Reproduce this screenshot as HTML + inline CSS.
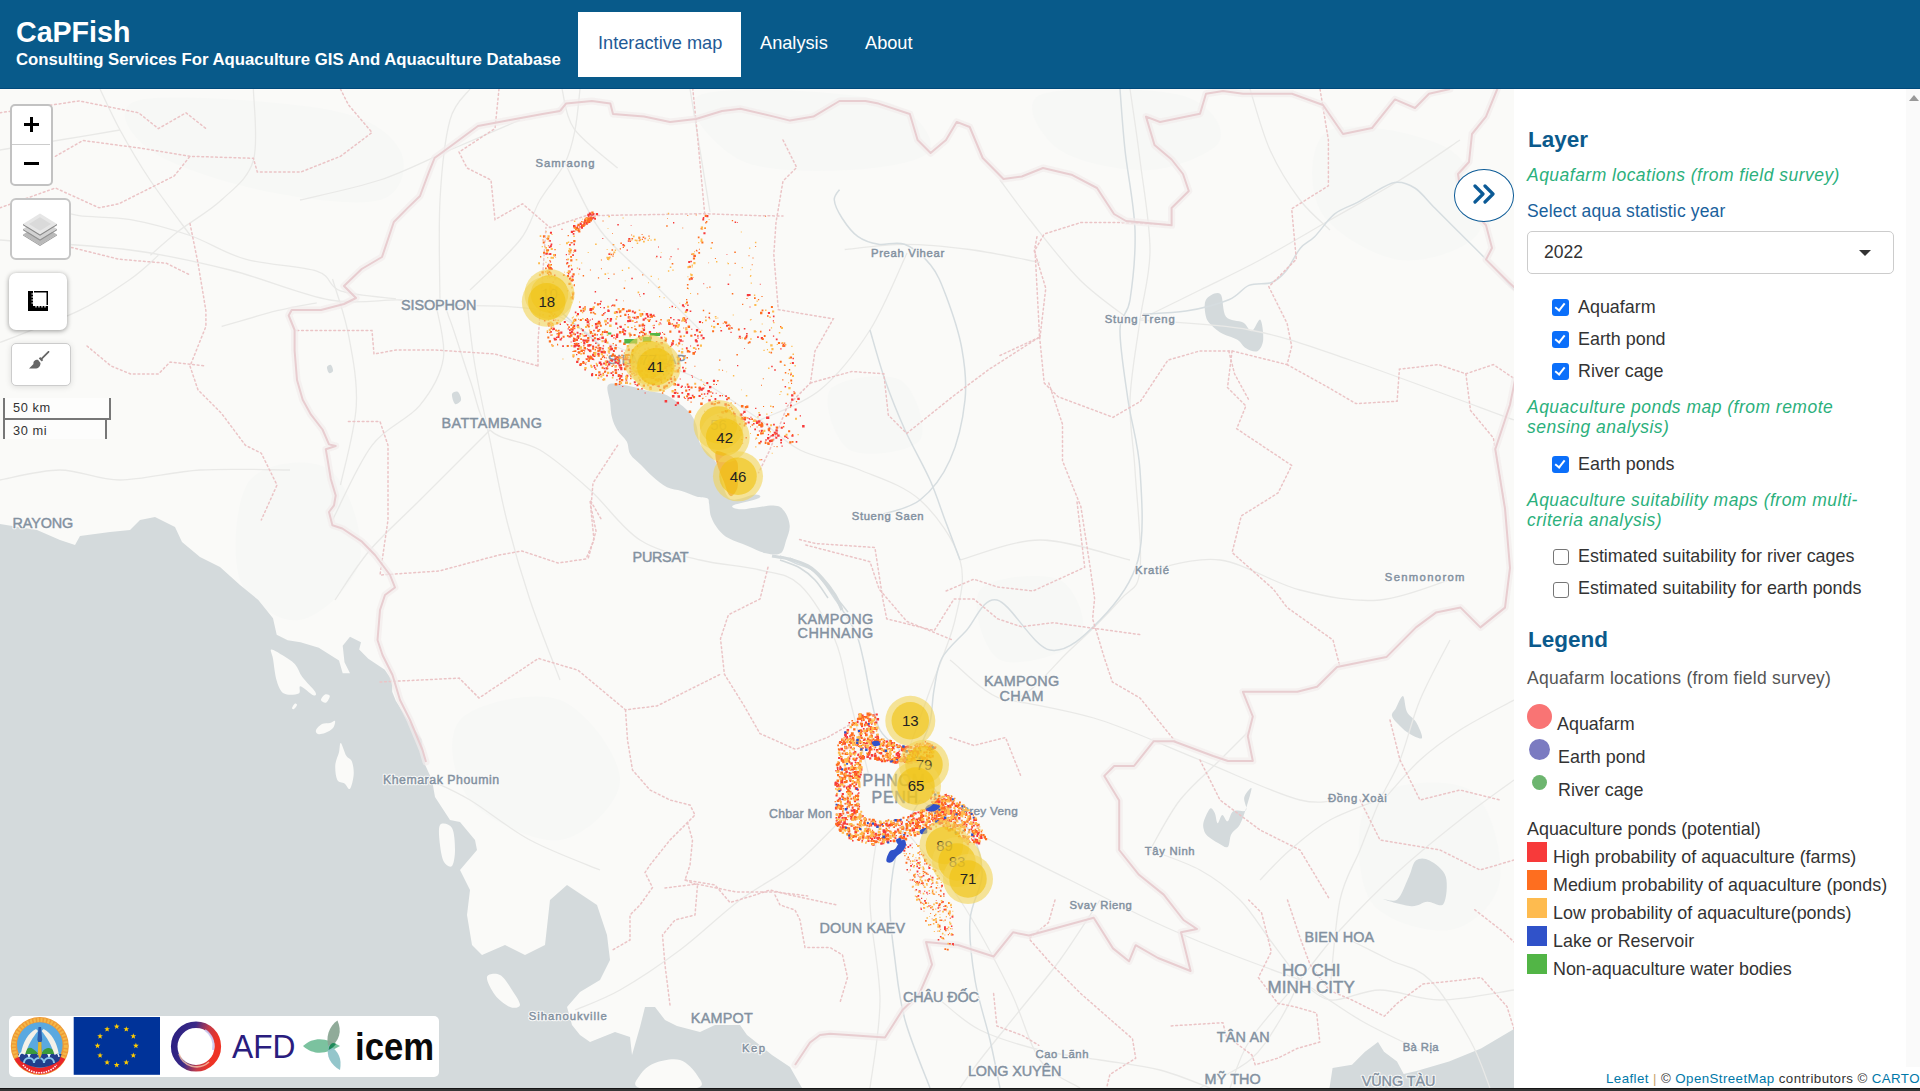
<!DOCTYPE html>
<html><head><meta charset="utf-8">
<style>
*{box-sizing:border-box;margin:0;padding:0}
html,body{width:1920px;height:1091px;overflow:hidden;font-family:"Liberation Sans",sans-serif;background:#fff}
#hdr{position:absolute;left:0;top:0;width:1920px;height:89px;background:#085a8a;border-bottom:1px solid #004a7c}
#title{position:absolute;left:16px;top:15.5px;color:#fff;font-weight:bold;font-size:28.6px;white-space:nowrap}
#sub{position:absolute;left:16px;top:50px;color:#fff;font-weight:bold;font-size:16.74px;white-space:nowrap}
#navsel{position:absolute;left:578px;top:12px;width:163px;height:65px;background:#fff}
.nav{position:absolute;top:33px;font-size:18.2px;color:#fff;white-space:nowrap}

#panel{position:absolute;left:1514px;top:89px;width:406px;height:999px;background:#fff}
#bot{position:absolute;left:0;top:1088px;width:1920px;height:3px;background:#353535;border-top:1px solid #151515}
.t{position:absolute;white-space:nowrap}
#zoomc{position:absolute;left:9.5px;top:103.5px;width:43.5px;height:82px;border:2.5px solid #c2c2c2;border-radius:5px;background:#fff;overflow:hidden}
.zb{position:absolute;left:0;top:0;width:38.5px;height:39px;border-bottom:1px solid #ccc}
.zb.zm{top:39px;border-bottom:none;height:38px}
.zb::before,.zb::after{content:"";position:absolute;background:#000}
.zb:first-child{font-size:0}
.zb:first-child::before{left:12.5px;top:17px;width:15px;height:3.2px}
.zb:first-child::after{left:18.4px;top:11px;width:3.2px;height:15px}
.zm::before{left:12.5px;top:17.5px;width:15px;height:3.2px}
.zm::after{display:none}
#layc{position:absolute;left:9.5px;top:198px;width:61.5px;height:61.5px;border:2.5px solid #c6c6c6;border-radius:6px;background:#fff}
#measc{position:absolute;left:9px;top:272.5px;width:58px;height:57.5px;border-radius:7px;background:#fff;box-shadow:0 1px 5px rgba(0,0,0,0.4)}
#brushc{position:absolute;left:10.5px;top:342.5px;width:60px;height:43px;border:1px solid #ccc;border-radius:5px;background:#fff;box-shadow:0 1px 6px rgba(0,0,0,0.12)}
#scale{position:absolute;left:3px;top:398px}
.sl1{position:absolute;left:0;top:0;width:108px;height:22px;border:2px solid #777;border-top:none;background:rgba(255,255,255,0.5);font-size:12.8px;letter-spacing:0.6px;color:#333;padding:2px 0 0 8px;line-height:16px}
.sl2{position:absolute;left:0;top:20px;width:104px;height:21px;border:2px solid #777;border-bottom:none;background:rgba(255,255,255,0.5);font-size:12.8px;letter-spacing:0.6px;color:#333;padding:3px 0 0 8px;line-height:16px}
#toggle{position:absolute;left:1453.5px;top:169px;width:60px;height:52.5px;border:1.4px solid #0b5a96;border-radius:50%;background:#fff}
#attr{z-index:5;position:absolute;left:1600px;top:1068px;width:330px;height:20px;padding:3px 0 0 6px;background:rgba(255,255,255,0.8);font-size:13.3px;letter-spacing:0.42px;color:#333;white-space:nowrap}
.ln{color:#0078a8}
#logos{position:absolute;left:9px;top:1016px;width:430px;height:61px;background:#fff;border-radius:5px}

.h2{font-weight:bold;font-size:22.5px;color:#0b5a8c}
.gi{font-style:italic;font-size:17.5px;letter-spacing:0.48px;color:#2bb07c}
.sel{font-size:17.5px;letter-spacing:0.15px;color:#1a619c}
.lbl{font-size:17.9px;color:#333}
.lg0{font-size:17.5px;letter-spacing:0.25px;color:#555}
#selbox{position:absolute;left:13px;top:142px;width:367px;height:43px;border:1px solid #ccc;border-radius:5px;background:#fff}
#selbox span{position:absolute;left:16px;top:10px;font-size:17.5px;color:#333}
#selbox i{position:absolute;left:331px;top:18px;width:0;height:0;border-left:6px solid transparent;border-right:6px solid transparent;border-top:6px solid #333}
.cb{position:absolute;width:16.5px;height:16.5px;border-radius:3px;border:1.5px solid #767676;background:#fff;margin:-0.5px 0 0 -0.5px}
.cb.on{background:#0b6cf7;border:none}
.cb.on{width:17px;height:17px;margin:-1px 0 0 -1px;background:#0b6ffa}
.cb.on::after{content:"";position:absolute;left:5.2px;top:1.8px;width:4px;height:8px;border-right:2.8px solid #fff;border-bottom:2.8px solid #fff;transform:rotate(38deg)}
.dot{position:absolute;border-radius:50%}
.sq{position:absolute;left:13px;width:20px;height:20px}
#sbar{position:absolute;left:392px;top:0;width:14px;height:978px;background:#fafafa}
#sarrow{position:absolute;left:395px;top:6px;width:0;height:0;border-left:5px solid transparent;border-right:5px solid transparent;border-bottom:6px solid #999}

</style></head><body>
<!--MAP--><svg id="mapsvg" width="1514" height="1088" viewBox="0 0 1514 1088" style="position:absolute;left:0;top:0">
<rect x="0" y="0" width="1514" height="1088" fill="#fafaf8"/>
<path d="M140 100 C170.0 93.3 286.7 101.7 330.0 110.0 C373.3 118.3 391.7 135.0 400.0 150.0 C408.3 165.0 403.3 193.3 380.0 200.0 C356.7 206.7 298.3 198.3 260.0 190.0 C221.7 181.7 170.0 165.0 150.0 150.0 C130.0 135.0 110.0 106.7 140.0 100.0 Z" fill="#f7f8f6"/>
<path d="M700 95 C723.3 85.0 841.7 90.8 880.0 100.0 C918.3 109.2 935.0 138.3 930.0 150.0 C925.0 161.7 881.7 168.3 850.0 170.0 C818.3 171.7 765.0 172.5 740.0 160.0 C715.0 147.5 676.7 105.0 700.0 95.0 Z" fill="#f7f8f6"/>
<path d="M1040 95 C1060.0 85.8 1150.0 87.5 1180.0 95.0 C1210.0 102.5 1225.0 127.5 1220.0 140.0 C1215.0 152.5 1176.7 168.3 1150.0 170.0 C1123.3 171.7 1078.3 162.5 1060.0 150.0 C1041.7 137.5 1020.0 104.2 1040.0 95.0 Z" fill="#f7f8f6"/>
<path d="M1330 130 C1351.7 120.0 1425.0 133.3 1450.0 150.0 C1475.0 166.7 1488.3 211.7 1480.0 230.0 C1471.7 248.3 1426.7 263.3 1400.0 260.0 C1373.3 256.7 1331.7 231.7 1320.0 210.0 C1308.3 188.3 1308.3 140.0 1330.0 130.0 Z" fill="#f7f8f6"/>
<path d="M250 480 C265.0 461.7 311.7 456.7 330.0 470.0 C348.3 483.3 365.0 535.0 360.0 560.0 C355.0 585.0 320.0 616.7 300.0 620.0 C280.0 623.3 248.3 603.3 240.0 580.0 C231.7 556.7 235.0 498.3 250.0 480.0 Z" fill="#f7f8f6"/>
<path d="M460 720 C475.0 703.3 533.3 690.0 560.0 700.0 C586.7 710.0 620.0 756.7 620.0 780.0 C620.0 803.3 585.0 836.7 560.0 840.0 C535.0 843.3 486.7 820.0 470.0 800.0 C453.3 780.0 445.0 736.7 460.0 720.0 Z" fill="#f7f8f6"/>
<path d="M1370 800 C1386.7 781.7 1448.3 776.7 1470.0 790.0 C1491.7 803.3 1503.3 856.7 1500.0 880.0 C1496.7 903.3 1471.7 926.7 1450.0 930.0 C1428.3 933.3 1383.3 921.7 1370.0 900.0 C1356.7 878.3 1353.3 818.3 1370.0 800.0 Z" fill="#f7f8f6"/>
<path d="M980 590 C990.0 576.7 1043.3 571.7 1060.0 580.0 C1076.7 588.3 1090.0 626.7 1080.0 640.0 C1070.0 653.3 1016.7 668.3 1000.0 660.0 C983.3 651.7 970.0 603.3 980.0 590.0 Z" fill="#f7f8f6"/>
<path d="M830 390 C838.3 378.3 885.0 371.7 900.0 380.0 C915.0 388.3 928.3 428.3 920.0 440.0 C911.7 451.7 865.0 458.3 850.0 450.0 C835.0 441.7 821.7 401.7 830.0 390.0 Z" fill="#f7f8f6"/>
<path d="M0 524 L37 530 L60 540 L75 545 L80 536 L110 532 L130 530 L140 520 L155 517 L175 527 L182 542 L200 557 L220 567 L240 585 L258.3 600 L273 618.3 L276.7 634.8 L287.7 640.3 L300.5 642.2 L318.8 647.7 L339 660.5 L342.7 673.3 L350 673.3 L344.5 662.3 L342.7 645.8 L350 636.7 L361 642.2 L359.2 649.5 L368.3 658.7 L384.8 669.7 L392.2 680.7 L392.2 691.7 L395.8 700.8 L405 715.5 L421.5 739.3 L425.2 765 L432 780 L435 797 L450 820 L460 822 L475 840 L477 850 L460 870 L470 890 L467 915 L472 945 L482 955 L505 945 L525 955 L545 945 L550 900 L567 885 L597 905 L607 935 L610 960 L600 980 L580 992 L567 1007 L572 1025 L580 1035 L590 1042 L615 1032 L630 1037 L632 1055 L640 1027 L645 1007 L655 1007 L665 1020 L677 1026 L700 1032 L715 1025 L740 1025 L747 1035 L772 1055 L790 1067 L802 1088 L0 1088 Z" fill="#d4dadc"/>
<path d="M271.2 649.5 C272.7 648.9 278.2 652.5 282.2 655.0 C286.2 657.5 291.6 660.5 295.0 664.2 C298.4 667.9 298.9 672.4 302.3 677.0 C305.7 681.6 313.4 688.7 315.2 691.7 C317.0 694.8 315.8 696.2 313.3 695.3 C310.9 694.4 302.9 686.5 300.5 686.2 C298.1 685.9 301.4 692.3 298.7 693.5 C295.9 694.7 287.7 695.6 284.0 693.5 C280.3 691.4 278.5 686.5 276.7 680.7 C274.9 674.9 273.9 663.9 273.0 658.7 C272.1 653.5 269.7 650.1 271.2 649.5 Z" fill="#fafaf8"/>
<path d="M340.8 743 C342.0 743.6 344.5 752.8 346.3 755.8 C348.1 758.8 350.6 758.2 351.8 761.3 C353.0 764.4 354.0 769.6 353.7 774.2 C353.4 778.8 351.5 787.3 350.0 788.8 C348.5 790.3 346.6 784.9 344.5 783.4 C342.4 781.9 338.7 782.8 337.2 779.7 C335.7 776.6 335.0 769.6 335.3 765.0 C335.6 760.4 338.1 755.9 339.0 752.2 C339.9 748.5 339.6 742.4 340.8 743.0 Z" fill="#fafaf8"/>
<path d="M316 730 C316.7 728.3 319.7 725.2 322.0 724.0 C324.3 722.8 327.8 723.5 330.0 723.0 C332.2 722.5 334.5 720.2 335.0 721.0 C335.5 721.8 334.7 726.0 333.0 728.0 C331.3 730.0 327.5 732.0 325.0 733.0 C322.5 734.0 319.5 734.5 318.0 734.0 C316.5 733.5 315.3 731.7 316.0 730.0 Z" fill="#fafaf8"/>
<path d="M321 700 C320.8 698.6 323.5 695.1 325.0 694.4 C326.5 693.7 329.6 694.6 329.8 696.0 C330.0 697.4 327.5 702.0 326.0 702.7 C324.5 703.4 321.2 701.4 321.0 700.0 Z" fill="#fafaf8"/>
<path d="M292 708 C292.2 707.1 294.2 704.1 295.0 703.6 C295.8 703.1 297.2 704.1 297.0 705.0 C296.8 705.9 294.8 708.5 294.0 709.0 C293.2 709.5 291.8 708.9 292.0 708.0 Z" fill="#fafaf8"/>
<path d="M440 825 C442.0 822.2 449.5 823.8 452.0 828.0 C454.5 832.2 455.0 843.7 455.0 850.0 C455.0 856.3 453.8 864.0 452.0 866.0 C450.2 868.0 446.0 865.5 444.0 862.0 C442.0 858.5 440.7 851.2 440.0 845.0 C439.3 838.8 438.0 827.8 440.0 825.0 Z" fill="#fafaf8"/>
<path d="M487 977 C487.8 973.7 495.8 972.8 500.0 975.0 C504.2 977.2 508.7 985.0 512.0 990.0 C515.3 995.0 520.3 1002.2 520.0 1005.0 C519.7 1007.8 514.2 1008.7 510.0 1007.0 C505.8 1005.3 498.8 1000.0 495.0 995.0 C491.2 990.0 486.2 980.3 487.0 977.0 Z" fill="#fafaf8"/>
<path d="M640 1075 C642.5 1070.8 648.3 1065.5 655.0 1063.0 C661.7 1060.5 673.0 1058.0 680.0 1060.0 C687.0 1062.0 694.2 1070.3 697.0 1075.0 C699.8 1079.7 706.5 1085.8 697.0 1088.0 C687.5 1090.2 649.5 1090.2 640.0 1088.0 C630.5 1085.8 637.5 1079.2 640.0 1075.0 Z" fill="#fafaf8"/>
<path d="M1329.5 1088 L1332.6 1068 L1352 1064.7 L1365 1051.8 L1378 1042 L1384 1051.8 L1397 1061.5 L1403.7 1074 L1416.6 1071 L1449 1061.5 L1481 1048.5 L1514 1029 L1514 1088 Z" fill="#d4dadc"/>
<path d="M608.3 384.7 C611.0 381.8 620.6 384.7 626.7 385.6 C632.8 386.5 638.9 388.8 645.0 390.2 C651.1 391.6 658.1 392.0 663.3 393.8 C668.5 395.6 671.8 398.1 676.1 401.2 C680.4 404.2 685.6 408.1 689.0 412.1 C692.4 416.1 694.5 419.8 696.3 425.0 C698.1 430.2 697.5 438.1 700.0 443.3 C702.5 448.5 708.0 452.1 711.0 456.1 C714.0 460.1 715.2 460.1 718.3 467.1 C721.3 474.1 723.2 493.7 729.3 498.3 C735.4 502.9 750.1 494.6 755.0 494.6 C759.9 494.6 762.3 496.5 758.6 498.3 C754.9 500.1 735.6 503.8 732.9 505.6 C730.1 507.4 735.4 509.3 742.1 509.3 C748.8 509.3 766.3 505.3 773.3 505.6 C780.3 505.9 781.5 507.7 784.2 511.1 C786.9 514.5 789.4 520.9 789.7 525.8 C790.0 530.7 787.6 535.8 786.1 540.4 C784.6 545.0 784.0 551.1 780.6 553.3 C777.2 555.4 771.4 554.5 765.9 553.3 C760.4 552.1 753.7 548.3 747.6 545.9 C741.5 543.5 734.2 541.4 729.3 538.6 C724.4 535.9 721.3 533.1 718.3 529.4 C715.2 525.7 712.5 520.9 711.0 516.6 C709.5 512.3 709.7 506.9 709.1 503.8 C708.5 500.8 709.4 499.5 707.3 498.3 C705.2 497.1 700.6 497.6 696.3 496.4 C692.0 495.2 686.5 492.4 681.6 490.9 C676.7 489.4 671.9 489.7 667.0 487.3 C662.1 484.9 656.6 480.0 652.3 476.3 C648.0 472.6 645.0 469.0 641.3 465.3 C637.6 461.6 632.7 458.3 630.3 454.3 C627.9 450.3 628.8 445.5 626.7 441.5 C624.6 437.5 620.0 434.5 617.5 430.5 C615.0 426.5 613.2 422.2 612.0 417.6 C610.8 413.0 610.8 408.5 610.2 403.0 C609.6 397.5 605.5 387.6 608.3 384.7 Z" fill="#d4dadc"/>
<path d="M1206 299.7 C1208.4 295.9 1217.0 291.1 1220.3 294.0 C1223.6 296.9 1222.2 312.0 1226.0 316.8 C1229.8 321.6 1238.8 320.2 1243.1 322.6 C1247.4 325.0 1248.8 331.6 1251.7 331.1 C1254.6 330.6 1258.4 318.3 1260.3 319.7 C1262.2 321.1 1263.7 334.4 1263.2 339.7 C1262.7 344.9 1260.3 349.8 1257.4 351.2 C1254.5 352.6 1249.3 350.2 1246.0 348.3 C1242.7 346.4 1241.2 342.1 1237.4 339.7 C1233.6 337.3 1227.4 336.4 1223.1 334.0 C1218.8 331.6 1214.5 328.3 1211.7 325.4 C1208.9 322.5 1207.0 321.1 1206.0 316.8 C1205.0 312.5 1203.6 303.5 1206.0 299.7 Z" fill="#d4dadc"/>
<path d="M1203.8 821.3 C1204.9 817.8 1208.4 809.9 1210.2 808.5 C1212.0 807.1 1213.6 810.5 1214.8 813.0 C1216.0 815.5 1216.4 822.9 1217.6 823.2 C1218.8 823.5 1220.5 815.2 1222.2 814.9 C1223.9 814.6 1225.9 821.9 1227.7 821.3 C1229.5 820.7 1230.2 813.0 1233.2 811.2 C1236.2 809.4 1244.2 812.6 1246.0 810.3 C1247.8 808.0 1243.3 801.2 1244.2 797.5 C1245.1 793.8 1251.2 786.5 1251.5 788.3 C1251.8 790.1 1248.0 802.4 1246.0 808.5 C1244.0 814.6 1242.0 820.7 1239.6 825.0 C1237.1 829.3 1233.3 830.5 1231.3 834.2 C1229.3 837.9 1229.8 845.5 1227.7 847.0 C1225.6 848.5 1221.9 845.1 1218.5 843.3 C1215.1 841.5 1210.0 838.3 1207.5 836.0 C1205.0 833.7 1204.4 832.1 1203.8 829.6 C1203.2 827.1 1202.7 824.8 1203.8 821.3 Z" fill="#d4dadc"/>
<path d="M1397.5 899.3 C1401.7 895.5 1405.9 882.9 1409.0 876.4 C1412.1 869.9 1412.5 863.1 1415.9 860.4 C1419.3 857.7 1424.6 857.7 1429.6 860.4 C1434.6 863.1 1443.4 869.1 1445.7 876.4 C1448.0 883.7 1446.5 899.8 1443.4 904.0 C1440.3 908.2 1432.7 901.3 1427.3 901.7 C1421.9 902.1 1418.5 906.6 1411.3 906.2 C1404.0 905.8 1386.1 900.4 1383.8 899.3 C1381.5 898.1 1393.3 903.1 1397.5 899.3 Z" fill="#d4dadc"/>
<path d="M1396 708 C1397.8 704.7 1401.2 695.3 1403.0 696.0 C1404.8 696.7 1404.8 707.7 1407.0 712.0 C1409.2 716.3 1413.5 717.7 1416.0 722.0 C1418.5 726.3 1423.0 736.0 1422.0 738.0 C1421.0 740.0 1413.7 736.0 1410.0 734.0 C1406.3 732.0 1403.0 729.0 1400.0 726.0 C1397.0 723.0 1392.7 719.0 1392.0 716.0 C1391.3 713.0 1394.2 711.3 1396.0 708.0 Z" fill="#d4dadc"/>
<path d="M452 394 C452.5 392.0 456.5 391.0 458.0 392.0 C459.5 393.0 461.5 398.0 461.0 400.0 C460.5 402.0 456.5 405.0 455.0 404.0 C453.5 403.0 451.5 396.0 452.0 394.0 Z" fill="#d4dadc"/>
<path d="M327 367 C327.3 365.7 330.0 364.3 331.0 365.0 C332.0 365.7 333.3 369.7 333.0 371.0 C332.7 372.3 330.0 373.7 329.0 373.0 C328.0 372.3 326.7 368.3 327.0 367.0 Z" fill="#d4dadc"/>
<path d="M870 780 C866.7 766.7 855.8 723.3 850.0 700.0 C844.2 676.7 843.3 659.2 835.0 640.0 C826.7 620.8 812.5 596.7 800.0 585.0 C787.5 573.3 776.7 574.2 760.0 570.0 C743.3 565.8 720.0 565.0 700.0 560.0 C680.0 555.0 658.3 551.7 640.0 540.0 C621.7 528.3 606.7 505.0 590.0 490.0 C573.3 475.0 556.7 460.0 540.0 450.0 C523.3 440.0 501.7 441.7 490.0 430.0 C478.3 418.3 476.7 398.3 470.0 380.0 C463.3 361.7 455.0 332.5 450.0 320.0 C445.0 307.5 448.3 308.3 440.0 305.0 C431.7 301.7 418.3 300.8 400.0 300.0 C381.7 299.2 358.3 305.0 330.0 300.0 C301.7 295.0 263.3 278.3 230.0 270.0 C196.7 261.7 168.3 255.0 130.0 250.0 C91.7 245.0 21.7 241.7 0.0 240.0" fill="none" stroke="#e9e9e7" stroke-width="1.3" stroke-linejoin="round"/>
<path d="M905 760 C909.2 748.3 921.7 713.3 930.0 690.0 C938.3 666.7 950.0 641.7 955.0 620.0 C960.0 598.3 965.8 580.0 960.0 560.0 C954.2 540.0 936.7 515.0 920.0 500.0 C903.3 485.0 880.0 478.3 860.0 470.0 C840.0 461.7 816.7 458.3 800.0 450.0 C783.3 441.7 776.7 431.7 760.0 420.0 C743.3 408.3 718.3 390.0 700.0 380.0 C681.7 370.0 666.7 366.7 650.0 360.0 C633.3 353.3 618.3 348.3 600.0 340.0 C581.7 331.7 566.7 315.8 540.0 310.0 C513.3 304.2 456.7 305.8 440.0 305.0" fill="none" stroke="#e9e9e7" stroke-width="1.3" stroke-linejoin="round"/>
<path d="M950 660 C960.0 666.7 990.0 701.7 1010.0 700.0 C1030.0 698.3 1051.7 666.7 1070.0 650.0 C1088.3 633.3 1108.3 613.3 1120.0 600.0 C1131.7 586.7 1137.5 591.7 1140.0 570.0 C1142.5 548.3 1136.7 498.3 1135.0 470.0 C1133.3 441.7 1129.2 425.0 1130.0 400.0 C1130.8 375.0 1136.7 345.0 1140.0 320.0 C1143.3 295.0 1150.0 276.7 1150.0 250.0 C1150.0 223.3 1143.3 186.8 1140.0 160.0 C1136.7 133.2 1131.7 100.8 1130.0 89.0" fill="none" stroke="#e9e9e7" stroke-width="1.3" stroke-linejoin="round"/>
<path d="M860 800 C850.0 810.0 820.0 843.3 800.0 860.0 C780.0 876.7 760.0 885.0 740.0 900.0 C720.0 915.0 700.0 935.0 680.0 950.0 C660.0 965.0 637.5 980.0 620.0 990.0 C602.5 1000.0 582.5 1006.7 575.0 1010.0" fill="none" stroke="#e9e9e7" stroke-width="1.3" stroke-linejoin="round"/>
<path d="M920 800 C931.7 806.7 965.0 826.7 990.0 840.0 C1015.0 853.3 1043.3 866.7 1070.0 880.0 C1096.7 893.3 1125.0 908.3 1150.0 920.0 C1175.0 931.7 1195.0 940.0 1220.0 950.0 C1245.0 960.0 1286.7 975.0 1300.0 980.0" fill="none" stroke="#e9e9e7" stroke-width="1.3" stroke-linejoin="round"/>
<path d="M880 820 C878.3 833.3 870.0 870.0 870.0 900.0 C870.0 930.0 880.0 968.7 880.0 1000.0 C880.0 1031.3 871.7 1073.3 870.0 1088.0" fill="none" stroke="#e9e9e7" stroke-width="1.3" stroke-linejoin="round"/>
<path d="M905 830 C914.2 841.7 942.5 873.3 960.0 900.0 C977.5 926.7 996.7 963.3 1010.0 990.0 C1023.3 1016.7 1028.3 1043.7 1040.0 1060.0 C1051.7 1076.3 1073.3 1083.3 1080.0 1088.0" fill="none" stroke="#e9e9e7" stroke-width="1.3" stroke-linejoin="round"/>
<path d="M1300 980 C1306.7 971.7 1323.3 948.3 1340.0 930.0 C1356.7 911.7 1380.0 888.3 1400.0 870.0 C1420.0 851.7 1441.0 835.0 1460.0 820.0 C1479.0 805.0 1505.0 786.7 1514.0 780.0" fill="none" stroke="#e9e9e7" stroke-width="1.3" stroke-linejoin="round"/>
<path d="M1300 980 C1310.0 986.7 1340.0 1008.3 1360.0 1020.0 C1380.0 1031.7 1410.0 1045.0 1420.0 1050.0" fill="none" stroke="#e9e9e7" stroke-width="1.3" stroke-linejoin="round"/>
<path d="M1140 320 C1158.3 321.7 1215.0 323.3 1250.0 330.0 C1285.0 336.7 1306.0 345.0 1350.0 360.0 C1394.0 375.0 1486.7 410.0 1514.0 420.0" fill="none" stroke="#e9e9e7" stroke-width="1.3" stroke-linejoin="round"/>
<path d="M960 560 C973.3 556.7 1011.7 540.0 1040.0 540.0 C1068.3 540.0 1115.0 556.7 1130.0 560.0" fill="none" stroke="#e9e9e7" stroke-width="1.3" stroke-linejoin="round"/>
<path d="M440 305 C440.0 287.5 438.3 230.8 440.0 200.0 C441.7 169.2 445.0 138.5 450.0 120.0 C455.0 101.5 466.7 94.2 470.0 89.0" fill="none" stroke="#e9e9e7" stroke-width="1.3" stroke-linejoin="round"/>
<path d="M565 163 C570.8 174.2 585.8 210.5 600.0 230.0 C614.2 249.5 633.3 263.3 650.0 280.0 C666.7 296.7 691.7 321.7 700.0 330.0" fill="none" stroke="#e9e9e7" stroke-width="1.3" stroke-linejoin="round"/>
<path d="M844.7 249.5 C854.7 248.6 883.8 244.3 904.6 244.3 C925.4 244.3 947.1 246.5 969.7 249.5 C992.3 252.5 1028.3 260.3 1040.0 262.5" fill="none" stroke="#e9e9e7" stroke-width="1.3" stroke-linejoin="round"/>
<path d="M907 253 C900.8 265.8 884.5 307.2 870.0 330.0 C855.5 352.8 838.3 375.0 820.0 390.0 C801.7 405.0 770.0 415.0 760.0 420.0" fill="none" stroke="#e9e9e7" stroke-width="1.3" stroke-linejoin="round"/>
<path d="M1300 980 C1291.7 990.0 1261.7 1022.0 1250.0 1040.0 C1238.3 1058.0 1233.3 1080.0 1230.0 1088.0" fill="none" stroke="#e9e9e7" stroke-width="1.3" stroke-linejoin="round"/>
<path d="M1010 700 C1025.0 703.3 1068.3 710.0 1100.0 720.0 C1131.7 730.0 1166.7 746.7 1200.0 760.0 C1233.3 773.3 1275.0 793.8 1300.0 800.0 C1325.0 806.2 1341.7 797.5 1350.0 797.0" fill="none" stroke="#e9e9e7" stroke-width="1.3" stroke-linejoin="round"/>
<path d="M490 430 C478.3 441.7 440.0 480.0 420.0 500.0 C400.0 520.0 384.2 533.3 370.0 550.0 C355.8 566.7 340.8 591.7 335.0 600.0" fill="none" stroke="#e9e9e7" stroke-width="1.3" stroke-linejoin="round"/>
<path d="M0 480 C10.0 478.3 40.0 470.0 60.0 470.0 C80.0 470.0 96.7 480.0 120.0 480.0 C143.3 480.0 171.7 471.7 200.0 470.0 C228.3 468.3 275.0 470.0 290.0 470.0" fill="none" stroke="#e9e9e7" stroke-width="1.3" stroke-linejoin="round"/>
<path d="M1300 980 C1295.0 973.3 1280.0 953.3 1270.0 940.0 C1260.0 926.7 1251.7 911.7 1240.0 900.0 C1228.3 888.3 1215.0 878.3 1200.0 870.0 C1185.0 861.7 1158.3 853.3 1150.0 850.0" fill="none" stroke="#e9e9e7" stroke-width="1.3" stroke-linejoin="round"/>
<path d="M1300 980 C1305.0 983.3 1316.7 998.3 1330.0 1000.0 C1343.3 1001.7 1361.7 990.0 1380.0 990.0 C1398.3 990.0 1417.7 1000.0 1440.0 1000.0 C1462.3 1000.0 1501.7 991.7 1514.0 990.0" fill="none" stroke="#e9e9e7" stroke-width="1.3" stroke-linejoin="round"/>
<path d="M1300 980 C1296.7 986.7 1288.3 1006.7 1280.0 1020.0 C1271.7 1033.3 1263.3 1048.7 1250.0 1060.0 C1236.7 1071.3 1208.3 1083.3 1200.0 1088.0" fill="none" stroke="#e9e9e7" stroke-width="1.3" stroke-linejoin="round"/>
<path d="M1350 940 C1356.7 943.3 1376.7 953.3 1390.0 960.0 C1403.3 966.7 1416.7 966.7 1430.0 980.0 C1443.3 993.3 1460.0 1022.0 1470.0 1040.0 C1480.0 1058.0 1486.7 1080.0 1490.0 1088.0" fill="none" stroke="#e9e9e7" stroke-width="1.3" stroke-linejoin="round"/>
<path d="M1330 990 C1331.7 975.0 1335.0 923.3 1340.0 900.0 C1345.0 876.7 1353.3 866.7 1360.0 850.0 C1366.7 833.3 1373.3 815.0 1380.0 800.0 C1386.7 785.0 1393.3 776.7 1400.0 760.0 C1406.7 743.3 1411.7 720.0 1420.0 700.0 C1428.3 680.0 1445.0 650.0 1450.0 640.0" fill="none" stroke="#e9e9e7" stroke-width="1.3" stroke-linejoin="round"/>
<path d="M1150 850 C1155.0 841.7 1168.3 815.0 1180.0 800.0 C1191.7 785.0 1208.3 771.7 1220.0 760.0 C1231.7 748.3 1245.0 735.0 1250.0 730.0" fill="none" stroke="#e9e9e7" stroke-width="1.3" stroke-linejoin="round"/>
<path d="M1100 900 C1093.3 910.0 1073.3 941.7 1060.0 960.0 C1046.7 978.3 1033.3 993.3 1020.0 1010.0 C1006.7 1026.7 990.0 1047.0 980.0 1060.0 C970.0 1073.0 963.3 1083.3 960.0 1088.0" fill="none" stroke="#e9e9e7" stroke-width="1.3" stroke-linejoin="round"/>
<path d="M940 1000 C946.7 1005.0 963.3 1021.7 980.0 1030.0 C996.7 1038.3 1020.0 1045.0 1040.0 1050.0 C1060.0 1055.0 1080.0 1056.7 1100.0 1060.0 C1120.0 1063.3 1141.7 1065.3 1160.0 1070.0 C1178.3 1074.7 1201.7 1085.0 1210.0 1088.0" fill="none" stroke="#e9e9e7" stroke-width="1.3" stroke-linejoin="round"/>
<path d="M1386 797 C1391.7 790.8 1407.7 771.2 1420.0 760.0 C1432.3 748.8 1444.3 740.0 1460.0 730.0 C1475.7 720.0 1505.0 705.0 1514.0 700.0" fill="none" stroke="#e9e9e7" stroke-width="1.3" stroke-linejoin="round"/>
<path d="M1386 797 C1376.7 800.8 1346.0 811.2 1330.0 820.0 C1314.0 828.8 1301.7 840.0 1290.0 850.0 C1278.3 860.0 1265.0 875.0 1260.0 880.0" fill="none" stroke="#e9e9e7" stroke-width="1.3" stroke-linejoin="round"/>
<path d="M1139 320 C1149.2 315.0 1179.8 300.0 1200.0 290.0 C1220.2 280.0 1238.3 271.7 1260.0 260.0 C1281.7 248.3 1306.7 233.3 1330.0 220.0 C1353.3 206.7 1378.3 193.3 1400.0 180.0 C1421.7 166.7 1450.0 146.7 1460.0 140.0" fill="none" stroke="#e9e9e7" stroke-width="1.3" stroke-linejoin="round"/>
<path d="M1000 180 C1005.0 186.7 1016.7 203.3 1030.0 220.0 C1043.3 236.7 1063.3 263.3 1080.0 280.0 C1096.7 296.7 1121.7 313.3 1130.0 320.0" fill="none" stroke="#e9e9e7" stroke-width="1.3" stroke-linejoin="round"/>
<path d="M580 89 C579.2 95.8 577.5 117.7 575.0 130.0 C572.5 142.3 570.8 151.3 565.0 163.0 C559.2 174.7 547.5 187.2 540.0 200.0 C532.5 212.8 531.7 225.0 520.0 240.0 C508.3 255.0 478.3 281.7 470.0 290.0" fill="none" stroke="#e9e9e7" stroke-width="1.3" stroke-linejoin="round"/>
<path d="M300 200 C313.3 196.7 355.0 188.3 380.0 180.0 C405.0 171.7 426.7 160.0 450.0 150.0 C473.3 140.0 508.3 125.0 520.0 120.0" fill="none" stroke="#e9e9e7" stroke-width="1.3" stroke-linejoin="round"/>
<path d="M430 780 C436.7 783.3 453.3 790.0 470.0 800.0 C486.7 810.0 508.3 828.3 530.0 840.0 C551.7 851.7 588.3 865.0 600.0 870.0" fill="none" stroke="#e9e9e7" stroke-width="1.3" stroke-linejoin="round"/>
<path d="M690 89 C691.7 99.2 696.7 129.5 700.0 150.0 C703.3 170.5 708.3 201.7 710.0 212.0" fill="none" stroke="#e9e9e7" stroke-width="1.3" stroke-linejoin="round"/>
<path d="M1150 570 C1161.7 568.3 1195.0 556.7 1220.0 560.0 C1245.0 563.3 1273.3 583.3 1300.0 590.0 C1326.7 596.7 1353.3 602.3 1380.0 600.0 C1406.7 597.7 1446.7 580.0 1460.0 576.0" fill="none" stroke="#e9e9e7" stroke-width="1.3" stroke-linejoin="round"/>
<path d="M1250 89 C1253.3 99.2 1261.7 131.5 1270.0 150.0 C1278.3 168.5 1290.0 186.7 1300.0 200.0 C1310.0 213.3 1325.0 225.0 1330.0 230.0" fill="none" stroke="#e9e9e7" stroke-width="1.3" stroke-linejoin="round"/>
<path d="M51.5 207.8 C56.1 209.1 65.8 213.7 79.0 215.7 C92.2 217.7 112.1 216.3 130.6 219.6 C149.1 222.9 170.9 228.9 190.0 235.5 C209.1 242.1 224.3 253.3 245.4 259.2 C266.5 265.1 300.8 265.8 316.7 271.1 C332.6 276.4 327.3 286.3 340.5 290.9 C353.7 295.5 386.8 297.5 396.0 298.8" fill="none" stroke="#e9e9e7" stroke-width="1.3" stroke-linejoin="round"/>
<path d="M150.4 255.3 C155.0 251.3 166.1 240.8 178.0 231.5 C189.9 222.2 209.1 211.7 221.7 199.8 C234.3 187.9 248.1 178.8 253.4 160.3 C258.7 141.8 253.4 100.9 253.4 89.0" fill="none" stroke="#e9e9e7" stroke-width="1.3" stroke-linejoin="round"/>
<path d="M0 342.4 C13.2 337.1 57.2 321.3 79.0 310.7 C100.8 300.1 117.4 288.2 130.6 279.0 C143.8 269.8 153.8 259.2 158.4 255.3" fill="none" stroke="#e9e9e7" stroke-width="1.3" stroke-linejoin="round"/>
<path d="M221.7 326.5 C230.9 323.9 261.2 314.6 277.0 310.7 C292.8 306.8 310.1 304.1 316.7 302.8" fill="none" stroke="#e9e9e7" stroke-width="1.3" stroke-linejoin="round"/>
<path d="M332.5 279 C335.1 288.2 344.4 313.3 348.4 334.4 C352.4 355.5 357.6 380.6 356.3 405.7 C355.0 430.8 343.1 471.8 340.5 485.0" fill="none" stroke="#e9e9e7" stroke-width="1.3" stroke-linejoin="round"/>
<path d="M435.5 302.8 C436.8 312.0 446.0 341.1 443.4 358.2 C440.8 375.3 431.5 391.2 419.6 405.7 C407.7 420.2 386.5 426.2 372.0 445.3 C357.5 464.4 339.1 507.6 332.5 520.0" fill="none" stroke="#e9e9e7" stroke-width="1.3" stroke-linejoin="round"/>
<path d="M467 302.8 C468.3 313.3 471.0 342.2 475.0 366.0 C479.0 389.8 485.7 419.6 491.0 445.3 C496.3 471.0 500.2 494.2 506.7 520.0 C513.2 545.8 521.1 573.3 530.0 600.0 C538.9 626.7 555.0 666.7 560.0 680.0" fill="none" stroke="#e9e9e7" stroke-width="1.3" stroke-linejoin="round"/>
<path d="M562 89 C564.0 95.6 564.7 115.4 574.0 128.6 C583.3 141.8 610.3 161.4 617.6 168.0" fill="none" stroke="#e9e9e7" stroke-width="1.3" stroke-linejoin="round"/>
<path d="M100 89 C103.3 95.8 111.7 114.8 120.0 130.0 C128.3 145.2 138.3 162.5 150.0 180.0 C161.7 197.5 183.3 225.8 190.0 235.0" fill="none" stroke="#e9e9e7" stroke-width="1.3" stroke-linejoin="round"/>
<path d="M0 150 C10.0 148.3 40.0 143.3 60.0 140.0 C80.0 136.7 110.0 131.7 120.0 130.0" fill="none" stroke="#e9e9e7" stroke-width="1.3" stroke-linejoin="round"/>
<path d="M1514 290 C1509.4 284.9 1495.7 269.4 1486.3 259.6 C1476.9 249.8 1466.3 239.6 1457.7 231.0 C1449.1 222.4 1442.0 215.2 1434.8 208.0 C1427.6 200.8 1421.5 192.3 1414.8 188.0 C1408.1 183.7 1401.9 181.4 1394.7 182.4 C1387.5 183.4 1378.0 190.5 1371.8 193.8 C1365.6 197.1 1363.7 199.1 1357.5 202.4 C1351.3 205.8 1341.9 208.2 1334.7 213.9 C1327.5 219.6 1320.3 231.0 1314.6 236.7 C1308.9 242.4 1305.1 242.5 1300.3 248.2 C1295.5 253.9 1290.8 265.3 1286.0 271.0 C1281.2 276.7 1277.9 280.1 1271.7 282.5 C1265.5 284.9 1256.1 282.5 1248.9 285.4 C1241.8 288.3 1239.3 295.4 1228.8 299.7 C1218.3 304.0 1200.3 308.7 1186.0 311.1 C1171.7 313.5 1150.2 313.5 1143.0 314.0" fill="none" stroke="#d6dde0" stroke-width="1.5" stroke-linejoin="round"/>
<path d="M839.5 189.6 C838.6 191.3 833.9 195.3 834.3 200.0 C834.7 204.7 838.1 211.9 842.0 218.0 C845.9 224.1 851.6 232.0 857.7 236.4 C863.8 240.8 870.7 243.0 878.5 244.3 C886.3 245.6 895.8 240.9 904.5 244.3 C913.2 247.8 923.6 256.3 930.6 265.0 C937.6 273.7 941.0 282.4 946.2 296.3 C951.4 310.2 958.7 331.1 961.8 348.4 C964.9 365.7 967.0 381.4 965.0 400.0 C963.0 418.6 957.5 443.3 950.0 460.0 C942.5 476.7 931.7 490.8 920.0 500.0 C908.3 509.2 886.7 512.5 880.0 515.0" fill="none" stroke="#d6dde0" stroke-width="1.5" stroke-linejoin="round"/>
<path d="M780 556 C782.5 557.2 789.2 560.3 795.0 563.0 C800.8 565.7 808.3 566.0 815.0 572.0 C821.7 578.0 828.3 589.2 835.0 599.0 C841.7 608.8 850.3 621.2 855.0 631.0 C859.7 640.8 860.3 646.8 863.0 658.0 C865.7 669.2 868.2 686.0 871.0 698.0 C873.8 710.0 875.2 721.3 880.0 730.0 C884.8 738.7 896.7 746.7 900.0 750.0" fill="none" stroke="#d6dde0" stroke-width="1.5" stroke-linejoin="round"/>
<path d="M1120 89 C1120.8 99.2 1122.5 126.5 1125.0 150.0 C1127.5 173.5 1134.2 205.0 1135.0 230.0 C1135.8 255.0 1132.5 283.3 1130.0 300.0 C1127.5 316.7 1120.3 313.3 1120.0 330.0 C1119.7 346.7 1124.7 376.7 1128.0 400.0 C1131.3 423.3 1138.3 443.3 1140.0 470.0 C1141.7 496.7 1144.7 535.0 1138.0 560.0 C1131.3 585.0 1114.7 605.0 1100.0 620.0 C1085.3 635.0 1067.2 653.3 1050.0 650.0 C1032.8 646.7 1011.0 603.2 997.0 600.0 C983.0 596.8 975.2 621.3 966.0 631.0 C956.8 640.7 947.3 648.2 942.0 658.0 C936.7 667.8 936.0 679.3 934.0 690.0 C932.0 700.7 932.7 710.3 930.0 722.0 C927.3 733.7 917.2 748.7 918.0 760.0 C918.8 771.3 928.0 780.0 935.0 790.0 C942.0 800.0 953.3 811.7 960.0 820.0 C966.7 828.3 971.3 830.7 975.0 840.0 C978.7 849.3 982.8 862.7 982.0 876.0 C981.2 889.3 971.2 902.7 970.0 920.0 C968.8 937.3 971.7 960.0 975.0 980.0 C978.3 1000.0 985.8 1022.0 990.0 1040.0 C994.2 1058.0 998.3 1080.0 1000.0 1088.0" fill="none" stroke="#d6dde0" stroke-width="1.5" stroke-linejoin="round"/>
<path d="M870 330 C872.5 338.3 879.2 363.3 885.0 380.0 C890.8 396.7 897.5 413.3 905.0 430.0 C912.5 446.7 923.3 465.0 930.0 480.0 C936.7 495.0 940.0 506.7 945.0 520.0 C950.0 533.3 957.5 553.3 960.0 560.0" fill="none" stroke="#d6dde0" stroke-width="1.5" stroke-linejoin="round"/>
<path d="M548 300 C551.7 303.3 561.3 312.5 570.0 320.0 C578.7 327.5 595.0 340.8 600.0 345.0" fill="none" stroke="#d6dde0" stroke-width="1.5" stroke-linejoin="round"/>
<path d="M920 800 C916.7 806.7 905.0 823.3 900.0 840.0 C895.0 856.7 890.8 880.0 890.0 900.0 C889.2 920.0 892.5 940.0 895.0 960.0 C897.5 980.0 899.2 998.7 905.0 1020.0 C910.8 1041.3 925.8 1076.7 930.0 1088.0" fill="none" stroke="#d6dde0" stroke-width="1.5" stroke-linejoin="round"/>
<path d="M772 556 C774.8 556.5 783.0 557.3 789.0 559.0 C795.0 560.7 802.5 562.8 808.0 566.0 C813.5 569.2 817.5 573.2 822.0 578.0 C826.5 582.8 831.7 589.7 835.0 595.0 C838.3 600.3 840.8 607.5 842.0 610.0" fill="none" stroke="#d4dadc" stroke-width="3.2"/>
<path d="M780 560 C783.3 561.3 794.2 564.7 800.0 568.0 C805.8 571.3 810.3 575.0 815.0 580.0 C819.7 585.0 825.8 595.0 828.0 598.0" fill="none" stroke="#d4dadc" stroke-width="1.6"/>
<path d="M790 558 C793.7 560.0 805.3 564.7 812.0 570.0 C818.7 575.3 824.0 583.0 830.0 590.0 C836.0 597.0 845.0 608.3 848.0 612.0" fill="none" stroke="#d4dadc" stroke-width="1.4"/>
<path d="M297 330.5 L372 330.5 L374 354 L396 350 L435.5 350 L495 354 L538 366" fill="none" stroke="#ebc4c6" stroke-width="1.5" stroke-dasharray="1.8 2.8" stroke-linecap="round"/>
<path d="M459 152 L467 168 L491 180 L495 219.6 L522.6 203.8 L550 227.6 L586 215.7 L704.7 213.7 L760 215.7 L783 216" fill="none" stroke="#ebc4c6" stroke-width="1.5" stroke-dasharray="1.8 2.8" stroke-linecap="round"/>
<path d="M499 89 L495 128.6 L459 152" fill="none" stroke="#ebc4c6" stroke-width="1.5" stroke-dasharray="1.8 2.8" stroke-linecap="round"/>
<path d="M704.7 213.7 L696.8 128.6 L692.8 89" fill="none" stroke="#ebc4c6" stroke-width="1.5" stroke-dasharray="1.8 2.8" stroke-linecap="round"/>
<path d="M538 366 L538 342 L546 227.6" fill="none" stroke="#ebc4c6" stroke-width="1.5" stroke-dasharray="1.8 2.8" stroke-linecap="round"/>
<path d="M348.4 421.5 L380 421.5 L388 445.3 L388 520 L380 575 L439 571 L499 555 L522 551 L558 563 L586 559 L594 540 L590 500 L601.7 520" fill="none" stroke="#ebc4c6" stroke-width="1.5" stroke-dasharray="1.8 2.8" stroke-linecap="round"/>
<path d="M617.6 445.3 L593 483 L591 507 L596 531 L588 559" fill="none" stroke="#ebc4c6" stroke-width="1.5" stroke-dasharray="1.8 2.8" stroke-linecap="round"/>
<path d="M0 112.8 L79 100.9 L138.6 112.8 L158.4 128.6 L186 112.8 L206 128.6" fill="none" stroke="#ebc4c6" stroke-width="1.5" stroke-dasharray="1.8 2.8" stroke-linecap="round"/>
<path d="M55.4 156.3 L83 140.5 L142.5 148.4 L190 156.3 L253.4 158.3 L257.3 172 L300.9 172 L340.5 156.3 L356.3 144.4 L372 132.5 L348.4 104.8 L340.5 89" fill="none" stroke="#ebc4c6" stroke-width="1.5" stroke-dasharray="1.8 2.8" stroke-linecap="round"/>
<path d="M0 207.8 L55.4 188 L99 207.8 L118.8 203.8 L174.2 176 L190 156.3" fill="none" stroke="#ebc4c6" stroke-width="1.5" stroke-dasharray="1.8 2.8" stroke-linecap="round"/>
<path d="M190 223.6 L198 263.2 L205.9 310.7 L205.9 326.5 L190 366.1 L198 389.9 L221.7 413.6 L245.4 445.3 L261.3 453.2 L277 485 L261.3 520" fill="none" stroke="#ebc4c6" stroke-width="1.5" stroke-dasharray="1.8 2.8" stroke-linecap="round"/>
<path d="M71.3 247.4 L118.8 259.2 L166.3 263.2 L190 275" fill="none" stroke="#ebc4c6" stroke-width="1.5" stroke-dasharray="1.8 2.8" stroke-linecap="round"/>
<path d="M87 346 L111 366 L130.6 374 L158.4 374 L170.2 362 L205.9 366" fill="none" stroke="#ebc4c6" stroke-width="1.5" stroke-dasharray="1.8 2.8" stroke-linecap="round"/>
<path d="M783 140 L796.7 167.5 L783 181 L776 222.5 L773.8 254.6 L778.3 309.6 L833.3 318.8 L815 351 L810.4 383 L787.5 405.9 L769 451.7 L758.6 472.6" fill="none" stroke="#ebc4c6" stroke-width="1.5" stroke-dasharray="1.8 2.8" stroke-linecap="round"/>
<path d="M810.4 383 L851.7 371.5 L883.8 373.8 L888.3 415 L906.7 433.4 L952.5 396.7 L989.2 369.2 L1039.6 337 L1035 250 L1044.2 234 L1080.9 222.5 L1117.5 222.5 L1172.5 224.8" fill="none" stroke="#ebc4c6" stroke-width="1.5" stroke-dasharray="1.8 2.8" stroke-linecap="round"/>
<path d="M1039.6 337 L1044.2 383 L1058 396.7 L1113 417.3 L1140.5 401.3 L1168 360 L1200 350.9 L1232.1 350.9 L1287.1 364.6 L1291.7 346.3 L1287.1 323.4 L1268.8 286.7 L1296.3 259.2 L1291.7 208.8 L1328.4 185.8 L1328.4 140 L1320 89" fill="none" stroke="#ebc4c6" stroke-width="1.5" stroke-dasharray="1.8 2.8" stroke-linecap="round"/>
<path d="M1287.1 364.6 L1328.4 387.5 L1355.9 403.6 L1397.1 401.3 L1399.4 369.2 L1438.4 364.6 L1465.9 373.8 L1493.4 364.6 L1514 378.4" fill="none" stroke="#ebc4c6" stroke-width="1.5" stroke-dasharray="1.8 2.8" stroke-linecap="round"/>
<path d="M1232.1 350.9 L1227.5 387.5 L1245.9 405.9 L1236.7 428.8 L1291.7 465.4 L1278 493 L1241.3 515.9 L1232.1 552.5 L1273.4 589.2 L1287.1 607.5 L1333 640 L1340 667" fill="none" stroke="#ebc4c6" stroke-width="1.5" stroke-dasharray="1.8 2.8" stroke-linecap="round"/>
<path d="M1048.8 383 L1062.5 424.2 L1062.5 460.9 L1080.9 506.7 L1090 566.3 L1094.6 598.4 L1092.6 618.8 L1104.5 658.4 L1112.4 682 L1140 698 L1175 741" fill="none" stroke="#ebc4c6" stroke-width="1.5" stroke-dasharray="1.8 2.8" stroke-linecap="round"/>
<path d="M1465.9 373.8 L1470.5 410.4 L1493.4 438 L1505 508" fill="none" stroke="#ebc4c6" stroke-width="1.5" stroke-dasharray="1.8 2.8" stroke-linecap="round"/>
<path d="M805.8 545 L870 561.7 L879.2 589.2 L906.7 621.3 L952.5 640" fill="none" stroke="#ebc4c6" stroke-width="1.5" stroke-dasharray="1.8 2.8" stroke-linecap="round"/>
<path d="M768 567.3 L760 599 L728.4 614.8 L720.5 638.6 L724.4 674.2 L744.2 705.9 L760 733.6 L795.7 749.4 L827.3 737.5 L855 721.7" fill="none" stroke="#ebc4c6" stroke-width="1.5" stroke-dasharray="1.8 2.8" stroke-linecap="round"/>
<path d="M380 682 L459.2 678.1 L479 698 L538.4 658.4 L578 670.2 L625.5 709.8 L657.1 705.9 L688.8 690 L720.5 674.2" fill="none" stroke="#ebc4c6" stroke-width="1.5" stroke-dasharray="1.8 2.8" stroke-linecap="round"/>
<path d="M625.5 709.8 L627.5 740 L632.5 770 L650 790 L670 800 L690 805 L695 815 L687.5 822.5 L670 840 L650 865 L645 872.5 L652.5 887.5 L640 905 L630 915 L630 940 L612.5 950" fill="none" stroke="#ebc4c6" stroke-width="1.5" stroke-dasharray="1.8 2.8" stroke-linecap="round"/>
<path d="M687.5 822.5 L692.5 840 L690 865 L685 880 L697.5 885 L695 915 L675 920 L662.5 935 L665 965 L670 1005" fill="none" stroke="#ebc4c6" stroke-width="1.5" stroke-dasharray="1.8 2.8" stroke-linecap="round"/>
<path d="M685 880 L715 885 L730 902.5 L755 895 L770 890 L790 895 L825 902.5 L837.5 905" fill="none" stroke="#ebc4c6" stroke-width="1.5" stroke-dasharray="1.8 2.8" stroke-linecap="round"/>
<path d="M775 895 L780 905 L795 910 L800 920 L805 947.5 L830 947.5 L842.5 955 L847.5 977.5 L840 1002.5" fill="none" stroke="#ebc4c6" stroke-width="1.5" stroke-dasharray="1.8 2.8" stroke-linecap="round"/>
<path d="M799.6 539.6 L815.5 543.5 L874.9 547.5 L882.8 599 L886.7 618.8 L934.2 630.6 L954 599 L973.8 599 L997.6 618.8 L1021.3 626.7 L1053 622.7 L1140 634.6" fill="none" stroke="#ebc4c6" stroke-width="1.5" stroke-dasharray="1.8 2.8" stroke-linecap="round"/>
<path d="M946.1 591 L973.8 579.2 L997.6 587 L1033 591 L1084.7 567.3 L1076.8 500" fill="none" stroke="#ebc4c6" stroke-width="1.5" stroke-dasharray="1.8 2.8" stroke-linecap="round"/>
<path d="M950 737.5 L973.8 745.5 L1005.5 737.5 L1021.3 777.1" fill="none" stroke="#ebc4c6" stroke-width="1.5" stroke-dasharray="1.8 2.8" stroke-linecap="round"/>
<path d="M665 888 L696.7 884 L736.3 892 L775.9 892 L807.6 895.9" fill="none" stroke="#ebc4c6" stroke-width="1.5" stroke-dasharray="1.8 2.8" stroke-linecap="round"/>
<path d="M1055 900 L1048.5 922.6 L1029 938.7 L1051.8 964.6 L1080.8 993.6 L1106.6 1016.2 L1132.5 1038.8 L1135.7 1058.2 L1109.9 1074.4 L1106.6 1088" fill="none" stroke="#ebc4c6" stroke-width="1.5" stroke-dasharray="1.8 2.8" stroke-linecap="round"/>
<path d="M993.6 993.6 L996.9 1026 L1022.7 1035.6 L1038.8 1045.3" fill="none" stroke="#ebc4c6" stroke-width="1.5" stroke-dasharray="1.8 2.8" stroke-linecap="round"/>
<path d="M1171.2 1025.9 L1222.9 1022.7 L1226.1 1035.6 L1251.9 1055 L1255.2 1064.7 L1277.8 1058.2 L1297.1 1048.5 L1319.8 1042 L1316.6 1013 L1294 1006.6 L1277.8 1003.3 L1258.4 977.5 L1271.3 951.7 L1261.6 912.9 L1248.7 900" fill="none" stroke="#ebc4c6" stroke-width="1.5" stroke-dasharray="1.8 2.8" stroke-linecap="round"/>
<path d="M1287.5 900 L1300.4 938.7 L1310.1 964.6 L1329.5 990.4 L1352 1000 L1384.3 1016.2 L1397.2 1003.3 L1423 984 L1455.4 980.7 L1481.2 977.5 L1507 1006.6 L1514 1029" fill="none" stroke="#ebc4c6" stroke-width="1.5" stroke-dasharray="1.8 2.8" stroke-linecap="round"/>
<path d="M1474.7 909.7 L1503.8 932.3 L1514 942" fill="none" stroke="#ebc4c6" stroke-width="1.5" stroke-dasharray="1.8 2.8" stroke-linecap="round"/>
<path d="M1037 236.7 L1034.3 251 L1045.8 288.2 L1040 337" fill="none" stroke="#ebc4c6" stroke-width="1.5" stroke-dasharray="1.8 2.8" stroke-linecap="round"/>
<path d="M1000 355.5 L1040 337" fill="none" stroke="#ebc4c6" stroke-width="1.5" stroke-dasharray="1.8 2.8" stroke-linecap="round"/>
<path d="M1228.8 351 L1234.6 374 L1248.9 400" fill="none" stroke="#ebc4c6" stroke-width="1.5" stroke-dasharray="1.8 2.8" stroke-linecap="round"/>
<path d="M1390 720 L1400 760 L1420 800 L1460 790 L1500 800" fill="none" stroke="#ebc4c6" stroke-width="1.5" stroke-dasharray="1.8 2.8" stroke-linecap="round"/>
<path d="M1360 800 L1380 840 L1440 850 L1480 870 L1514 860" fill="none" stroke="#ebc4c6" stroke-width="1.5" stroke-dasharray="1.8 2.8" stroke-linecap="round"/>
<path d="M1200 760 L1220 800 L1260 830 L1300 850 L1330 900" fill="none" stroke="#ebc4c6" stroke-width="1.5" stroke-dasharray="1.8 2.8" stroke-linecap="round"/>
<path d="M560 111 L542.5 114 L510 120 L478 126 L455 143 L434.6 158 L428.7 172.6 L420 196 L408 207.6 L393.8 222 L382 257 L361.7 269 L344 286 L356 298 L344 304 L321 310 L291.7 310 L288.7 315.5 L294.6 330 L294.6 350.5 L297 380 L302.7 399.8 L311 414.7 L322.5 429.5 L329 444.4 L335.7 446 L325.8 449.3 L327.5 459.2 L330.8 479 L335.7 495.5 L334 505.4 L329 512 L332.4 525.2 L342.3 528.5 L362 541.7 L375 555 L390 575 L395 587.5 L385 595 L380 610 L377.5 640 L382.5 655 L392.5 675 L400 700 L410 720 L422.5 750 L426 762" fill="none" stroke="#f2ecec" stroke-width="7" stroke-linejoin="round" stroke-linecap="round" opacity="0.7"/>
<path d="M560 111 L566 103.6 L592 101 L610.3 103.6 L613 114 L644 116.6 L670 121.9 L696 119 L722 111 L740.5 108.8 L774 116.6 L790 120.6 L813.4 116.6 L839.5 101 L865.5 101 L878.5 103.6 L909.8 114 L917.6 140 L930.6 153 L946 140 L956.7 121.9 L969.7 127 L982.7 158 L1003.5 179 L1021.8 176.5 L1043 168 L1071.5 174.7 L1097 188 L1114 214 L1126 221 L1171.6 225.3 L1171.6 208 L1188.8 191 L1183 174 L1171.6 159.5 L1154.5 145 L1146 116.6 L1160 122 L1200 113.7 L1206 93.7 L1223 91 L1243 93.7 L1292 93.7 L1323 105 L1343 134 L1372 128 L1395 99.4 L1415 108 L1429 93.7 L1450 89" fill="none" stroke="#f2ecec" stroke-width="7" stroke-linejoin="round" stroke-linecap="round" opacity="0.7"/>
<path d="M1497.7 88 L1486 116.6 L1472 134 L1469 162 L1458 174 L1462 200 L1486 225.3 L1492 248 L1486 259.6 L1509 282.5 L1515 288" fill="none" stroke="#f2ecec" stroke-width="7" stroke-linejoin="round" stroke-linecap="round" opacity="0.7"/>
<path d="M1515 380 L1510 404.7 L1495.3 449.3 L1505 508.7 L1510 568 L1505 607.6 L1480.4 627.4 L1460.6 607.6 L1435.9 612.6 L1416 627.4 L1386.4 657.1 L1337 667 L1317.1 686.8 L1297.3 691.8 L1242.9 691.8 L1252.8 716.5 L1247.8 736.3 L1252.8 761 L1228 761 L1213.2 756 L1173.6 741.2 L1153.8 741.2 L1134 766 L1114.2 766 L1104.3 775.9 L1119.2 800.6 L1119.2 850 L1139 874.8 L1163.7 894.6 L1183.5 920 L1197 929 L1181 932.3 L1190.6 971 L1158 958 L1135.7 945.2 L1129 961.3 L1113 948.4 L1093.7 917.8 L1029 935.5 L1013 932.3 L993.6 956.5 L958 945 L926 942 L932 964.6 L919.4 993.6 L902.5 1010 L885 1037.5 L830 1033.7 L820 1035 L810 1042.5 L795 1065" fill="none" stroke="#f2ecec" stroke-width="7" stroke-linejoin="round" stroke-linecap="round" opacity="0.7"/>
<path d="M560 111 L542.5 114 L510 120 L478 126 L455 143 L434.6 158 L428.7 172.6 L420 196 L408 207.6 L393.8 222 L382 257 L361.7 269 L344 286 L356 298 L344 304 L321 310 L291.7 310 L288.7 315.5 L294.6 330 L294.6 350.5 L297 380 L302.7 399.8 L311 414.7 L322.5 429.5 L329 444.4 L335.7 446 L325.8 449.3 L327.5 459.2 L330.8 479 L335.7 495.5 L334 505.4 L329 512 L332.4 525.2 L342.3 528.5 L362 541.7 L375 555 L390 575 L395 587.5 L385 595 L380 610 L377.5 640 L382.5 655 L392.5 675 L400 700 L410 720 L422.5 750 L426 762" fill="none" stroke="#e8cdd0" stroke-width="2" stroke-linejoin="round"/>
<path d="M560 111 L566 103.6 L592 101 L610.3 103.6 L613 114 L644 116.6 L670 121.9 L696 119 L722 111 L740.5 108.8 L774 116.6 L790 120.6 L813.4 116.6 L839.5 101 L865.5 101 L878.5 103.6 L909.8 114 L917.6 140 L930.6 153 L946 140 L956.7 121.9 L969.7 127 L982.7 158 L1003.5 179 L1021.8 176.5 L1043 168 L1071.5 174.7 L1097 188 L1114 214 L1126 221 L1171.6 225.3 L1171.6 208 L1188.8 191 L1183 174 L1171.6 159.5 L1154.5 145 L1146 116.6 L1160 122 L1200 113.7 L1206 93.7 L1223 91 L1243 93.7 L1292 93.7 L1323 105 L1343 134 L1372 128 L1395 99.4 L1415 108 L1429 93.7 L1450 89" fill="none" stroke="#e8cdd0" stroke-width="2" stroke-linejoin="round"/>
<path d="M1497.7 88 L1486 116.6 L1472 134 L1469 162 L1458 174 L1462 200 L1486 225.3 L1492 248 L1486 259.6 L1509 282.5 L1515 288" fill="none" stroke="#e8cdd0" stroke-width="2" stroke-linejoin="round"/>
<path d="M1515 380 L1510 404.7 L1495.3 449.3 L1505 508.7 L1510 568 L1505 607.6 L1480.4 627.4 L1460.6 607.6 L1435.9 612.6 L1416 627.4 L1386.4 657.1 L1337 667 L1317.1 686.8 L1297.3 691.8 L1242.9 691.8 L1252.8 716.5 L1247.8 736.3 L1252.8 761 L1228 761 L1213.2 756 L1173.6 741.2 L1153.8 741.2 L1134 766 L1114.2 766 L1104.3 775.9 L1119.2 800.6 L1119.2 850 L1139 874.8 L1163.7 894.6 L1183.5 920 L1197 929 L1181 932.3 L1190.6 971 L1158 958 L1135.7 945.2 L1129 961.3 L1113 948.4 L1093.7 917.8 L1029 935.5 L1013 932.3 L993.6 956.5 L958 945 L926 942 L932 964.6 L919.4 993.6 L902.5 1010 L885 1037.5 L830 1033.7 L820 1035 L810 1042.5 L795 1065" fill="none" stroke="#e8cdd0" stroke-width="2" stroke-linejoin="round"/>
<text x="535.4" y="166.5" font-family="Liberation Sans" font-size="11.3" letter-spacing="1.00" fill="#fbfbfa" stroke="#fbfbfa" stroke-width="2.4" stroke-linejoin="round">Samraong</text>
<text x="535.4" y="166.5" font-family="Liberation Sans" font-size="11.3" letter-spacing="1.00" fill="#8391a0" stroke="#8391a0" stroke-width="0.45">Samraong</text>
<text x="870.9" y="257.3" font-family="Liberation Sans" font-size="11.3" letter-spacing="0.70" fill="#fbfbfa" stroke="#fbfbfa" stroke-width="2.4" stroke-linejoin="round">Preah Vihear</text>
<text x="870.9" y="257.3" font-family="Liberation Sans" font-size="11.3" letter-spacing="0.70" fill="#8391a0" stroke="#8391a0" stroke-width="0.45">Preah Vihear</text>
<text x="401.0" y="309.9" font-family="Liberation Sans" font-size="14.4" letter-spacing="-0.09" fill="#fbfbfa" stroke="#fbfbfa" stroke-width="2.4" stroke-linejoin="round">SISOPHON</text>
<text x="401.0" y="309.9" font-family="Liberation Sans" font-size="14.4" letter-spacing="-0.09" fill="#8391a0" stroke="#8391a0" stroke-width="0.45">SISOPHON</text>
<text x="1104.7" y="322.5" font-family="Liberation Sans" font-size="11.3" letter-spacing="0.85" fill="#fbfbfa" stroke="#fbfbfa" stroke-width="2.4" stroke-linejoin="round">Stung Treng</text>
<text x="1104.7" y="322.5" font-family="Liberation Sans" font-size="11.3" letter-spacing="0.85" fill="#8391a0" stroke="#8391a0" stroke-width="0.45">Stung Treng</text>
<text x="441.6" y="427.5" font-family="Liberation Sans" font-size="14.4" letter-spacing="0.37" fill="#fbfbfa" stroke="#fbfbfa" stroke-width="2.4" stroke-linejoin="round">BATTAMBANG</text>
<text x="441.6" y="427.5" font-family="Liberation Sans" font-size="14.4" letter-spacing="0.37" fill="#8391a0" stroke="#8391a0" stroke-width="0.45">BATTAMBANG</text>
<text x="12.4" y="528.0" font-family="Liberation Sans" font-size="14.4" letter-spacing="-0.09" fill="#fbfbfa" stroke="#fbfbfa" stroke-width="2.4" stroke-linejoin="round">RAYONG</text>
<text x="12.4" y="528.0" font-family="Liberation Sans" font-size="14.4" letter-spacing="-0.09" fill="#8391a0" stroke="#8391a0" stroke-width="0.45">RAYONG</text>
<text x="851.7" y="519.5" font-family="Liberation Sans" font-size="11.3" letter-spacing="0.66" fill="#fbfbfa" stroke="#fbfbfa" stroke-width="2.4" stroke-linejoin="round">Stueng Saen</text>
<text x="851.7" y="519.5" font-family="Liberation Sans" font-size="11.3" letter-spacing="0.66" fill="#8391a0" stroke="#8391a0" stroke-width="0.45">Stueng Saen</text>
<text x="632.6" y="562.3" font-family="Liberation Sans" font-size="14.4" letter-spacing="-0.29" fill="#fbfbfa" stroke="#fbfbfa" stroke-width="2.4" stroke-linejoin="round">PURSAT</text>
<text x="632.6" y="562.3" font-family="Liberation Sans" font-size="14.4" letter-spacing="-0.29" fill="#8391a0" stroke="#8391a0" stroke-width="0.45">PURSAT</text>
<text x="1135.0" y="573.5" font-family="Liberation Sans" font-size="11.3" letter-spacing="0.88" fill="#fbfbfa" stroke="#fbfbfa" stroke-width="2.4" stroke-linejoin="round">Kratié</text>
<text x="1135.0" y="573.5" font-family="Liberation Sans" font-size="11.3" letter-spacing="0.88" fill="#8391a0" stroke="#8391a0" stroke-width="0.45">Kratié</text>
<text x="1384.8" y="581.0" font-family="Liberation Sans" font-size="11.3" letter-spacing="1.32" fill="#fbfbfa" stroke="#fbfbfa" stroke-width="2.4" stroke-linejoin="round">Senmonorom</text>
<text x="1384.8" y="581.0" font-family="Liberation Sans" font-size="11.3" letter-spacing="1.32" fill="#8391a0" stroke="#8391a0" stroke-width="0.45">Senmonorom</text>
<text x="797.6" y="623.5" font-family="Liberation Sans" font-size="14.4" letter-spacing="0.33" fill="#fbfbfa" stroke="#fbfbfa" stroke-width="2.4" stroke-linejoin="round">KAMPONG</text>
<text x="797.6" y="623.5" font-family="Liberation Sans" font-size="14.4" letter-spacing="0.33" fill="#8391a0" stroke="#8391a0" stroke-width="0.45">KAMPONG</text>
<text x="797.6" y="637.5" font-family="Liberation Sans" font-size="14.4" letter-spacing="0.47" fill="#fbfbfa" stroke="#fbfbfa" stroke-width="2.4" stroke-linejoin="round">CHHNANG</text>
<text x="797.6" y="637.5" font-family="Liberation Sans" font-size="14.4" letter-spacing="0.47" fill="#8391a0" stroke="#8391a0" stroke-width="0.45">CHHNANG</text>
<text x="984.0" y="686.4" font-family="Liberation Sans" font-size="14.4" letter-spacing="0.26" fill="#fbfbfa" stroke="#fbfbfa" stroke-width="2.4" stroke-linejoin="round">KAMPONG</text>
<text x="984.0" y="686.4" font-family="Liberation Sans" font-size="14.4" letter-spacing="0.26" fill="#8391a0" stroke="#8391a0" stroke-width="0.45">KAMPONG</text>
<text x="999.4" y="700.8" font-family="Liberation Sans" font-size="14.4" letter-spacing="0.57" fill="#fbfbfa" stroke="#fbfbfa" stroke-width="2.4" stroke-linejoin="round">CHAM</text>
<text x="999.4" y="700.8" font-family="Liberation Sans" font-size="14.4" letter-spacing="0.57" fill="#8391a0" stroke="#8391a0" stroke-width="0.45">CHAM</text>
<text x="382.9" y="783.5" font-family="Liberation Sans" font-size="12.3" letter-spacing="0.55" fill="#fbfbfa" stroke="#fbfbfa" stroke-width="2.4" stroke-linejoin="round">Khemarak Phoumin</text>
<text x="382.9" y="783.5" font-family="Liberation Sans" font-size="12.3" letter-spacing="0.55" fill="#8391a0" stroke="#8391a0" stroke-width="0.45">Khemarak Phoumin</text>
<text x="862.6" y="785.8" font-family="Liberation Sans" font-size="16.0" letter-spacing="0.71" fill="#fbfbfa" stroke="#fbfbfa" stroke-width="2.4" stroke-linejoin="round">PHNOM</text>
<text x="862.6" y="785.8" font-family="Liberation Sans" font-size="16.0" letter-spacing="0.71" fill="#8391a0" stroke="#8391a0" stroke-width="0.45">PHNOM</text>
<text x="871.6" y="803.0" font-family="Liberation Sans" font-size="16.0" letter-spacing="0.65" fill="#fbfbfa" stroke="#fbfbfa" stroke-width="2.4" stroke-linejoin="round">PENH</text>
<text x="871.6" y="803.0" font-family="Liberation Sans" font-size="16.0" letter-spacing="0.65" fill="#8391a0" stroke="#8391a0" stroke-width="0.45">PENH</text>
<text x="769.0" y="818.0" font-family="Liberation Sans" font-size="12.3" letter-spacing="0.27" fill="#fbfbfa" stroke="#fbfbfa" stroke-width="2.4" stroke-linejoin="round">Chbar Mon</text>
<text x="769.0" y="818.0" font-family="Liberation Sans" font-size="12.3" letter-spacing="0.27" fill="#8391a0" stroke="#8391a0" stroke-width="0.45">Chbar Mon</text>
<text x="961.1" y="814.5" font-family="Liberation Sans" font-size="11.8" letter-spacing="0.28" fill="#fbfbfa" stroke="#fbfbfa" stroke-width="2.4" stroke-linejoin="round">Prey Veng</text>
<text x="961.1" y="814.5" font-family="Liberation Sans" font-size="11.8" letter-spacing="0.28" fill="#8391a0" stroke="#8391a0" stroke-width="0.45">Prey Veng</text>
<text x="1327.9" y="802.0" font-family="Liberation Sans" font-size="11.3" letter-spacing="0.77" fill="#fbfbfa" stroke="#fbfbfa" stroke-width="2.4" stroke-linejoin="round">Đồng Xoài</text>
<text x="1327.9" y="802.0" font-family="Liberation Sans" font-size="11.3" letter-spacing="0.77" fill="#8391a0" stroke="#8391a0" stroke-width="0.45">Đồng Xoài</text>
<text x="1144.7" y="854.5" font-family="Liberation Sans" font-size="11.3" letter-spacing="0.68" fill="#fbfbfa" stroke="#fbfbfa" stroke-width="2.4" stroke-linejoin="round">Tây Ninh</text>
<text x="1144.7" y="854.5" font-family="Liberation Sans" font-size="11.3" letter-spacing="0.68" fill="#8391a0" stroke="#8391a0" stroke-width="0.45">Tây Ninh</text>
<text x="1069.6" y="908.5" font-family="Liberation Sans" font-size="11.3" letter-spacing="0.48" fill="#fbfbfa" stroke="#fbfbfa" stroke-width="2.4" stroke-linejoin="round">Svay Rieng</text>
<text x="1069.6" y="908.5" font-family="Liberation Sans" font-size="11.3" letter-spacing="0.48" fill="#8391a0" stroke="#8391a0" stroke-width="0.45">Svay Rieng</text>
<text x="819.4" y="932.5" font-family="Liberation Sans" font-size="14.4" letter-spacing="0.13" fill="#fbfbfa" stroke="#fbfbfa" stroke-width="2.4" stroke-linejoin="round">DOUN KAEV</text>
<text x="819.4" y="932.5" font-family="Liberation Sans" font-size="14.4" letter-spacing="0.13" fill="#8391a0" stroke="#8391a0" stroke-width="0.45">DOUN KAEV</text>
<text x="1304.5" y="941.5" font-family="Liberation Sans" font-size="14.4" letter-spacing="0.13" fill="#fbfbfa" stroke="#fbfbfa" stroke-width="2.4" stroke-linejoin="round">BIEN HOA</text>
<text x="1304.5" y="941.5" font-family="Liberation Sans" font-size="14.4" letter-spacing="0.13" fill="#8391a0" stroke="#8391a0" stroke-width="0.45">BIEN HOA</text>
<text x="1282.0" y="975.5" font-family="Liberation Sans" font-size="17.0" letter-spacing="-0.20" fill="#fbfbfa" stroke="#fbfbfa" stroke-width="2.4" stroke-linejoin="round">HO CHI</text>
<text x="1282.0" y="975.5" font-family="Liberation Sans" font-size="17.0" letter-spacing="-0.20" fill="#8391a0" stroke="#8391a0" stroke-width="0.45">HO CHI</text>
<text x="1267.6" y="993.0" font-family="Liberation Sans" font-size="17.0" letter-spacing="0.05" fill="#fbfbfa" stroke="#fbfbfa" stroke-width="2.4" stroke-linejoin="round">MINH CITY</text>
<text x="1267.6" y="993.0" font-family="Liberation Sans" font-size="17.0" letter-spacing="0.05" fill="#8391a0" stroke="#8391a0" stroke-width="0.45">MINH CITY</text>
<text x="903.0" y="1001.5" font-family="Liberation Sans" font-size="14.4" letter-spacing="-0.11" fill="#fbfbfa" stroke="#fbfbfa" stroke-width="2.4" stroke-linejoin="round">CHÂU ĐỐC</text>
<text x="903.0" y="1001.5" font-family="Liberation Sans" font-size="14.4" letter-spacing="-0.11" fill="#8391a0" stroke="#8391a0" stroke-width="0.45">CHÂU ĐỐC</text>
<text x="528.8" y="1019.5" font-family="Liberation Sans" font-size="11.3" letter-spacing="0.95" fill="#fbfbfa" stroke="#fbfbfa" stroke-width="2.4" stroke-linejoin="round">Sihanoukville</text>
<text x="528.8" y="1019.5" font-family="Liberation Sans" font-size="11.3" letter-spacing="0.95" fill="#8391a0" stroke="#8391a0" stroke-width="0.45">Sihanoukville</text>
<text x="690.8" y="1022.8" font-family="Liberation Sans" font-size="14.4" letter-spacing="0.24" fill="#fbfbfa" stroke="#fbfbfa" stroke-width="2.4" stroke-linejoin="round">KAMPOT</text>
<text x="690.8" y="1022.8" font-family="Liberation Sans" font-size="14.4" letter-spacing="0.24" fill="#8391a0" stroke="#8391a0" stroke-width="0.45">KAMPOT</text>
<text x="1216.7" y="1041.5" font-family="Liberation Sans" font-size="14.4" letter-spacing="0.22" fill="#fbfbfa" stroke="#fbfbfa" stroke-width="2.4" stroke-linejoin="round">TÂN AN</text>
<text x="1216.7" y="1041.5" font-family="Liberation Sans" font-size="14.4" letter-spacing="0.22" fill="#8391a0" stroke="#8391a0" stroke-width="0.45">TÂN AN</text>
<text x="742.0" y="1052.0" font-family="Liberation Sans" font-size="11.3" letter-spacing="1.45" fill="#fbfbfa" stroke="#fbfbfa" stroke-width="2.4" stroke-linejoin="round">Kep</text>
<text x="742.0" y="1052.0" font-family="Liberation Sans" font-size="11.3" letter-spacing="1.45" fill="#8391a0" stroke="#8391a0" stroke-width="0.45">Kep</text>
<text x="1035.4" y="1057.5" font-family="Liberation Sans" font-size="11.3" letter-spacing="0.59" fill="#fbfbfa" stroke="#fbfbfa" stroke-width="2.4" stroke-linejoin="round">Cao Lãnh</text>
<text x="1035.4" y="1057.5" font-family="Liberation Sans" font-size="11.3" letter-spacing="0.59" fill="#8391a0" stroke="#8391a0" stroke-width="0.45">Cao Lãnh</text>
<text x="1402.7" y="1051.0" font-family="Liberation Sans" font-size="11.3" letter-spacing="0.40" fill="#fbfbfa" stroke="#fbfbfa" stroke-width="2.4" stroke-linejoin="round">Bà Rịa</text>
<text x="1402.7" y="1051.0" font-family="Liberation Sans" font-size="11.3" letter-spacing="0.40" fill="#8391a0" stroke="#8391a0" stroke-width="0.45">Bà Rịa</text>
<text x="967.9" y="1075.8" font-family="Liberation Sans" font-size="14.4" letter-spacing="-0.09" fill="#fbfbfa" stroke="#fbfbfa" stroke-width="2.4" stroke-linejoin="round">LONG XUYÊN</text>
<text x="967.9" y="1075.8" font-family="Liberation Sans" font-size="14.4" letter-spacing="-0.09" fill="#8391a0" stroke="#8391a0" stroke-width="0.45">LONG XUYÊN</text>
<text x="1204.6" y="1083.5" font-family="Liberation Sans" font-size="14.4" letter-spacing="0.09" fill="#fbfbfa" stroke="#fbfbfa" stroke-width="2.4" stroke-linejoin="round">MỸ THO</text>
<text x="1204.6" y="1083.5" font-family="Liberation Sans" font-size="14.4" letter-spacing="0.09" fill="#8391a0" stroke="#8391a0" stroke-width="0.45">MỸ THO</text>
<text x="1361.7" y="1086.0" font-family="Liberation Sans" font-size="14.4" letter-spacing="-0.06" fill="#fbfbfa" stroke="#fbfbfa" stroke-width="2.4" stroke-linejoin="round">VŨNG TÀU</text>
<text x="1361.7" y="1086.0" font-family="Liberation Sans" font-size="14.4" letter-spacing="-0.06" fill="#8391a0" stroke="#8391a0" stroke-width="0.45">VŨNG TÀU</text>
<text x="607.8" y="364.2" font-family="Liberation Sans" font-size="13.4" letter-spacing="0.62" fill="#fbfbfa" stroke="#fbfbfa" stroke-width="2.4" stroke-linejoin="round">SIEM REAP</text>
<text x="607.8" y="364.2" font-family="Liberation Sans" font-size="13.4" letter-spacing="0.62" fill="#8391a0" stroke="#8391a0" stroke-width="0.45">SIEM REAP</text>
<path d="M626.6 249.4h1.3v1.3h-1.3zM555.3 319.5h0.9v0.9h-0.9zM689.7 310.4h1.6v1.6h-1.6zM759.8 283.8h0.9v0.9h-0.9zM727.6 283.4h1.6v1.6h-1.6zM551.6 326.5h0.9v0.9h-0.9zM674.4 365.2h1.3v1.3h-1.3zM561.5 228.7h1.0v1.0h-1.0zM630.7 225.0h0.8v0.8h-0.8zM662.0 332.0h0.9v0.9h-0.9zM631.3 277.7h1.5v1.5h-1.5zM677.5 248.4h1.2v1.2h-1.2zM602.5 340.4h1.1v1.1h-1.1zM726.5 254.2h0.9v0.9h-0.9zM670.9 343.9h1.2v1.2h-1.2zM594.7 291.0h1.4v1.4h-1.4zM688.1 385.7h0.9v0.9h-0.9zM670.5 256.1h1.1v1.1h-1.1zM593.2 329.7h1.5v1.5h-1.5zM643.0 292.9h1.6v1.6h-1.6zM716.0 383.9h1.0v1.0h-1.0zM671.2 344.7h1.3v1.3h-1.3zM737.0 365.0h1.3v1.3h-1.3zM674.6 327.2h1.2v1.2h-1.2zM635.8 318.2h1.0v1.0h-1.0zM608.1 277.9h1.2v1.2h-1.2zM780.2 348.2h1.4v1.4h-1.4zM617.3 224.1h1.5v1.5h-1.5zM658.0 246.6h1.0v1.0h-1.0zM783.5 422.5h1.5v1.5h-1.5zM769.0 329.4h1.3v1.3h-1.3zM704.4 385.2h0.9v0.9h-0.9zM639.1 294.3h0.9v0.9h-0.9zM615.7 299.2h1.6v1.6h-1.6zM594.1 302.3h1.5v1.5h-1.5zM736.9 222.1h0.8v0.8h-0.8zM774.2 369.2h1.6v1.6h-1.6zM687.2 304.5h1.4v1.4h-1.4zM744.0 347.9h0.9v0.9h-0.9zM644.4 348.4h1.3v1.3h-1.3zM761.2 459.2h1.1v1.1h-1.1zM771.2 365.8h1.5v1.5h-1.5zM734.6 221.5h1.5v1.5h-1.5zM660.1 256.5h1.2v1.2h-1.2zM673.0 222.1h1.3v1.3h-1.3zM728.6 404.9h1.2v1.2h-1.2zM671.5 305.7h1.6v1.6h-1.6zM656.1 255.8h1.4v1.4h-1.4zM691.9 376.6h1.1v1.1h-1.1zM578.9 268.4h1.3v1.3h-1.3zM602.3 238.1h1.0v1.0h-1.0zM631.9 247.2h0.8v0.8h-0.8zM703.3 283.3h0.9v0.9h-0.9zM547.5 323.8h1.8v1.8h-1.8zM556.6 332.9h1.2v1.2h-1.2zM549.6 285.4h1.7v1.7h-1.7zM550.4 334.4h1.4v1.4h-1.4zM548.5 311.1h1.9v1.9h-1.9zM550.6 312.2h1.5v1.5h-1.5zM549.8 245.3h2.0v2.0h-2.0zM552.2 329.0h1.3v1.3h-1.3zM553.5 337.7h1.6v1.6h-1.6zM551.7 305.6h1.5v1.5h-1.5zM549.0 323.8h1.6v1.6h-1.6zM547.6 322.5h2.4v2.4h-2.4zM545.8 252.5h2.1v2.1h-2.1zM548.4 253.4h1.3v1.3h-1.3zM548.0 324.8h1.8v1.8h-1.8zM549.9 231.7h2.1v2.1h-2.1zM549.9 307.7h1.2v1.2h-1.2zM547.8 263.8h1.7v1.7h-1.7zM545.3 252.7h2.1v2.1h-2.1zM550.9 268.2h1.8v1.8h-1.8zM555.9 339.1h1.1v1.1h-1.1zM543.9 320.0h1.6v1.6h-1.6zM552.5 281.6h1.3v1.3h-1.3zM552.6 327.7h2.3v2.3h-2.3zM547.9 297.1h1.3v1.3h-1.3zM544.5 291.7h1.3v1.3h-1.3zM549.8 261.3h1.3v1.3h-1.3zM555.8 336.7h1.6v1.6h-1.6zM544.1 304.1h1.1v1.1h-1.1zM553.0 319.5h1.4v1.4h-1.4zM553.7 254.1h2.2v2.2h-2.2zM548.8 246.4h1.6v1.6h-1.6zM549.3 267.0h2.4v2.4h-2.4zM550.2 331.0h1.7v1.7h-1.7zM553.9 338.2h2.3v2.3h-2.3zM549.4 253.0h2.0v2.0h-2.0zM550.6 243.5h1.7v1.7h-1.7zM550.2 268.2h1.5v1.5h-1.5zM547.1 264.9h2.1v2.1h-2.1zM558.3 293.9h1.3v1.3h-1.3zM546.6 250.1h1.0v1.0h-1.0zM549.2 240.0h1.7v1.7h-1.7zM554.0 274.5h1.5v1.5h-1.5zM571.0 268.6h1.7v1.7h-1.7zM566.6 262.0h1.7v1.7h-1.7zM573.4 243.6h1.6v1.6h-1.6zM566.3 259.0h1.2v1.2h-1.2zM570.9 279.4h2.2v2.2h-2.2zM567.9 266.0h1.4v1.4h-1.4zM568.3 270.4h2.3v2.3h-2.3zM572.2 254.3h1.7v1.7h-1.7zM565.8 254.0h1.2v1.2h-1.2zM569.1 244.1h1.7v1.7h-1.7zM571.5 275.5h2.1v2.1h-2.1zM570.5 279.4h1.8v1.8h-1.8zM571.7 242.2h1.1v1.1h-1.1zM567.9 273.0h1.5v1.5h-1.5zM574.0 249.5h2.2v2.2h-2.2zM570.2 249.5h1.3v1.3h-1.3zM569.1 277.9h2.0v2.0h-2.0zM590.4 217.9h2.2v2.2h-2.2zM594.2 218.0h1.8v1.8h-1.8zM583.6 221.4h2.0v2.0h-2.0zM592.6 216.8h1.9v1.9h-1.9zM586.8 218.9h1.9v1.9h-1.9zM580.9 224.6h2.4v2.4h-2.4zM579.3 226.3h1.4v1.4h-1.4zM591.9 214.4h1.4v1.4h-1.4zM573.0 230.5h1.3v1.3h-1.3zM581.3 224.5h2.0v2.0h-2.0zM587.7 214.7h1.4v1.4h-1.4zM581.0 226.8h2.0v2.0h-2.0zM589.9 216.8h2.5v2.5h-2.5zM583.5 221.8h1.6v1.6h-1.6zM579.6 222.9h2.2v2.2h-2.2zM573.2 230.6h1.3v1.3h-1.3zM578.4 228.6h1.7v1.7h-1.7zM576.8 225.5h1.3v1.3h-1.3zM592.7 213.0h1.8v1.8h-1.8zM587.8 218.7h1.4v1.4h-1.4zM577.2 229.0h2.3v2.3h-2.3zM573.0 225.0h2.5v2.5h-2.5zM590.5 214.3h1.5v1.5h-1.5zM589.2 217.7h1.9v1.9h-1.9zM588.8 212.5h2.5v2.5h-2.5zM583.3 223.3h1.9v1.9h-1.9zM587.8 220.3h2.6v2.6h-2.6zM570.8 230.7h2.2v2.2h-2.2zM592.3 213.4h1.7v1.7h-1.7zM584.3 218.9h1.5v1.5h-1.5zM588.1 215.6h1.3v1.3h-1.3zM579.7 222.4h1.3v1.3h-1.3zM595.8 212.9h2.3v2.3h-2.3zM572.7 233.0h1.7v1.7h-1.7zM586.3 223.5h1.4v1.4h-1.4zM583.2 223.5h1.9v1.9h-1.9zM585.8 222.1h1.9v1.9h-1.9zM584.1 219.9h2.2v2.2h-2.2zM576.2 227.0h2.0v2.0h-2.0zM587.3 213.8h2.4v2.4h-2.4zM627.8 240.7h1.1v1.1h-1.1zM608.4 253.2h1.8v1.8h-1.8zM628.3 238.1h2.0v2.0h-2.0zM622.4 243.9h1.9v1.9h-1.9zM629.6 240.6h1.3v1.3h-1.3zM627.8 240.3h1.5v1.5h-1.5zM644.5 238.1h1.1v1.1h-1.1zM703.4 232.2h2.1v2.1h-2.1zM685.2 310.5h1.3v1.3h-1.3zM685.9 309.1h2.2v2.2h-2.2zM702.8 217.1h1.5v1.5h-1.5zM706.3 215.1h2.1v2.1h-2.1zM683.5 306.0h1.2v1.2h-1.2zM693.4 254.7h2.2v2.2h-2.2zM681.9 304.3h2.2v2.2h-2.2zM690.3 260.7h1.6v1.6h-1.6zM690.8 277.7h2.0v2.0h-2.0zM696.4 250.5h1.1v1.1h-1.1zM688.2 261.1h1.9v1.9h-1.9zM702.3 218.5h1.9v1.9h-1.9zM660.5 362.9h1.6v1.6h-1.6zM607.1 322.3h1.5v1.5h-1.5zM685.9 347.2h1.8v1.8h-1.8zM685.6 321.9h1.3v1.3h-1.3zM648.8 331.1h2.3v2.3h-2.3zM694.1 347.3h1.1v1.1h-1.1zM642.0 334.8h1.9v1.9h-1.9zM630.1 374.6h1.1v1.1h-1.1zM609.8 317.9h2.3v2.3h-2.3zM609.6 319.8h1.9v1.9h-1.9zM645.7 313.1h2.5v2.5h-2.5zM582.6 339.5h2.2v2.2h-2.2zM696.8 344.7h1.5v1.5h-1.5zM671.3 342.2h2.5v2.5h-2.5zM684.1 319.3h2.5v2.5h-2.5zM594.1 367.0h1.5v1.5h-1.5zM587.8 349.1h1.6v1.6h-1.6zM590.1 308.0h2.4v2.4h-2.4zM592.1 345.5h1.8v1.8h-1.8zM596.7 334.3h1.3v1.3h-1.3zM601.0 363.8h1.2v1.2h-1.2zM574.2 333.4h1.8v1.8h-1.8zM603.2 350.9h2.6v2.6h-2.6zM653.5 358.8h2.3v2.3h-2.3zM679.4 339.3h2.5v2.5h-2.5zM696.9 335.0h1.7v1.7h-1.7zM603.1 362.4h2.1v2.1h-2.1zM616.5 311.9h1.3v1.3h-1.3zM582.5 361.0h1.6v1.6h-1.6zM604.0 371.3h1.4v1.4h-1.4zM570.6 341.6h1.0v1.0h-1.0zM653.6 324.8h1.1v1.1h-1.1zM594.9 323.1h2.5v2.5h-2.5zM631.4 368.8h1.4v1.4h-1.4zM618.8 356.2h2.0v2.0h-2.0zM589.5 349.9h1.9v1.9h-1.9zM622.9 363.5h2.0v2.0h-2.0zM672.9 324.7h1.9v1.9h-1.9zM665.8 358.7h1.4v1.4h-1.4zM647.6 370.2h2.3v2.3h-2.3zM588.9 343.9h2.4v2.4h-2.4zM612.1 304.5h1.5v1.5h-1.5zM595.3 326.3h2.5v2.5h-2.5zM613.3 337.3h1.2v1.2h-1.2zM623.2 332.8h2.5v2.5h-2.5zM656.0 366.2h1.5v1.5h-1.5zM641.5 324.5h2.0v2.0h-2.0zM655.6 358.8h2.2v2.2h-2.2zM616.1 333.4h2.3v2.3h-2.3zM660.4 376.6h1.2v1.2h-1.2zM606.9 318.1h1.4v1.4h-1.4zM678.3 330.6h2.1v2.1h-2.1zM588.7 323.4h1.1v1.1h-1.1zM584.9 319.1h2.0v2.0h-2.0zM573.8 342.9h1.7v1.7h-1.7zM655.1 361.6h1.9v1.9h-1.9zM665.6 338.6h1.5v1.5h-1.5zM667.5 361.2h1.1v1.1h-1.1zM667.5 353.6h1.4v1.4h-1.4zM592.1 353.7h2.6v2.6h-2.6zM678.6 338.7h1.2v1.2h-1.2zM634.3 369.9h1.2v1.2h-1.2zM646.1 343.2h1.3v1.3h-1.3zM702.4 337.1h2.2v2.2h-2.2zM598.9 349.8h1.6v1.6h-1.6zM682.1 366.8h1.7v1.7h-1.7zM690.0 345.4h1.1v1.1h-1.1zM597.8 320.7h2.4v2.4h-2.4zM584.0 350.3h1.2v1.2h-1.2zM655.6 363.0h1.1v1.1h-1.1zM650.3 368.0h1.1v1.1h-1.1zM643.6 324.7h1.6v1.6h-1.6zM631.8 310.4h2.0v2.0h-2.0zM619.6 325.7h2.2v2.2h-2.2zM651.9 383.2h2.2v2.2h-2.2zM629.6 360.1h1.4v1.4h-1.4zM617.0 327.6h1.2v1.2h-1.2zM671.6 323.3h1.4v1.4h-1.4zM670.7 364.0h1.4v1.4h-1.4zM611.0 305.4h1.1v1.1h-1.1zM606.9 365.4h1.3v1.3h-1.3zM610.9 334.8h2.1v2.1h-2.1zM695.9 329.1h2.3v2.3h-2.3zM660.5 323.6h1.0v1.0h-1.0zM659.0 349.9h2.1v2.1h-2.1zM589.4 308.3h2.6v2.6h-2.6zM658.1 348.4h1.4v1.4h-1.4zM604.0 331.1h1.8v1.8h-1.8zM603.5 367.7h1.5v1.5h-1.5zM673.2 319.0h1.3v1.3h-1.3zM659.6 371.1h1.4v1.4h-1.4zM582.7 310.0h1.8v1.8h-1.8zM601.2 337.4h1.2v1.2h-1.2zM697.4 344.6h1.4v1.4h-1.4zM686.7 318.1h1.1v1.1h-1.1zM694.8 339.2h2.2v2.2h-2.2zM685.7 331.3h2.4v2.4h-2.4zM600.6 350.8h2.4v2.4h-2.4zM599.3 303.1h1.7v1.7h-1.7zM636.4 384.3h2.0v2.0h-2.0zM658.2 343.6h1.2v1.2h-1.2zM647.0 315.4h2.1v2.1h-2.1zM661.5 360.3h2.0v2.0h-2.0zM601.4 336.6h2.5v2.5h-2.5zM625.2 381.7h2.4v2.4h-2.4zM587.2 318.9h1.3v1.3h-1.3zM574.8 311.6h1.6v1.6h-1.6zM618.0 359.9h1.7v1.7h-1.7zM596.5 365.1h1.5v1.5h-1.5zM668.0 323.2h1.1v1.1h-1.1zM593.4 359.2h1.0v1.0h-1.0zM605.8 360.4h2.6v2.6h-2.6zM615.3 344.4h1.5v1.5h-1.5zM634.6 322.0h1.1v1.1h-1.1zM605.5 367.3h2.2v2.2h-2.2zM576.9 313.1h2.1v2.1h-2.1zM678.5 367.3h1.4v1.4h-1.4zM659.6 348.0h1.2v1.2h-1.2zM655.6 320.5h1.4v1.4h-1.4zM653.0 376.7h1.3v1.3h-1.3zM659.4 322.2h1.3v1.3h-1.3zM577.5 351.8h1.1v1.1h-1.1zM579.5 332.9h1.8v1.8h-1.8zM666.2 365.5h1.6v1.6h-1.6zM631.5 354.1h1.4v1.4h-1.4zM587.4 339.6h2.0v2.0h-2.0zM579.3 363.8h2.2v2.2h-2.2zM576.9 324.5h2.2v2.2h-2.2zM593.4 365.0h1.7v1.7h-1.7zM586.6 320.6h2.6v2.6h-2.6zM633.8 381.3h2.0v2.0h-2.0zM632.8 360.9h2.2v2.2h-2.2zM584.4 369.1h1.5v1.5h-1.5zM604.4 339.9h2.6v2.6h-2.6zM651.9 376.4h2.5v2.5h-2.5zM605.9 331.1h1.6v1.6h-1.6zM668.3 364.2h2.3v2.3h-2.3zM658.6 332.4h2.3v2.3h-2.3zM642.8 328.6h2.3v2.3h-2.3zM598.9 328.9h1.4v1.4h-1.4zM677.5 319.3h1.1v1.1h-1.1zM670.0 316.9h1.7v1.7h-1.7zM612.1 374.3h1.9v1.9h-1.9zM626.2 374.8h2.1v2.1h-2.1zM640.7 369.7h2.3v2.3h-2.3zM600.0 363.3h2.3v2.3h-2.3zM618.8 378.5h1.3v1.3h-1.3zM639.0 379.3h1.9v1.9h-1.9zM666.8 363.6h1.4v1.4h-1.4zM697.5 337.6h1.1v1.1h-1.1zM615.4 365.2h1.4v1.4h-1.4zM591.8 334.9h2.0v2.0h-2.0zM591.9 318.6h1.1v1.1h-1.1zM633.6 316.8h1.9v1.9h-1.9zM624.5 330.1h1.7v1.7h-1.7zM694.2 334.1h1.7v1.7h-1.7zM644.2 334.2h1.3v1.3h-1.3zM676.1 322.2h1.6v1.6h-1.6zM619.0 377.6h1.9v1.9h-1.9zM589.8 319.4h1.1v1.1h-1.1zM650.6 383.0h1.1v1.1h-1.1zM665.6 353.6h1.2v1.2h-1.2zM618.7 383.2h1.7v1.7h-1.7zM578.0 345.1h2.1v2.1h-2.1zM689.0 351.1h1.5v1.5h-1.5zM693.5 347.7h1.2v1.2h-1.2zM653.1 326.9h1.6v1.6h-1.6zM591.4 372.9h1.8v1.8h-1.8zM649.2 336.3h2.5v2.5h-2.5zM607.3 309.7h2.4v2.4h-2.4zM583.2 342.0h2.2v2.2h-2.2zM616.3 379.3h1.3v1.3h-1.3zM595.1 342.5h1.5v1.5h-1.5zM695.5 340.3h2.3v2.3h-2.3zM655.2 345.3h2.4v2.4h-2.4zM678.8 358.0h2.2v2.2h-2.2zM591.7 358.1h1.9v1.9h-1.9zM649.6 313.8h2.4v2.4h-2.4zM588.9 349.5h2.5v2.5h-2.5zM643.9 326.7h1.0v1.0h-1.0zM644.7 317.5h1.8v1.8h-1.8zM576.6 336.3h2.6v2.6h-2.6zM606.1 374.8h1.8v1.8h-1.8zM700.5 334.4h2.1v2.1h-2.1zM584.9 363.4h1.4v1.4h-1.4zM604.4 312.0h1.3v1.3h-1.3zM627.1 320.1h2.2v2.2h-2.2zM622.3 328.5h2.2v2.2h-2.2zM694.7 351.3h1.3v1.3h-1.3zM603.0 313.1h1.5v1.5h-1.5zM627.9 314.1h1.1v1.1h-1.1zM577.9 343.1h1.5v1.5h-1.5zM670.2 360.9h1.8v1.8h-1.8zM660.4 336.8h2.1v2.1h-2.1zM600.1 333.9h1.3v1.3h-1.3zM615.2 322.6h2.1v2.1h-2.1zM624.1 358.5h1.7v1.7h-1.7zM583.5 342.7h1.8v1.8h-1.8zM660.4 342.1h2.3v2.3h-2.3zM633.9 312.0h1.8v1.8h-1.8zM576.1 360.8h2.3v2.3h-2.3zM591.0 374.1h2.1v2.1h-2.1zM621.4 357.1h1.0v1.0h-1.0zM617.7 374.3h2.6v2.6h-2.6zM638.0 335.6h2.1v2.1h-2.1zM639.0 331.9h1.5v1.5h-1.5zM598.7 338.4h1.6v1.6h-1.6zM618.5 364.2h2.2v2.2h-2.2zM655.8 358.9h1.4v1.4h-1.4zM678.6 319.5h1.5v1.5h-1.5zM677.4 362.7h1.8v1.8h-1.8zM627.7 316.3h2.2v2.2h-2.2zM629.3 333.8h2.0v2.0h-2.0zM572.7 333.2h1.6v1.6h-1.6zM649.1 348.8h1.5v1.5h-1.5zM586.5 318.1h1.5v1.5h-1.5zM634.7 383.9h1.1v1.1h-1.1zM644.0 332.9h2.3v2.3h-2.3zM582.3 339.3h1.3v1.3h-1.3zM582.6 307.7h1.6v1.6h-1.6zM598.3 374.6h1.6v1.6h-1.6zM653.0 347.9h1.5v1.5h-1.5zM615.7 335.5h2.5v2.5h-2.5zM661.2 342.2h1.8v1.8h-1.8zM593.4 354.8h2.1v2.1h-2.1zM652.8 314.6h1.8v1.8h-1.8zM635.3 352.4h1.2v1.2h-1.2zM646.5 364.0h1.6v1.6h-1.6zM668.3 322.7h2.4v2.4h-2.4zM691.3 328.8h1.0v1.0h-1.0zM578.9 306.1h2.0v2.0h-2.0zM644.5 352.0h2.4v2.4h-2.4zM608.0 363.3h2.3v2.3h-2.3zM663.8 333.7h1.4v1.4h-1.4zM670.6 374.5h1.6v1.6h-1.6zM616.9 362.2h2.1v2.1h-2.1zM617.7 369.1h1.2v1.2h-1.2zM583.6 335.0h1.8v1.8h-1.8zM599.9 373.7h1.6v1.6h-1.6zM642.6 318.5h2.2v2.2h-2.2zM603.5 307.1h1.4v1.4h-1.4zM620.2 367.0h2.2v2.2h-2.2zM600.2 300.7h1.5v1.5h-1.5zM664.1 366.3h2.6v2.6h-2.6zM625.6 379.1h1.6v1.6h-1.6zM682.2 340.5h1.3v1.3h-1.3zM619.8 374.9h2.6v2.6h-2.6zM615.5 310.9h2.1v2.1h-2.1zM626.0 310.4h1.8v1.8h-1.8zM628.8 319.4h2.6v2.6h-2.6zM607.6 309.3h1.1v1.1h-1.1zM629.5 364.8h1.4v1.4h-1.4zM602.1 347.7h1.7v1.7h-1.7zM610.7 360.8h1.0v1.0h-1.0zM587.1 340.2h1.0v1.0h-1.0zM600.0 306.9h1.1v1.1h-1.1zM687.5 397.5h1.7v1.7h-1.7zM616.0 356.3h2.2v2.2h-2.2zM768.9 439.9h2.4v2.4h-2.4zM571.4 328.6h2.2v2.2h-2.2zM721.9 411.6h2.4v2.4h-2.4zM802.1 424.9h2.5v2.5h-2.5zM743.6 418.1h2.4v2.4h-2.4zM724.4 403.2h2.5v2.5h-2.5zM760.0 440.8h1.8v1.8h-1.8zM604.0 357.0h1.3v1.3h-1.3zM638.0 364.2h1.4v1.4h-1.4zM663.0 374.1h1.4v1.4h-1.4zM743.3 410.7h2.3v2.3h-2.3zM741.2 416.9h2.5v2.5h-2.5zM725.2 395.2h1.7v1.7h-1.7zM610.5 345.5h1.2v1.2h-1.2zM664.6 400.0h2.6v2.6h-2.6zM739.8 413.6h2.6v2.6h-2.6zM576.1 339.1h1.8v1.8h-1.8zM671.9 395.0h2.6v2.6h-2.6zM639.2 370.1h1.1v1.1h-1.1zM568.4 335.7h1.8v1.8h-1.8zM581.9 329.2h2.0v2.0h-2.0zM712.9 379.7h2.2v2.2h-2.2zM765.2 439.2h1.6v1.6h-1.6zM698.6 387.1h2.6v2.6h-2.6zM559.6 323.5h1.4v1.4h-1.4zM609.2 348.1h2.0v2.0h-2.0zM707.4 390.1h2.5v2.5h-2.5zM673.8 391.7h2.3v2.3h-2.3zM691.4 374.9h1.0v1.0h-1.0zM677.1 383.7h2.3v2.3h-2.3zM688.6 389.1h1.5v1.5h-1.5zM587.0 355.6h1.9v1.9h-1.9zM621.3 350.4h1.4v1.4h-1.4zM690.1 397.1h1.9v1.9h-1.9zM590.0 332.2h1.5v1.5h-1.5zM625.1 355.4h2.3v2.3h-2.3zM576.0 353.9h1.3v1.3h-1.3zM742.8 416.8h1.1v1.1h-1.1zM719.3 394.9h1.7v1.7h-1.7zM681.3 385.4h1.6v1.6h-1.6zM623.7 358.4h1.5v1.5h-1.5zM767.0 437.1h2.4v2.4h-2.4zM625.4 365.3h2.2v2.2h-2.2zM768.5 427.6h1.8v1.8h-1.8zM585.3 339.5h1.6v1.6h-1.6zM706.3 381.9h2.0v2.0h-2.0zM592.3 345.8h1.9v1.9h-1.9zM780.3 441.7h1.7v1.7h-1.7zM768.2 429.5h1.7v1.7h-1.7zM657.8 368.3h1.5v1.5h-1.5zM684.8 386.6h1.1v1.1h-1.1zM567.0 324.1h1.4v1.4h-1.4zM614.8 361.2h2.3v2.3h-2.3zM680.6 386.5h1.5v1.5h-1.5zM725.2 411.2h2.1v2.1h-2.1zM560.2 331.5h2.2v2.2h-2.2zM609.4 345.5h2.2v2.2h-2.2zM569.0 329.3h1.8v1.8h-1.8zM612.9 350.1h2.0v2.0h-2.0zM730.9 413.5h1.5v1.5h-1.5zM586.8 339.4h1.2v1.2h-1.2zM676.6 401.8h2.5v2.5h-2.5zM785.9 436.4h1.5v1.5h-1.5zM659.5 378.4h2.3v2.3h-2.3zM567.6 328.3h1.3v1.3h-1.3zM648.6 364.7h1.9v1.9h-1.9zM644.4 380.0h2.0v2.0h-2.0zM773.7 431.7h2.1v2.1h-2.1zM598.8 346.9h2.6v2.6h-2.6zM730.5 406.8h1.2v1.2h-1.2zM760.7 429.7h2.2v2.2h-2.2zM770.2 439.6h2.5v2.5h-2.5zM629.1 361.0h2.2v2.2h-2.2zM626.8 365.1h1.8v1.8h-1.8zM638.1 365.3h1.4v1.4h-1.4zM602.8 345.3h1.3v1.3h-1.3zM761.0 422.3h1.2v1.2h-1.2zM596.8 338.1h2.2v2.2h-2.2zM754.3 428.5h1.7v1.7h-1.7zM656.7 385.4h1.3v1.3h-1.3zM633.1 372.3h1.7v1.7h-1.7zM748.6 417.9h1.3v1.3h-1.3zM673.8 376.2h1.2v1.2h-1.2zM648.0 382.2h1.6v1.6h-1.6zM644.6 392.5h1.1v1.1h-1.1zM721.3 411.5h1.9v1.9h-1.9zM628.6 359.3h2.5v2.5h-2.5zM614.5 369.0h2.3v2.3h-2.3zM569.3 331.8h2.1v2.1h-2.1zM577.1 347.9h2.0v2.0h-2.0zM574.1 340.2h1.3v1.3h-1.3zM623.4 358.4h1.4v1.4h-1.4zM770.5 435.2h1.2v1.2h-1.2zM626.0 376.7h1.6v1.6h-1.6zM625.5 358.2h2.1v2.1h-2.1zM660.8 381.4h1.3v1.3h-1.3zM718.1 401.4h2.1v2.1h-2.1zM634.1 374.5h1.4v1.4h-1.4zM733.0 413.0h2.6v2.6h-2.6zM706.9 393.1h1.4v1.4h-1.4zM795.7 441.1h1.6v1.6h-1.6zM708.3 399.2h2.4v2.4h-2.4zM585.7 357.9h2.1v2.1h-2.1zM635.2 370.9h1.6v1.6h-1.6zM724.7 410.1h1.9v1.9h-1.9zM629.8 368.1h1.5v1.5h-1.5zM642.1 377.1h2.3v2.3h-2.3zM650.7 376.3h2.5v2.5h-2.5zM766.3 423.5h1.8v1.8h-1.8zM588.3 356.5h2.3v2.3h-2.3zM787.3 437.7h1.2v1.2h-1.2zM689.3 397.0h1.7v1.7h-1.7zM773.1 423.7h1.7v1.7h-1.7zM753.0 423.0h1.6v1.6h-1.6zM669.7 377.4h2.5v2.5h-2.5zM624.1 357.5h2.0v2.0h-2.0zM726.1 398.4h1.8v1.8h-1.8zM632.5 365.7h2.0v2.0h-2.0zM767.0 416.6h2.3v2.3h-2.3zM598.7 361.5h2.6v2.6h-2.6zM557.5 335.9h2.0v2.0h-2.0zM745.5 436.9h1.5v1.5h-1.5zM609.4 348.1h2.3v2.3h-2.3zM683.0 369.8h2.5v2.5h-2.5zM653.4 373.8h2.5v2.5h-2.5zM571.0 331.1h1.9v1.9h-1.9zM709.0 385.9h2.4v2.4h-2.4zM755.9 421.5h2.5v2.5h-2.5zM584.1 339.6h2.1v2.1h-2.1zM614.4 357.9h2.3v2.3h-2.3zM758.7 414.0h1.9v1.9h-1.9zM663.3 386.8h1.9v1.9h-1.9zM569.9 336.4h1.2v1.2h-1.2zM755.1 407.7h1.3v1.3h-1.3zM729.0 407.5h1.0v1.0h-1.0zM597.2 347.4h1.3v1.3h-1.3zM630.3 375.7h1.3v1.3h-1.3zM717.2 415.0h1.3v1.3h-1.3zM657.9 385.2h2.0v2.0h-2.0zM651.7 368.4h1.3v1.3h-1.3zM715.7 392.8h1.0v1.0h-1.0zM610.6 347.7h2.5v2.5h-2.5zM698.5 394.9h2.2v2.2h-2.2zM610.5 372.3h1.8v1.8h-1.8zM780.7 426.7h2.1v2.1h-2.1zM573.2 324.9h2.0v2.0h-2.0zM628.3 357.3h1.0v1.0h-1.0zM742.8 412.8h1.0v1.0h-1.0zM587.3 344.2h2.6v2.6h-2.6zM775.5 432.4h2.2v2.2h-2.2zM622.2 386.0h1.1v1.1h-1.1zM650.5 376.1h1.2v1.2h-1.2zM604.7 341.0h2.0v2.0h-2.0zM687.4 385.7h2.3v2.3h-2.3zM572.5 328.6h1.2v1.2h-1.2zM608.6 352.7h1.0v1.0h-1.0zM561.0 337.6h1.3v1.3h-1.3zM619.3 366.7h1.7v1.7h-1.7zM646.7 370.0h2.2v2.2h-2.2zM562.2 345.3h1.7v1.7h-1.7zM760.4 425.2h2.2v2.2h-2.2zM610.8 359.4h2.3v2.3h-2.3zM755.7 420.4h1.9v1.9h-1.9zM573.6 338.1h2.0v2.0h-2.0zM738.9 423.2h1.8v1.8h-1.8zM791.4 434.7h2.1v2.1h-2.1zM769.6 436.5h1.0v1.0h-1.0zM681.4 392.0h1.8v1.8h-1.8zM620.2 368.1h2.2v2.2h-2.2zM747.1 417.3h1.3v1.3h-1.3zM775.4 429.2h2.3v2.3h-2.3zM576.6 331.8h1.9v1.9h-1.9zM641.3 388.1h1.4v1.4h-1.4zM591.9 339.2h2.3v2.3h-2.3zM758.8 430.4h1.2v1.2h-1.2zM586.7 348.2h1.2v1.2h-1.2zM777.2 434.4h2.4v2.4h-2.4zM620.1 364.4h1.9v1.9h-1.9zM674.8 391.7h1.9v1.9h-1.9zM766.1 416.5h2.6v2.6h-2.6zM573.4 345.1h2.4v2.4h-2.4zM575.8 344.3h2.3v2.3h-2.3zM624.5 362.8h2.0v2.0h-2.0zM614.7 357.4h1.1v1.1h-1.1zM691.8 394.8h1.7v1.7h-1.7zM749.4 418.7h1.2v1.2h-1.2zM703.4 387.4h1.2v1.2h-1.2zM674.8 404.2h1.9v1.9h-1.9zM784.1 435.4h1.9v1.9h-1.9zM668.2 382.0h1.8v1.8h-1.8zM702.1 387.5h2.0v2.0h-2.0zM775.3 436.8h2.0v2.0h-2.0zM700.3 388.2h2.5v2.5h-2.5zM677.5 395.3h2.5v2.5h-2.5zM679.7 378.4h1.1v1.1h-1.1zM714.5 398.1h1.8v1.8h-1.8zM668.3 373.2h1.1v1.1h-1.1zM750.4 416.7h1.1v1.1h-1.1zM767.8 433.9h1.3v1.3h-1.3zM772.0 434.1h2.1v2.1h-2.1zM771.6 434.8h1.8v1.8h-1.8zM712.0 392.4h1.4v1.4h-1.4zM684.5 397.9h1.2v1.2h-1.2zM747.6 421.4h2.1v2.1h-2.1zM645.9 374.4h1.6v1.6h-1.6zM710.8 402.4h2.4v2.4h-2.4zM637.7 364.5h1.8v1.8h-1.8zM781.5 445.5h1.2v1.2h-1.2zM559.5 338.4h2.2v2.2h-2.2zM585.4 334.8h1.6v1.6h-1.6zM687.1 393.0h2.4v2.4h-2.4zM563.8 321.0h2.0v2.0h-2.0zM703.8 393.3h1.5v1.5h-1.5zM757.9 420.2h2.6v2.6h-2.6zM572.8 339.5h2.5v2.5h-2.5zM653.6 368.5h2.0v2.0h-2.0zM670.8 380.7h1.8v1.8h-1.8zM597.3 352.8h2.3v2.3h-2.3zM577.0 335.2h2.4v2.4h-2.4zM653.3 383.3h1.8v1.8h-1.8zM780.2 439.0h1.9v1.9h-1.9zM720.4 329.9h1.7v1.7h-1.7zM743.8 328.0h1.6v1.6h-1.6zM730.7 327.2h1.3v1.3h-1.3zM746.1 333.0h1.6v1.6h-1.6zM713.2 320.6h1.5v1.5h-1.5zM730.4 331.8h1.3v1.3h-1.3zM726.0 324.8h1.9v1.9h-1.9zM708.4 316.8h1.5v1.5h-1.5zM745.3 336.2h2.0v2.0h-2.0zM757.1 336.2h1.7v1.7h-1.7zM775.8 338.4h1.8v1.8h-1.8zM760.8 337.0h2.2v2.2h-2.2zM698.9 320.9h2.2v2.2h-2.2zM738.8 335.8h2.0v2.0h-2.0zM727.9 324.5h1.6v1.6h-1.6zM745.9 335.0h1.7v1.7h-1.7zM767.9 311.9h2.1v2.1h-2.1zM799.7 415.3h1.3v1.3h-1.3zM793.5 390.9h1.0v1.0h-1.0zM785.5 402.7h1.2v1.2h-1.2zM791.8 362.0h2.1v2.1h-2.1zM782.7 343.8h1.7v1.7h-1.7zM791.1 398.6h2.2v2.2h-2.2zM772.9 335.4h1.3v1.3h-1.3zM746.8 294.1h2.2v2.2h-2.2zM790.3 373.7h1.4v1.4h-1.4zM790.0 404.4h1.9v1.9h-1.9zM784.6 386.0h1.5v1.5h-1.5zM772.8 320.3h1.2v1.2h-1.2zM783.8 345.2h1.6v1.6h-1.6zM794.6 408.6h2.1v2.1h-2.1zM772.9 315.6h1.6v1.6h-1.6zM792.5 357.8h1.4v1.4h-1.4zM797.3 397.7h2.4v2.4h-2.4zM749.5 306.6h1.0v1.0h-1.0zM781.5 342.7h1.2v1.2h-1.2zM748.7 294.0h1.9v1.9h-1.9zM791.1 394.3h2.3v2.3h-2.3zM781.2 327.1h1.4v1.4h-1.4zM850.3 762.3h2.5v2.5h-2.5zM920.4 815.1h1.8v1.8h-1.8zM835.5 794.5h2.1v2.1h-2.1zM846.8 801.3h1.8v1.8h-1.8zM857.2 793.5h1.2v1.2h-1.2zM854.3 758.5h2.4v2.4h-2.4zM854.8 787.0h2.8v2.8h-2.8zM848.5 721.9h1.6v1.6h-1.6zM849.2 772.6h1.3v1.3h-1.3zM846.2 811.4h2.0v2.0h-2.0zM856.3 775.0h2.8v2.8h-2.8zM873.0 834.6h1.2v1.2h-1.2zM848.5 785.8h1.6v1.6h-1.6zM872.3 843.3h2.4v2.4h-2.4zM880.0 825.2h1.2v1.2h-1.2zM836.1 785.2h2.0v2.0h-2.0zM890.1 822.7h1.6v1.6h-1.6zM840.3 747.7h2.7v2.7h-2.7zM877.2 837.1h2.8v2.8h-2.8zM860.1 734.6h1.9v1.9h-1.9zM912.2 828.9h1.3v1.3h-1.3zM919.5 816.9h1.7v1.7h-1.7zM834.8 781.5h1.8v1.8h-1.8zM837.9 784.0h2.7v2.7h-2.7zM917.4 811.4h1.9v1.9h-1.9zM855.4 783.5h1.7v1.7h-1.7zM920.1 810.9h1.8v1.8h-1.8zM839.1 788.5h2.4v2.4h-2.4zM859.7 742.4h1.7v1.7h-1.7zM864.5 745.1h2.2v2.2h-2.2zM843.0 785.2h2.4v2.4h-2.4zM881.7 841.7h2.6v2.6h-2.6zM835.9 819.2h1.9v1.9h-1.9zM859.5 715.7h1.4v1.4h-1.4zM853.0 809.0h2.6v2.6h-2.6zM863.6 716.1h1.5v1.5h-1.5zM882.8 840.4h1.6v1.6h-1.6zM913.8 812.5h1.5v1.5h-1.5zM848.5 836.9h2.3v2.3h-2.3zM839.1 741.1h2.2v2.2h-2.2zM876.4 734.0h1.9v1.9h-1.9zM862.3 756.1h2.6v2.6h-2.6zM846.3 823.2h1.9v1.9h-1.9zM843.4 821.4h2.4v2.4h-2.4zM855.0 772.9h2.7v2.7h-2.7zM880.2 842.4h2.4v2.4h-2.4zM916.8 827.7h1.3v1.3h-1.3zM867.3 828.3h2.4v2.4h-2.4zM840.5 758.1h2.1v2.1h-2.1zM876.3 736.1h2.6v2.6h-2.6zM916.6 832.5h1.9v1.9h-1.9zM853.9 800.1h2.2v2.2h-2.2zM838.7 797.5h2.3v2.3h-2.3zM868.3 725.6h1.7v1.7h-1.7zM912.0 822.1h2.2v2.2h-2.2zM872.3 714.2h2.3v2.3h-2.3zM947.0 810.7h2.6v2.6h-2.6zM910.0 821.2h2.0v2.0h-2.0zM846.0 786.6h2.7v2.7h-2.7zM837.7 822.9h2.0v2.0h-2.0zM850.9 792.4h2.2v2.2h-2.2zM914.4 812.3h2.3v2.3h-2.3zM856.2 744.2h2.0v2.0h-2.0zM852.9 812.6h1.9v1.9h-1.9zM844.9 746.6h2.6v2.6h-2.6zM938.5 822.0h2.7v2.7h-2.7zM883.0 822.0h1.7v1.7h-1.7zM836.4 782.4h2.1v2.1h-2.1zM849.1 787.3h1.7v1.7h-1.7zM859.6 773.4h2.1v2.1h-2.1zM894.1 836.7h1.8v1.8h-1.8zM860.0 838.2h1.3v1.3h-1.3zM903.9 833.9h1.5v1.5h-1.5zM867.0 832.4h1.6v1.6h-1.6zM839.3 820.1h2.6v2.6h-2.6zM859.9 768.3h2.5v2.5h-2.5zM939.4 820.2h2.3v2.3h-2.3zM846.4 736.1h1.6v1.6h-1.6zM859.0 827.8h1.8v1.8h-1.8zM861.0 725.2h2.1v2.1h-2.1zM874.7 736.5h1.5v1.5h-1.5zM860.0 716.5h2.8v2.8h-2.8zM871.0 723.2h1.5v1.5h-1.5zM840.7 778.4h2.5v2.5h-2.5zM937.3 805.1h1.3v1.3h-1.3zM841.8 826.3h2.3v2.3h-2.3zM943.4 810.7h1.8v1.8h-1.8zM840.1 777.4h2.6v2.6h-2.6zM858.5 739.8h2.3v2.3h-2.3zM882.9 841.6h1.5v1.5h-1.5zM854.4 805.1h1.3v1.3h-1.3zM886.3 840.3h2.5v2.5h-2.5zM860.3 752.0h1.6v1.6h-1.6zM899.0 819.1h2.3v2.3h-2.3zM844.2 777.9h1.9v1.9h-1.9zM907.8 816.0h1.6v1.6h-1.6zM925.6 809.0h2.3v2.3h-2.3zM879.7 833.5h1.6v1.6h-1.6zM850.5 824.4h2.3v2.3h-2.3zM895.1 837.5h1.4v1.4h-1.4zM841.8 826.5h1.9v1.9h-1.9zM846.5 758.9h2.0v2.0h-2.0zM892.2 823.0h2.1v2.1h-2.1zM866.3 727.9h2.6v2.6h-2.6zM872.7 820.1h2.3v2.3h-2.3zM944.7 809.5h2.5v2.5h-2.5zM917.2 823.8h1.8v1.8h-1.8zM885.2 823.0h2.4v2.4h-2.4zM857.4 739.4h2.4v2.4h-2.4zM836.7 767.0h1.8v1.8h-1.8zM874.5 721.5h2.2v2.2h-2.2zM844.0 745.8h2.8v2.8h-2.8zM838.0 816.2h2.4v2.4h-2.4zM856.5 721.2h2.1v2.1h-2.1zM917.9 821.3h1.4v1.4h-1.4zM856.9 720.6h1.6v1.6h-1.6zM927.6 826.2h2.6v2.6h-2.6zM847.6 767.3h2.5v2.5h-2.5zM941.7 815.1h2.8v2.8h-2.8zM849.2 735.3h1.6v1.6h-1.6zM857.5 775.1h1.7v1.7h-1.7zM840.4 823.7h1.2v1.2h-1.2zM914.8 826.4h2.7v2.7h-2.7zM862.9 728.1h1.7v1.7h-1.7zM865.4 730.1h2.1v2.1h-2.1zM848.4 791.1h1.6v1.6h-1.6zM838.1 757.1h2.0v2.0h-2.0zM900.8 823.2h1.7v1.7h-1.7zM944.7 803.3h1.8v1.8h-1.8zM851.1 816.6h2.3v2.3h-2.3zM852.9 796.5h2.7v2.7h-2.7zM857.6 743.4h1.4v1.4h-1.4zM861.8 747.2h1.9v1.9h-1.9zM850.6 739.4h1.7v1.7h-1.7zM888.8 823.8h2.6v2.6h-2.6zM861.5 840.1h1.6v1.6h-1.6zM863.7 818.0h2.3v2.3h-2.3zM917.3 832.9h2.1v2.1h-2.1zM847.6 757.1h2.7v2.7h-2.7zM874.9 820.7h1.3v1.3h-1.3zM845.3 770.4h2.5v2.5h-2.5zM839.9 804.8h2.5v2.5h-2.5zM875.2 721.5h2.1v2.1h-2.1zM844.4 822.7h1.8v1.8h-1.8zM910.0 824.3h1.5v1.5h-1.5zM837.0 768.5h1.5v1.5h-1.5zM851.0 816.2h1.4v1.4h-1.4zM883.9 830.6h2.6v2.6h-2.6zM853.4 777.5h1.2v1.2h-1.2zM870.0 837.7h1.2v1.2h-1.2zM905.6 828.1h2.6v2.6h-2.6zM864.5 732.3h1.7v1.7h-1.7zM861.9 757.0h2.4v2.4h-2.4zM880.3 822.9h2.7v2.7h-2.7zM868.0 720.4h2.0v2.0h-2.0zM887.0 824.6h2.1v2.1h-2.1zM855.6 762.6h2.1v2.1h-2.1zM851.7 739.0h2.2v2.2h-2.2zM870.0 726.2h2.1v2.1h-2.1zM885.6 820.2h2.3v2.3h-2.3zM937.3 813.2h2.0v2.0h-2.0zM855.8 782.0h1.3v1.3h-1.3zM835.3 770.0h1.4v1.4h-1.4zM847.3 789.6h2.0v2.0h-2.0zM841.7 792.9h2.2v2.2h-2.2zM864.5 743.0h1.4v1.4h-1.4zM844.9 731.8h1.5v1.5h-1.5zM844.2 826.8h1.7v1.7h-1.7zM857.6 753.6h1.7v1.7h-1.7zM835.7 819.9h1.5v1.5h-1.5zM931.5 823.4h1.7v1.7h-1.7zM853.1 722.7h2.1v2.1h-2.1zM919.4 825.3h1.7v1.7h-1.7zM868.7 719.3h2.0v2.0h-2.0zM854.4 830.6h2.8v2.8h-2.8zM857.4 803.6h2.2v2.2h-2.2zM850.7 809.5h2.3v2.3h-2.3zM851.7 806.5h1.9v1.9h-1.9zM896.9 828.5h2.0v2.0h-2.0zM936.5 810.8h2.4v2.4h-2.4zM930.3 806.3h1.4v1.4h-1.4zM932.0 819.2h2.4v2.4h-2.4zM836.0 793.1h1.7v1.7h-1.7zM858.8 805.9h1.3v1.3h-1.3zM928.7 820.6h2.1v2.1h-2.1zM844.1 733.4h2.8v2.8h-2.8zM841.6 824.7h2.0v2.0h-2.0zM867.4 839.8h2.2v2.2h-2.2zM842.6 798.9h1.4v1.4h-1.4zM842.0 810.9h1.4v1.4h-1.4zM918.8 831.8h1.2v1.2h-1.2zM839.5 765.7h1.7v1.7h-1.7zM841.0 776.8h1.3v1.3h-1.3zM850.2 741.6h2.5v2.5h-2.5zM847.2 799.8h2.0v2.0h-2.0zM852.7 752.3h2.3v2.3h-2.3zM900.7 821.2h2.2v2.2h-2.2zM868.8 718.8h2.0v2.0h-2.0zM868.7 823.3h2.8v2.8h-2.8zM853.2 758.6h1.9v1.9h-1.9zM891.3 823.9h1.2v1.2h-1.2zM842.4 822.4h2.3v2.3h-2.3zM868.9 718.3h2.2v2.2h-2.2zM874.2 835.8h1.7v1.7h-1.7zM856.6 798.3h2.1v2.1h-2.1zM859.6 755.2h1.6v1.6h-1.6zM932.5 823.6h2.0v2.0h-2.0zM861.3 730.6h1.4v1.4h-1.4zM837.6 805.1h2.3v2.3h-2.3zM847.3 803.2h1.3v1.3h-1.3zM853.4 811.0h2.6v2.6h-2.6zM843.4 742.1h2.6v2.6h-2.6zM835.5 816.9h1.8v1.8h-1.8zM858.0 777.1h1.4v1.4h-1.4zM846.2 737.1h2.0v2.0h-2.0zM858.6 815.7h2.7v2.7h-2.7zM837.8 799.1h1.4v1.4h-1.4zM867.1 723.5h2.3v2.3h-2.3zM851.5 738.6h2.2v2.2h-2.2zM846.9 787.6h1.9v1.9h-1.9zM849.2 774.4h1.7v1.7h-1.7zM901.6 837.4h1.9v1.9h-1.9zM877.3 824.6h1.9v1.9h-1.9zM863.0 741.9h1.8v1.8h-1.8zM929.4 827.6h2.5v2.5h-2.5zM850.3 772.5h1.3v1.3h-1.3zM949.3 812.1h2.6v2.6h-2.6zM839.4 807.1h2.7v2.7h-2.7zM869.4 823.7h2.8v2.8h-2.8zM874.4 833.6h2.8v2.8h-2.8zM872.5 843.2h1.7v1.7h-1.7zM834.4 783.6h2.2v2.2h-2.2zM847.5 787.8h1.6v1.6h-1.6zM889.7 840.0h1.9v1.9h-1.9zM840.0 805.9h1.3v1.3h-1.3zM884.4 833.6h1.6v1.6h-1.6zM843.4 819.0h2.4v2.4h-2.4zM848.6 772.1h1.3v1.3h-1.3zM841.5 816.9h2.3v2.3h-2.3zM838.8 812.9h2.8v2.8h-2.8zM876.2 840.8h1.6v1.6h-1.6zM856.7 762.6h1.9v1.9h-1.9zM940.8 811.1h1.7v1.7h-1.7zM909.9 814.4h2.7v2.7h-2.7zM899.4 824.9h1.3v1.3h-1.3zM882.7 830.1h2.7v2.7h-2.7zM859.7 757.4h2.2v2.2h-2.2zM935.1 810.4h2.4v2.4h-2.4zM928.0 816.6h1.2v1.2h-1.2zM855.8 757.4h1.9v1.9h-1.9zM843.9 769.8h1.3v1.3h-1.3zM861.0 720.1h1.5v1.5h-1.5zM848.9 776.0h2.5v2.5h-2.5zM872.1 731.1h2.3v2.3h-2.3zM859.9 747.0h1.3v1.3h-1.3zM888.6 824.8h1.4v1.4h-1.4zM942.7 808.7h2.0v2.0h-2.0zM943.1 818.3h2.4v2.4h-2.4zM849.6 755.1h1.9v1.9h-1.9zM846.4 732.1h1.9v1.9h-1.9zM928.1 808.2h2.4v2.4h-2.4zM874.7 727.3h2.5v2.5h-2.5zM848.1 830.6h1.6v1.6h-1.6zM837.2 824.9h1.3v1.3h-1.3zM873.9 727.0h2.5v2.5h-2.5zM874.5 823.7h2.7v2.7h-2.7zM866.7 723.0h1.9v1.9h-1.9zM860.7 756.5h1.4v1.4h-1.4zM839.1 790.0h1.5v1.5h-1.5zM866.4 715.6h2.1v2.1h-2.1zM847.7 768.1h1.4v1.4h-1.4zM840.1 783.2h1.3v1.3h-1.3zM916.2 824.6h2.0v2.0h-2.0zM922.6 820.8h2.0v2.0h-2.0zM857.2 754.3h1.7v1.7h-1.7zM863.6 738.3h2.1v2.1h-2.1zM875.6 713.4h2.2v2.2h-2.2zM864.9 721.6h2.1v2.1h-2.1zM859.7 714.9h1.8v1.8h-1.8zM861.1 714.5h2.5v2.5h-2.5zM838.8 784.1h2.5v2.5h-2.5zM920.9 811.2h1.9v1.9h-1.9zM854.2 751.1h2.1v2.1h-2.1zM870.0 731.5h2.1v2.1h-2.1zM854.5 774.6h1.6v1.6h-1.6zM839.2 767.2h2.7v2.7h-2.7zM851.3 775.3h1.8v1.8h-1.8zM915.5 818.5h2.7v2.7h-2.7zM850.2 817.3h2.4v2.4h-2.4zM911.6 829.8h1.8v1.8h-1.8zM871.3 833.5h1.3v1.3h-1.3zM862.9 739.4h1.7v1.7h-1.7zM861.4 814.9h2.3v2.3h-2.3zM869.6 728.1h2.3v2.3h-2.3zM864.1 723.8h1.4v1.4h-1.4zM858.6 716.5h1.4v1.4h-1.4zM841.9 805.5h1.4v1.4h-1.4zM894.3 830.6h2.4v2.4h-2.4zM912.7 813.0h1.7v1.7h-1.7zM865.8 742.1h2.1v2.1h-2.1zM837.6 822.8h2.6v2.6h-2.6zM847.6 785.4h2.2v2.2h-2.2zM871.0 837.8h2.2v2.2h-2.2zM856.9 798.0h2.1v2.1h-2.1zM840.6 781.4h2.7v2.7h-2.7zM856.9 788.7h2.0v2.0h-2.0zM866.2 836.7h1.9v1.9h-1.9zM851.0 818.9h1.5v1.5h-1.5zM836.1 823.4h2.7v2.7h-2.7zM870.6 740.0h1.9v1.9h-1.9zM870.0 718.9h2.0v2.0h-2.0zM849.2 784.3h2.5v2.5h-2.5zM920.6 820.2h2.8v2.8h-2.8zM858.1 781.2h1.7v1.7h-1.7zM849.5 737.6h1.7v1.7h-1.7zM875.9 837.2h1.6v1.6h-1.6zM941.6 810.4h2.7v2.7h-2.7zM912.4 828.4h2.7v2.7h-2.7zM852.1 836.0h2.0v2.0h-2.0zM858.3 775.7h2.4v2.4h-2.4zM856.5 795.3h1.8v1.8h-1.8zM834.4 782.3h2.8v2.8h-2.8zM874.0 824.1h1.8v1.8h-1.8zM941.2 799.9h2.5v2.5h-2.5zM939.2 806.2h1.7v1.7h-1.7zM873.8 837.3h1.6v1.6h-1.6zM885.8 820.6h1.5v1.5h-1.5zM940.6 816.4h1.4v1.4h-1.4zM860.2 766.1h1.3v1.3h-1.3zM861.3 715.5h1.6v1.6h-1.6zM852.0 840.0h1.6v1.6h-1.6zM855.9 803.9h1.9v1.9h-1.9zM834.9 806.8h2.7v2.7h-2.7zM841.1 814.8h1.5v1.5h-1.5zM849.7 814.8h2.3v2.3h-2.3zM854.0 771.1h2.8v2.8h-2.8zM843.9 773.0h2.0v2.0h-2.0zM915.5 821.4h2.6v2.6h-2.6zM849.7 746.2h2.2v2.2h-2.2zM876.5 717.9h2.6v2.6h-2.6zM853.9 753.0h1.3v1.3h-1.3zM873.7 822.6h2.6v2.6h-2.6zM908.1 820.9h1.5v1.5h-1.5zM893.1 826.2h1.9v1.9h-1.9zM870.4 735.3h2.5v2.5h-2.5zM867.4 837.2h2.0v2.0h-2.0zM840.3 780.9h2.6v2.6h-2.6zM844.1 817.0h2.8v2.8h-2.8zM867.8 713.5h2.5v2.5h-2.5zM942.0 808.3h1.8v1.8h-1.8zM927.2 820.5h1.7v1.7h-1.7zM912.6 817.5h2.1v2.1h-2.1zM844.8 736.1h1.4v1.4h-1.4zM841.0 741.5h1.5v1.5h-1.5zM891.8 834.1h2.6v2.6h-2.6zM882.9 831.0h2.6v2.6h-2.6zM858.4 713.4h1.8v1.8h-1.8zM869.1 728.0h2.0v2.0h-2.0zM882.5 829.2h2.7v2.7h-2.7zM922.1 814.8h2.3v2.3h-2.3zM937.1 819.8h1.5v1.5h-1.5zM928.4 811.8h1.4v1.4h-1.4zM941.6 819.4h2.5v2.5h-2.5zM867.4 712.9h2.3v2.3h-2.3zM874.1 840.2h1.3v1.3h-1.3zM902.9 836.0h2.2v2.2h-2.2zM858.1 792.3h1.4v1.4h-1.4zM844.5 803.0h1.5v1.5h-1.5zM859.7 771.2h1.9v1.9h-1.9zM876.1 728.8h1.4v1.4h-1.4zM864.3 818.2h2.4v2.4h-2.4zM883.8 836.6h2.5v2.5h-2.5zM886.6 833.5h2.5v2.5h-2.5zM849.5 780.2h1.9v1.9h-1.9zM895.6 835.0h1.3v1.3h-1.3zM853.3 826.9h2.8v2.8h-2.8zM874.7 841.2h1.7v1.7h-1.7zM846.6 729.0h2.5v2.5h-2.5zM919.2 819.3h1.7v1.7h-1.7zM874.6 832.7h2.2v2.2h-2.2zM854.7 761.4h1.5v1.5h-1.5zM836.7 821.7h2.4v2.4h-2.4zM862.0 836.5h2.4v2.4h-2.4zM851.0 767.8h2.8v2.8h-2.8zM876.7 735.0h1.8v1.8h-1.8zM906.7 835.0h1.8v1.8h-1.8zM846.2 807.4h1.8v1.8h-1.8zM838.5 806.6h2.1v2.1h-2.1zM876.1 741.4h2.8v2.8h-2.8zM879.8 751.9h2.5v2.5h-2.5zM895.7 753.0h1.3v1.3h-1.3zM903.0 756.1h2.3v2.3h-2.3zM902.9 746.4h2.3v2.3h-2.3zM868.1 754.1h1.7v1.7h-1.7zM868.6 750.5h1.9v1.9h-1.9zM903.1 749.2h2.1v2.1h-2.1zM892.0 758.5h2.0v2.0h-2.0zM914.9 744.3h2.8v2.8h-2.8zM895.6 753.7h2.0v2.0h-2.0zM907.4 758.9h1.2v1.2h-1.2zM885.8 754.0h1.9v1.9h-1.9zM922.3 746.1h1.4v1.4h-1.4zM912.7 750.6h1.4v1.4h-1.4zM931.7 748.0h1.9v1.9h-1.9zM875.9 749.0h2.4v2.4h-2.4zM918.1 746.4h2.8v2.8h-2.8zM933.3 746.4h2.5v2.5h-2.5zM928.9 748.7h2.5v2.5h-2.5zM911.9 750.6h1.3v1.3h-1.3zM928.6 745.4h2.2v2.2h-2.2zM910.3 749.9h2.1v2.1h-2.1zM880.7 743.3h2.0v2.0h-2.0zM916.6 751.6h2.2v2.2h-2.2zM896.9 752.0h2.2v2.2h-2.2zM905.4 759.9h2.1v2.1h-2.1zM886.2 759.6h1.9v1.9h-1.9zM898.8 753.3h1.6v1.6h-1.6zM904.3 746.2h2.6v2.6h-2.6zM873.7 748.8h1.4v1.4h-1.4zM874.8 743.7h1.6v1.6h-1.6zM882.0 744.2h2.3v2.3h-2.3zM916.6 743.3h1.8v1.8h-1.8zM901.3 758.8h1.5v1.5h-1.5zM928.6 745.8h2.1v2.1h-2.1zM897.3 754.8h2.7v2.7h-2.7zM872.3 738.9h1.5v1.5h-1.5zM914.4 754.2h1.9v1.9h-1.9zM877.8 738.1h1.3v1.3h-1.3zM904.5 749.0h1.7v1.7h-1.7zM885.7 740.4h2.4v2.4h-2.4zM897.3 745.4h1.5v1.5h-1.5zM910.0 761.0h1.6v1.6h-1.6zM891.6 760.8h1.7v1.7h-1.7zM913.4 748.3h2.2v2.2h-2.2zM903.8 761.7h1.4v1.4h-1.4zM866.4 755.5h2.5v2.5h-2.5zM869.6 746.1h2.0v2.0h-2.0zM914.3 744.7h1.4v1.4h-1.4zM926.0 754.8h2.7v2.7h-2.7zM917.4 752.4h2.1v2.1h-2.1zM897.9 751.4h1.4v1.4h-1.4zM896.6 752.0h2.4v2.4h-2.4zM916.1 742.9h2.1v2.1h-2.1zM886.4 746.8h1.2v1.2h-1.2zM870.5 741.7h2.7v2.7h-2.7zM898.8 755.9h2.3v2.3h-2.3zM913.8 756.3h2.0v2.0h-2.0zM911.3 755.6h2.0v2.0h-2.0zM880.9 760.0h2.2v2.2h-2.2zM910.0 761.0h2.7v2.7h-2.7zM869.2 749.9h1.5v1.5h-1.5zM868.6 747.1h2.8v2.8h-2.8zM895.8 744.0h1.8v1.8h-1.8zM913.8 750.3h2.8v2.8h-2.8zM867.9 751.9h2.4v2.4h-2.4zM864.9 746.2h1.9v1.9h-1.9zM883.5 750.5h1.2v1.2h-1.2zM869.1 757.2h2.2v2.2h-2.2zM873.3 743.3h2.5v2.5h-2.5zM869.9 741.6h1.7v1.7h-1.7zM926.6 748.8h1.7v1.7h-1.7zM895.7 757.0h2.8v2.8h-2.8zM928.9 751.9h1.7v1.7h-1.7zM893.4 757.5h2.8v2.8h-2.8zM870.7 754.1h2.6v2.6h-2.6zM890.1 742.1h2.8v2.8h-2.8zM892.0 746.6h2.3v2.3h-2.3zM878.9 747.5h2.4v2.4h-2.4zM912.4 757.6h2.2v2.2h-2.2zM919.7 756.2h2.5v2.5h-2.5zM892.9 758.2h1.8v1.8h-1.8zM896.9 755.1h1.3v1.3h-1.3zM912.1 752.1h2.1v2.1h-2.1zM889.6 760.3h2.0v2.0h-2.0zM905.1 760.5h2.2v2.2h-2.2zM924.7 741.1h1.3v1.3h-1.3zM909.0 750.7h2.2v2.2h-2.2zM894.2 761.1h2.6v2.6h-2.6zM928.2 747.6h1.7v1.7h-1.7zM906.6 745.5h2.8v2.8h-2.8zM923.4 751.4h2.2v2.2h-2.2zM877.2 757.6h2.8v2.8h-2.8zM906.9 761.6h2.7v2.7h-2.7zM883.8 740.1h1.4v1.4h-1.4zM926.0 758.5h2.2v2.2h-2.2zM887.7 759.4h1.4v1.4h-1.4zM897.4 760.0h1.5v1.5h-1.5zM873.9 754.4h2.8v2.8h-2.8zM876.7 751.1h1.6v1.6h-1.6zM903.2 756.6h2.5v2.5h-2.5zM887.5 745.7h1.2v1.2h-1.2zM898.4 744.8h2.2v2.2h-2.2zM915.3 751.3h2.1v2.1h-2.1zM868.8 739.5h2.6v2.6h-2.6zM914.9 756.5h1.7v1.7h-1.7zM865.1 746.9h1.6v1.6h-1.6zM904.6 750.5h2.1v2.1h-2.1zM874.5 752.7h1.6v1.6h-1.6zM876.5 737.0h2.6v2.6h-2.6zM904.7 757.0h2.8v2.8h-2.8zM888.3 748.0h1.5v1.5h-1.5zM911.6 755.3h1.9v1.9h-1.9zM900.2 759.9h2.3v2.3h-2.3zM927.6 746.4h1.7v1.7h-1.7zM916.6 750.4h2.3v2.3h-2.3zM878.6 740.7h2.1v2.1h-2.1zM900.8 748.8h2.5v2.5h-2.5zM948.5 829.5h2.1v2.1h-2.1zM978.5 841.0h1.8v1.8h-1.8zM953.2 811.1h1.6v1.6h-1.6zM965.8 811.7h1.3v1.3h-1.3zM971.9 839.2h1.8v1.8h-1.8zM952.5 828.0h1.6v1.6h-1.6zM930.0 797.6h1.9v1.9h-1.9zM930.6 796.5h1.3v1.3h-1.3zM934.1 816.3h1.6v1.6h-1.6zM977.7 842.1h2.5v2.5h-2.5zM931.0 808.8h2.3v2.3h-2.3zM973.0 824.8h1.8v1.8h-1.8zM938.8 822.3h1.5v1.5h-1.5zM947.7 829.3h2.2v2.2h-2.2zM962.7 835.8h2.6v2.6h-2.6zM973.3 818.6h2.0v2.0h-2.0zM974.6 838.5h1.9v1.9h-1.9zM937.2 803.6h2.5v2.5h-2.5zM957.9 836.0h2.3v2.3h-2.3zM968.2 832.1h1.2v1.2h-1.2zM947.8 820.4h2.0v2.0h-2.0zM980.1 835.0h2.2v2.2h-2.2zM941.1 821.7h2.2v2.2h-2.2zM934.9 818.2h2.1v2.1h-2.1zM962.3 838.9h1.3v1.3h-1.3zM961.4 831.6h1.9v1.9h-1.9zM946.2 795.2h1.9v1.9h-1.9zM945.4 826.8h2.6v2.6h-2.6zM958.9 813.9h2.0v2.0h-2.0zM973.2 819.2h1.7v1.7h-1.7zM947.5 811.5h1.8v1.8h-1.8zM946.4 819.5h1.6v1.6h-1.6zM938.0 800.3h2.6v2.6h-2.6zM947.5 800.1h1.6v1.6h-1.6zM974.2 818.4h2.6v2.6h-2.6zM975.4 830.0h2.0v2.0h-2.0zM963.0 836.0h2.2v2.2h-2.2zM947.7 795.3h1.9v1.9h-1.9zM977.2 832.0h1.8v1.8h-1.8zM972.3 834.9h1.3v1.3h-1.3zM959.1 811.6h2.2v2.2h-2.2zM971.5 827.1h1.5v1.5h-1.5zM937.3 798.6h1.8v1.8h-1.8zM930.7 810.9h1.3v1.3h-1.3zM974.8 823.5h1.6v1.6h-1.6zM952.7 813.8h2.1v2.1h-2.1zM965.8 823.7h1.7v1.7h-1.7zM962.2 823.7h1.8v1.8h-1.8zM956.0 824.5h2.6v2.6h-2.6zM948.7 824.5h2.4v2.4h-2.4zM961.3 826.1h1.3v1.3h-1.3zM931.3 801.3h1.8v1.8h-1.8zM942.7 813.6h2.0v2.0h-2.0zM967.5 818.4h2.4v2.4h-2.4zM937.7 821.5h1.6v1.6h-1.6zM943.1 798.3h2.4v2.4h-2.4zM937.5 809.6h1.5v1.5h-1.5zM976.6 832.9h2.3v2.3h-2.3zM941.5 816.6h2.0v2.0h-2.0zM957.3 831.8h2.4v2.4h-2.4zM943.4 806.2h2.5v2.5h-2.5zM949.7 798.1h1.9v1.9h-1.9zM949.1 819.6h1.4v1.4h-1.4zM934.1 796.3h1.5v1.5h-1.5zM936.4 799.6h2.6v2.6h-2.6zM963.8 805.6h1.5v1.5h-1.5zM976.4 824.3h2.1v2.1h-2.1zM946.0 813.1h1.2v1.2h-1.2zM972.4 834.9h2.3v2.3h-2.3zM937.6 818.2h2.1v2.1h-2.1zM937.4 802.2h1.8v1.8h-1.8zM970.3 812.7h2.0v2.0h-2.0zM940.7 804.8h1.9v1.9h-1.9zM976.3 835.0h1.9v1.9h-1.9zM966.8 842.5h2.2v2.2h-2.2zM949.1 797.4h1.8v1.8h-1.8zM962.3 834.9h1.6v1.6h-1.6zM945.4 795.4h1.2v1.2h-1.2zM980.8 837.3h1.8v1.8h-1.8zM952.3 826.2h1.3v1.3h-1.3zM966.7 836.5h2.1v2.1h-2.1zM951.4 813.3h2.6v2.6h-2.6zM954.7 830.5h1.3v1.3h-1.3zM935.4 810.5h1.3v1.3h-1.3zM975.0 839.2h1.8v1.8h-1.8zM953.1 802.7h1.8v1.8h-1.8zM952.5 810.9h2.3v2.3h-2.3zM958.1 817.1h2.4v2.4h-2.4zM935.2 800.8h2.2v2.2h-2.2zM952.7 818.5h1.5v1.5h-1.5zM951.2 828.1h2.4v2.4h-2.4zM975.5 840.9h2.5v2.5h-2.5zM947.1 798.8h1.8v1.8h-1.8zM957.6 804.5h1.8v1.8h-1.8zM960.4 807.5h1.2v1.2h-1.2zM949.8 819.5h2.4v2.4h-2.4zM934.5 814.2h2.3v2.3h-2.3zM984.5 837.6h1.3v1.3h-1.3zM975.4 819.0h1.7v1.7h-1.7zM973.0 831.7h1.7v1.7h-1.7zM953.6 824.8h2.1v2.1h-2.1zM935.2 815.3h2.4v2.4h-2.4zM954.1 810.9h1.8v1.8h-1.8zM931.9 790.9h2.5v2.5h-2.5zM947.3 824.3h2.6v2.6h-2.6zM969.0 841.3h1.6v1.6h-1.6zM933.0 801.6h2.4v2.4h-2.4zM971.8 839.2h1.6v1.6h-1.6zM937.1 805.6h1.8v1.8h-1.8zM951.0 795.9h1.4v1.4h-1.4zM977.6 831.7h2.1v2.1h-2.1zM975.3 839.1h2.6v2.6h-2.6zM956.2 820.5h1.3v1.3h-1.3zM933.6 798.4h1.8v1.8h-1.8zM963.9 830.6h1.3v1.3h-1.3zM947.3 805.1h2.3v2.3h-2.3zM979.3 836.5h2.5v2.5h-2.5zM954.6 804.6h2.5v2.5h-2.5zM941.6 820.6h1.8v1.8h-1.8zM944.5 794.0h1.7v1.7h-1.7zM951.2 817.6h2.1v2.1h-2.1zM963.1 835.3h2.1v2.1h-2.1zM939.2 818.0h2.1v2.1h-2.1zM945.3 819.9h2.0v2.0h-2.0zM968.3 817.7h1.5v1.5h-1.5zM967.4 842.4h1.6v1.6h-1.6zM949.6 809.7h2.3v2.3h-2.3zM942.6 825.2h2.1v2.1h-2.1zM930.6 805.2h2.1v2.1h-2.1zM963.3 821.3h2.5v2.5h-2.5zM947.0 805.4h1.4v1.4h-1.4zM968.6 812.0h1.5v1.5h-1.5zM972.4 821.5h1.9v1.9h-1.9zM933.5 817.3h1.9v1.9h-1.9zM970.5 828.6h1.5v1.5h-1.5zM965.1 813.3h2.2v2.2h-2.2zM921.0 897.8h1.2v1.2h-1.2zM917.5 882.8h1.2v1.2h-1.2zM944.0 926.3h1.9v1.9h-1.9zM939.0 926.1h1.4v1.4h-1.4zM917.5 895.0h1.7v1.7h-1.7zM929.3 864.3h1.4v1.4h-1.4zM924.1 890.7h1.1v1.1h-1.1zM941.1 884.8h1.9v1.9h-1.9zM915.5 889.0h1.6v1.6h-1.6zM928.4 867.1h2.0v2.0h-2.0zM949.1 943.0h1.6v1.6h-1.6zM904.0 843.5h1.2v1.2h-1.2zM924.0 858.8h1.7v1.7h-1.7zM903.4 849.8h1.9v1.9h-1.9zM916.6 870.6h1.8v1.8h-1.8zM911.6 843.4h0.9v0.9h-0.9zM944.0 928.0h1.9v1.9h-1.9zM920.6 908.6h1.3v1.3h-1.3zM917.0 862.3h1.5v1.5h-1.5zM904.7 847.4h1.4v1.4h-1.4zM918.8 857.1h0.9v0.9h-0.9zM949.7 917.7h1.0v1.0h-1.0zM931.7 918.5h0.8v0.8h-0.8zM918.4 862.1h1.6v1.6h-1.6zM930.1 875.4h1.0v1.0h-1.0zM919.6 864.6h0.9v0.9h-0.9zM917.8 875.5h0.9v0.9h-0.9zM932.1 882.4h1.3v1.3h-1.3zM935.8 900.2h0.9v0.9h-0.9zM931.7 876.8h1.8v1.8h-1.8zM910.1 864.9h1.9v1.9h-1.9zM943.4 906.1h1.0v1.0h-1.0zM924.1 863.4h1.1v1.1h-1.1zM937.5 907.3h1.5v1.5h-1.5zM917.4 874.1h0.8v0.8h-0.8zM920.5 907.5h0.9v0.9h-0.9zM918.2 851.9h1.3v1.3h-1.3zM950.9 925.4h1.5v1.5h-1.5zM921.7 882.3h1.9v1.9h-1.9zM946.5 928.1h1.2v1.2h-1.2zM918.6 890.2h2.0v2.0h-2.0zM911.9 863.7h1.0v1.0h-1.0zM938.6 904.4h1.6v1.6h-1.6zM930.8 886.1h1.3v1.3h-1.3zM927.0 893.4h1.2v1.2h-1.2zM932.0 890.8h1.1v1.1h-1.1zM909.5 844.6h1.7v1.7h-1.7zM937.4 882.7h0.9v0.9h-0.9zM937.7 938.9h1.6v1.6h-1.6zM918.3 867.2h1.8v1.8h-1.8zM902.1 847.0h1.7v1.7h-1.7zM916.1 859.7h1.5v1.5h-1.5zM907.4 846.1h1.8v1.8h-1.8zM931.1 883.4h1.0v1.0h-1.0zM911.7 879.3h1.5v1.5h-1.5zM929.3 893.1h0.8v0.8h-0.8zM906.0 844.6h1.0v1.0h-1.0zM943.0 893.2h1.6v1.6h-1.6zM916.4 865.6h1.6v1.6h-1.6zM941.9 900.9h1.9v1.9h-1.9zM952.1 943.1h1.8v1.8h-1.8zM920.8 882.7h1.3v1.3h-1.3zM914.5 859.6h0.8v0.8h-0.8zM922.2 902.7h1.1v1.1h-1.1zM928.2 878.3h1.9v1.9h-1.9zM951.5 915.8h1.9v1.9h-1.9zM916.2 880.9h1.8v1.8h-1.8zM924.1 899.9h1.8v1.8h-1.8zM938.5 877.6h1.5v1.5h-1.5zM936.0 902.4h1.5v1.5h-1.5zM902.3 849.0h1.4v1.4h-1.4zM919.3 854.3h1.0v1.0h-1.0zM940.3 928.9h0.8v0.8h-0.8zM918.7 898.9h1.5v1.5h-1.5zM939.6 910.3h0.9v0.9h-0.9zM939.9 936.0h1.6v1.6h-1.6zM920.3 892.7h0.8v0.8h-0.8zM939.9 889.8h1.6v1.6h-1.6zM920.8 875.9h1.7v1.7h-1.7zM921.2 880.5h1.4v1.4h-1.4zM926.4 891.7h1.2v1.2h-1.2zM951.8 933.9h1.7v1.7h-1.7zM926.0 892.6h0.9v0.9h-0.9zM922.6 854.6h1.7v1.7h-1.7zM943.5 908.8h1.8v1.8h-1.8zM951.8 928.4h0.8v0.8h-0.8zM928.3 905.3h1.4v1.4h-1.4zM922.7 874.9h1.7v1.7h-1.7zM906.5 869.1h1.5v1.5h-1.5zM938.1 905.3h1.3v1.3h-1.3z" fill="#f73a3a"/>
<path d="M591.0 356.2h1.3v1.3h-1.3zM682.4 227.6h0.8v0.8h-0.8zM736.4 354.1h1.5v1.5h-1.5zM719.1 359.4h1.3v1.3h-1.3zM750.0 426.3h1.0v1.0h-1.0zM589.9 269.5h1.0v1.0h-1.0zM692.7 277.2h0.8v0.8h-0.8zM698.9 248.8h1.0v1.0h-1.0zM761.0 384.7h1.0v1.0h-1.0zM600.9 268.3h1.0v1.0h-1.0zM772.5 406.0h1.4v1.4h-1.4zM751.7 264.3h1.0v1.0h-1.0zM605.9 357.4h1.0v1.0h-1.0zM572.4 351.0h1.0v1.0h-1.0zM720.1 429.4h1.6v1.6h-1.6zM755.2 246.0h0.9v0.9h-0.9zM586.2 319.0h1.2v1.2h-1.2zM684.0 321.2h0.8v0.8h-0.8zM612.7 244.0h1.2v1.2h-1.2zM573.3 252.0h0.8v0.8h-0.8zM623.7 287.6h1.4v1.4h-1.4zM722.0 369.7h1.1v1.1h-1.1zM762.8 378.3h1.0v1.0h-1.0zM619.0 325.9h0.9v0.9h-0.9zM623.1 300.4h0.8v0.8h-0.8zM547.2 277.5h0.9v0.9h-0.9zM729.5 274.5h0.9v0.9h-0.9zM582.7 275.0h1.4v1.4h-1.4zM687.4 215.1h0.8v0.8h-0.8zM713.3 383.7h1.3v1.3h-1.3zM667.0 218.2h0.8v0.8h-0.8zM658.2 286.9h0.9v0.9h-0.9zM709.3 286.6h1.2v1.2h-1.2zM631.1 234.6h1.0v1.0h-1.0zM639.8 295.9h0.8v0.8h-0.8zM671.3 368.1h1.5v1.5h-1.5zM613.5 273.6h1.1v1.1h-1.1zM751.6 424.2h1.6v1.6h-1.6zM706.7 287.3h0.9v0.9h-0.9zM676.6 356.6h1.1v1.1h-1.1zM695.7 214.6h1.0v1.0h-1.0zM784.8 371.9h1.5v1.5h-1.5zM602.5 220.5h1.1v1.1h-1.1zM671.7 262.9h1.6v1.6h-1.6zM669.4 258.5h1.0v1.0h-1.0zM581.3 224.9h0.8v0.8h-0.8zM731.8 219.9h1.3v1.3h-1.3zM750.7 319.2h0.8v0.8h-0.8zM732.1 434.8h1.1v1.1h-1.1zM642.2 274.3h1.1v1.1h-1.1zM697.2 293.3h1.1v1.1h-1.1zM612.0 232.9h0.9v0.9h-0.9zM722.7 322.8h1.0v1.0h-1.0zM711.4 242.0h1.5v1.5h-1.5zM755.3 438.8h0.8v0.8h-0.8zM694.4 365.7h1.0v1.0h-1.0zM708.3 262.5h0.8v0.8h-0.8zM714.9 257.9h1.0v1.0h-1.0zM623.8 352.5h1.1v1.1h-1.1zM638.3 337.1h0.9v0.9h-0.9zM666.2 225.2h1.5v1.5h-1.5zM752.5 257.4h1.0v1.0h-1.0zM675.0 307.1h0.9v0.9h-0.9zM695.3 348.4h1.3v1.3h-1.3zM578.0 318.8h0.9v0.9h-0.9zM742.3 442.8h0.9v0.9h-0.9zM734.3 251.4h1.5v1.5h-1.5zM597.9 277.2h1.2v1.2h-1.2zM574.7 343.6h1.3v1.3h-1.3zM702.8 309.8h1.4v1.4h-1.4zM554.4 249.0h1.3v1.3h-1.3zM546.7 300.0h0.9v0.9h-0.9zM601.8 356.7h1.3v1.3h-1.3zM763.0 406.0h1.1v1.1h-1.1zM686.0 298.9h1.3v1.3h-1.3zM557.0 343.8h1.1v1.1h-1.1zM748.5 255.3h1.0v1.0h-1.0zM731.6 327.4h1.4v1.4h-1.4zM719.1 421.6h1.4v1.4h-1.4zM612.1 371.2h1.6v1.6h-1.6zM765.1 215.8h1.0v1.0h-1.0zM731.8 293.1h1.5v1.5h-1.5zM773.7 446.2h0.9v0.9h-0.9zM734.6 262.8h1.1v1.1h-1.1zM550.5 327.6h1.6v1.6h-1.6zM547.9 245.2h1.0v1.0h-1.0zM548.7 315.2h1.9v1.9h-1.9zM546.9 237.5h2.3v2.3h-2.3zM550.2 273.2h1.6v1.6h-1.6zM549.3 277.0h1.2v1.2h-1.2zM557.6 319.7h1.1v1.1h-1.1zM549.7 271.9h1.7v1.7h-1.7zM547.3 336.6h2.0v2.0h-2.0zM549.8 306.8h1.6v1.6h-1.6zM552.5 298.6h2.3v2.3h-2.3zM542.7 241.5h2.0v2.0h-2.0zM551.2 344.2h1.4v1.4h-1.4zM542.9 235.3h2.0v2.0h-2.0zM548.5 267.6h2.3v2.3h-2.3zM552.5 315.1h1.7v1.7h-1.7zM546.8 331.6h1.4v1.4h-1.4zM547.8 266.7h1.7v1.7h-1.7zM549.0 288.2h2.2v2.2h-2.2zM551.3 288.0h1.7v1.7h-1.7zM557.9 329.8h1.7v1.7h-1.7zM543.2 236.7h1.0v1.0h-1.0zM552.9 307.8h2.4v2.4h-2.4zM549.6 286.2h2.0v2.0h-2.0zM550.2 267.7h1.7v1.7h-1.7zM551.5 322.7h1.6v1.6h-1.6zM549.2 331.7h1.6v1.6h-1.6zM546.8 272.1h1.8v1.8h-1.8zM556.1 322.0h2.2v2.2h-2.2zM546.3 295.6h2.3v2.3h-2.3zM545.1 267.6h1.6v1.6h-1.6zM541.4 271.2h2.4v2.4h-2.4zM553.8 308.2h1.1v1.1h-1.1zM552.0 288.2h1.8v1.8h-1.8zM553.9 313.4h1.5v1.5h-1.5zM550.4 264.0h1.6v1.6h-1.6zM552.9 307.7h1.1v1.1h-1.1zM546.1 249.3h1.8v1.8h-1.8zM549.7 291.3h2.4v2.4h-2.4zM542.5 239.4h1.2v1.2h-1.2zM552.1 345.0h1.4v1.4h-1.4zM555.4 315.4h1.4v1.4h-1.4zM555.3 287.1h2.2v2.2h-2.2zM545.2 288.6h1.7v1.7h-1.7zM547.1 249.3h2.0v2.0h-2.0zM549.3 260.0h1.2v1.2h-1.2zM548.2 270.7h2.2v2.2h-2.2zM540.0 256.1h1.3v1.3h-1.3zM543.0 251.7h2.1v2.1h-2.1zM547.9 273.8h1.7v1.7h-1.7zM555.2 329.5h1.7v1.7h-1.7zM550.4 311.6h1.8v1.8h-1.8zM548.8 340.3h2.2v2.2h-2.2zM571.6 297.6h1.9v1.9h-1.9zM573.2 240.0h2.3v2.3h-2.3zM573.8 284.1h1.0v1.0h-1.0zM568.5 253.6h1.2v1.2h-1.2zM570.1 296.8h1.7v1.7h-1.7zM570.5 242.0h1.4v1.4h-1.4zM570.0 250.1h1.5v1.5h-1.5zM567.6 235.0h1.3v1.3h-1.3zM571.6 296.0h1.5v1.5h-1.5zM566.9 275.1h2.1v2.1h-2.1zM568.4 282.7h2.3v2.3h-2.3zM570.1 255.9h1.9v1.9h-1.9zM566.1 263.1h1.4v1.4h-1.4zM573.6 284.9h1.3v1.3h-1.3zM572.0 293.9h1.8v1.8h-1.8zM571.8 292.1h2.4v2.4h-2.4zM568.3 264.9h1.5v1.5h-1.5zM572.5 273.2h2.2v2.2h-2.2zM571.6 278.8h2.2v2.2h-2.2zM562.9 274.3h1.8v1.8h-1.8zM566.8 290.0h1.6v1.6h-1.6zM568.6 250.7h1.7v1.7h-1.7zM570.2 259.3h2.2v2.2h-2.2zM583.3 224.9h1.4v1.4h-1.4zM588.0 220.5h1.6v1.6h-1.6zM587.1 219.9h2.5v2.5h-2.5zM585.8 217.3h1.7v1.7h-1.7zM587.1 221.9h1.6v1.6h-1.6zM578.2 230.4h2.2v2.2h-2.2zM586.7 218.7h2.3v2.3h-2.3zM590.6 218.9h1.6v1.6h-1.6zM591.3 211.5h2.3v2.3h-2.3zM584.0 223.8h1.7v1.7h-1.7zM594.5 216.5h1.1v1.1h-1.1zM589.4 218.8h2.6v2.6h-2.6zM575.3 228.3h2.1v2.1h-2.1zM577.9 228.2h1.2v1.2h-1.2zM584.7 217.8h2.2v2.2h-2.2zM574.2 230.7h1.1v1.1h-1.1zM575.1 227.5h2.5v2.5h-2.5zM590.2 216.6h1.9v1.9h-1.9zM573.8 226.4h2.5v2.5h-2.5zM581.1 221.1h1.5v1.5h-1.5zM584.5 220.8h1.7v1.7h-1.7zM583.3 221.4h1.3v1.3h-1.3zM582.1 224.5h2.4v2.4h-2.4zM587.5 217.2h2.6v2.6h-2.6zM577.4 223.8h2.4v2.4h-2.4zM586.5 220.1h2.1v2.1h-2.1zM612.7 253.5h1.3v1.3h-1.3zM610.5 253.7h1.6v1.6h-1.6zM641.6 234.1h1.0v1.0h-1.0zM623.5 244.9h1.6v1.6h-1.6zM600.9 259.5h1.0v1.0h-1.0zM638.7 239.8h1.5v1.5h-1.5zM622.7 246.8h1.3v1.3h-1.3zM619.7 248.3h1.3v1.3h-1.3zM612.4 255.5h1.2v1.2h-1.2zM611.5 249.2h1.6v1.6h-1.6zM648.4 235.6h1.2v1.2h-1.2zM642.6 236.4h1.7v1.7h-1.7zM607.2 257.1h1.6v1.6h-1.6zM641.8 238.7h1.2v1.2h-1.2zM631.5 237.9h1.6v1.6h-1.6zM620.4 242.5h1.5v1.5h-1.5zM638.3 236.7h2.0v2.0h-2.0zM688.7 265.7h2.1v2.1h-2.1zM704.7 214.7h2.2v2.2h-2.2zM686.9 283.9h1.6v1.6h-1.6zM694.2 255.2h1.7v1.7h-1.7zM686.9 287.8h1.3v1.3h-1.3zM700.6 228.1h1.5v1.5h-1.5zM701.8 226.7h1.1v1.1h-1.1zM705.9 221.1h1.5v1.5h-1.5zM698.3 251.9h1.8v1.8h-1.8zM692.9 257.4h2.2v2.2h-2.2zM690.5 277.1h1.7v1.7h-1.7zM688.8 278.3h1.9v1.9h-1.9zM704.3 227.4h1.6v1.6h-1.6zM686.0 301.4h2.0v2.0h-2.0zM701.4 241.5h2.0v2.0h-2.0zM686.9 287.6h1.3v1.3h-1.3zM695.9 249.7h1.2v1.2h-1.2zM705.2 222.1h1.3v1.3h-1.3zM697.8 236.6h1.7v1.7h-1.7zM691.3 253.5h1.4v1.4h-1.4zM573.5 350.4h1.7v1.7h-1.7zM661.8 347.1h2.2v2.2h-2.2zM583.7 307.5h2.2v2.2h-2.2zM577.4 357.9h2.1v2.1h-2.1zM577.4 358.7h1.7v1.7h-1.7zM642.5 331.8h1.7v1.7h-1.7zM606.9 367.7h1.5v1.5h-1.5zM650.5 315.3h2.5v2.5h-2.5zM678.1 342.3h2.1v2.1h-2.1zM621.3 354.5h1.4v1.4h-1.4zM635.4 373.4h2.0v2.0h-2.0zM615.0 338.2h1.4v1.4h-1.4zM644.5 367.0h2.0v2.0h-2.0zM574.6 343.6h1.2v1.2h-1.2zM614.8 371.6h2.4v2.4h-2.4zM637.0 345.6h1.2v1.2h-1.2zM635.9 367.2h1.9v1.9h-1.9zM648.1 319.9h2.0v2.0h-2.0zM614.7 383.0h2.6v2.6h-2.6zM671.4 354.1h1.3v1.3h-1.3zM649.7 337.0h2.3v2.3h-2.3zM687.6 325.4h2.5v2.5h-2.5zM662.5 360.4h1.6v1.6h-1.6zM658.1 371.1h1.5v1.5h-1.5zM679.7 335.6h2.0v2.0h-2.0zM623.2 342.5h2.5v2.5h-2.5zM583.6 347.0h2.4v2.4h-2.4zM620.9 378.9h2.4v2.4h-2.4zM640.5 357.5h2.5v2.5h-2.5zM662.3 347.4h1.7v1.7h-1.7zM672.2 340.0h1.9v1.9h-1.9zM605.8 320.7h1.1v1.1h-1.1zM595.1 374.1h1.9v1.9h-1.9zM660.2 349.1h1.6v1.6h-1.6zM590.4 357.1h2.2v2.2h-2.2zM587.7 359.8h2.1v2.1h-2.1zM683.2 327.6h1.0v1.0h-1.0zM614.7 348.3h1.3v1.3h-1.3zM598.2 371.3h2.3v2.3h-2.3zM634.5 311.4h1.7v1.7h-1.7zM624.4 324.0h1.3v1.3h-1.3zM639.7 337.3h1.3v1.3h-1.3zM596.6 322.6h1.9v1.9h-1.9zM654.3 375.3h1.8v1.8h-1.8zM631.6 349.8h2.0v2.0h-2.0zM633.5 334.0h2.1v2.1h-2.1zM602.4 355.2h2.1v2.1h-2.1zM602.5 379.1h1.4v1.4h-1.4zM595.2 368.6h1.3v1.3h-1.3zM645.0 369.8h1.8v1.8h-1.8zM627.9 309.4h2.6v2.6h-2.6zM580.1 309.7h2.1v2.1h-2.1zM640.2 338.7h1.7v1.7h-1.7zM657.6 377.9h2.2v2.2h-2.2zM612.3 353.3h1.6v1.6h-1.6zM593.8 337.2h2.1v2.1h-2.1zM598.2 322.1h2.5v2.5h-2.5zM649.8 355.8h2.0v2.0h-2.0zM618.8 312.1h1.2v1.2h-1.2zM619.1 361.4h1.2v1.2h-1.2zM621.9 331.1h2.0v2.0h-2.0zM629.2 309.8h1.7v1.7h-1.7zM618.8 339.9h2.5v2.5h-2.5zM579.7 318.9h2.2v2.2h-2.2zM631.2 327.0h1.3v1.3h-1.3zM618.8 310.2h2.6v2.6h-2.6zM658.2 343.7h1.0v1.0h-1.0zM670.0 345.7h1.4v1.4h-1.4zM682.6 317.2h2.6v2.6h-2.6zM613.4 334.6h1.5v1.5h-1.5zM604.8 338.6h1.9v1.9h-1.9zM590.1 311.7h1.8v1.8h-1.8zM601.6 314.2h1.9v1.9h-1.9zM601.9 331.1h1.8v1.8h-1.8zM579.9 363.0h2.0v2.0h-2.0zM660.7 368.0h1.0v1.0h-1.0zM669.3 330.6h2.1v2.1h-2.1zM580.5 349.5h2.5v2.5h-2.5zM649.5 316.9h1.0v1.0h-1.0zM591.9 307.8h2.0v2.0h-2.0zM636.4 316.0h2.5v2.5h-2.5zM582.7 349.8h1.3v1.3h-1.3zM642.0 361.6h1.0v1.0h-1.0zM599.8 324.7h2.0v2.0h-2.0zM677.2 326.3h1.5v1.5h-1.5zM632.3 316.8h1.2v1.2h-1.2zM640.4 330.8h2.1v2.1h-2.1zM660.3 318.9h1.5v1.5h-1.5zM584.4 306.0h1.3v1.3h-1.3zM685.4 327.3h1.3v1.3h-1.3zM686.5 348.9h1.0v1.0h-1.0zM625.4 354.0h2.4v2.4h-2.4zM643.9 338.7h1.5v1.5h-1.5zM611.8 353.7h2.4v2.4h-2.4zM649.3 370.5h1.8v1.8h-1.8zM618.9 330.9h2.5v2.5h-2.5zM574.7 350.2h1.7v1.7h-1.7zM597.2 325.6h1.5v1.5h-1.5zM595.2 346.5h1.8v1.8h-1.8zM655.2 368.3h1.7v1.7h-1.7zM605.0 323.5h1.7v1.7h-1.7zM597.3 349.8h2.2v2.2h-2.2zM677.6 357.6h1.2v1.2h-1.2zM612.6 342.9h1.3v1.3h-1.3zM684.7 361.9h1.6v1.6h-1.6zM589.6 331.1h2.4v2.4h-2.4zM573.6 327.5h1.8v1.8h-1.8zM619.1 376.1h1.6v1.6h-1.6zM634.4 328.3h1.6v1.6h-1.6zM614.9 369.8h1.3v1.3h-1.3zM622.1 307.9h2.4v2.4h-2.4zM594.3 312.9h1.6v1.6h-1.6zM629.3 367.2h1.9v1.9h-1.9zM676.1 343.8h1.0v1.0h-1.0zM625.9 356.9h1.9v1.9h-1.9zM676.4 369.8h2.6v2.6h-2.6zM613.0 364.4h1.4v1.4h-1.4zM668.1 321.8h2.2v2.2h-2.2zM627.6 348.6h2.3v2.3h-2.3zM632.7 339.9h2.1v2.1h-2.1zM692.4 352.1h2.6v2.6h-2.6zM592.6 311.7h1.8v1.8h-1.8zM606.2 331.3h1.9v1.9h-1.9zM586.7 324.2h2.0v2.0h-2.0zM618.9 380.7h2.0v2.0h-2.0zM686.4 356.9h1.6v1.6h-1.6zM649.5 368.1h1.3v1.3h-1.3zM647.5 347.6h1.7v1.7h-1.7zM681.2 320.5h1.1v1.1h-1.1zM660.5 371.0h1.7v1.7h-1.7zM581.1 328.2h1.1v1.1h-1.1zM684.4 355.1h1.3v1.3h-1.3zM613.5 304.6h1.9v1.9h-1.9zM617.0 359.1h1.6v1.6h-1.6zM582.3 361.7h2.4v2.4h-2.4zM686.8 350.0h2.6v2.6h-2.6zM698.0 348.1h1.3v1.3h-1.3zM635.2 328.7h1.6v1.6h-1.6zM649.4 318.9h1.4v1.4h-1.4zM641.8 323.4h2.2v2.2h-2.2zM665.7 369.6h1.8v1.8h-1.8zM601.6 366.7h2.0v2.0h-2.0zM620.2 364.7h1.5v1.5h-1.5zM654.3 316.0h1.0v1.0h-1.0zM613.9 354.8h2.0v2.0h-2.0zM602.5 372.8h1.4v1.4h-1.4zM677.5 368.9h1.4v1.4h-1.4zM638.6 324.6h2.1v2.1h-2.1zM699.0 331.4h1.2v1.2h-1.2zM624.3 313.8h2.1v2.1h-2.1zM630.3 334.5h1.4v1.4h-1.4zM631.7 370.7h1.6v1.6h-1.6zM573.9 318.7h2.5v2.5h-2.5zM661.6 346.4h2.0v2.0h-2.0zM629.4 370.6h2.1v2.1h-2.1zM664.4 339.4h2.3v2.3h-2.3zM698.8 331.3h1.8v1.8h-1.8zM640.8 313.1h2.5v2.5h-2.5zM638.4 366.9h1.3v1.3h-1.3zM655.8 341.0h1.6v1.6h-1.6zM599.4 337.2h1.0v1.0h-1.0zM604.3 370.6h1.9v1.9h-1.9zM674.9 324.8h2.4v2.4h-2.4zM661.6 369.3h1.7v1.7h-1.7zM594.7 349.1h1.3v1.3h-1.3zM596.9 303.3h2.2v2.2h-2.2zM668.1 319.4h1.9v1.9h-1.9zM620.2 340.8h1.1v1.1h-1.1zM636.1 321.3h1.5v1.5h-1.5zM639.1 337.5h1.7v1.7h-1.7zM690.3 334.7h2.1v2.1h-2.1zM632.3 348.9h1.4v1.4h-1.4zM654.7 353.7h2.3v2.3h-2.3zM587.7 325.5h2.1v2.1h-2.1zM597.6 354.6h2.1v2.1h-2.1zM573.0 337.5h1.5v1.5h-1.5zM619.8 315.3h1.6v1.6h-1.6zM657.2 370.8h1.6v1.6h-1.6zM630.0 377.8h1.5v1.5h-1.5zM677.0 392.6h1.5v1.5h-1.5zM626.3 375.2h1.1v1.1h-1.1zM674.3 389.0h1.8v1.8h-1.8zM743.7 416.7h2.6v2.6h-2.6zM615.5 357.3h1.7v1.7h-1.7zM580.2 338.2h1.8v1.8h-1.8zM649.4 386.5h2.2v2.2h-2.2zM785.4 415.1h1.7v1.7h-1.7zM614.3 347.0h2.5v2.5h-2.5zM647.7 360.6h2.4v2.4h-2.4zM589.7 350.9h1.4v1.4h-1.4zM574.5 339.2h1.9v1.9h-1.9zM772.7 438.8h1.0v1.0h-1.0zM683.7 396.6h1.3v1.3h-1.3zM577.9 351.2h2.5v2.5h-2.5zM734.1 415.2h2.0v2.0h-2.0zM767.5 442.7h2.2v2.2h-2.2zM611.4 365.4h1.6v1.6h-1.6zM746.1 405.6h2.3v2.3h-2.3zM701.1 393.5h1.4v1.4h-1.4zM758.3 423.6h2.5v2.5h-2.5zM654.7 378.5h2.5v2.5h-2.5zM557.1 344.5h1.1v1.1h-1.1zM740.6 417.7h2.3v2.3h-2.3zM760.1 424.3h2.2v2.2h-2.2zM717.1 379.9h1.5v1.5h-1.5zM767.1 442.3h2.1v2.1h-2.1zM761.0 422.7h2.1v2.1h-2.1zM637.8 382.8h2.1v2.1h-2.1zM666.8 379.1h1.6v1.6h-1.6zM761.8 432.3h2.0v2.0h-2.0zM673.4 383.0h2.5v2.5h-2.5zM741.4 438.9h1.0v1.0h-1.0zM739.1 429.8h1.3v1.3h-1.3zM663.4 385.4h2.3v2.3h-2.3zM623.9 367.6h2.6v2.6h-2.6zM611.1 355.3h1.6v1.6h-1.6zM764.7 441.6h1.7v1.7h-1.7zM685.2 389.6h2.1v2.1h-2.1zM718.8 416.3h2.0v2.0h-2.0zM645.2 374.0h2.6v2.6h-2.6zM761.0 424.3h2.4v2.4h-2.4zM720.7 416.6h1.9v1.9h-1.9zM727.4 404.2h1.9v1.9h-1.9zM637.8 362.3h1.3v1.3h-1.3zM646.5 376.3h1.4v1.4h-1.4zM659.2 388.9h2.2v2.2h-2.2zM686.7 383.6h1.8v1.8h-1.8zM687.3 399.6h1.2v1.2h-1.2zM593.9 333.6h2.2v2.2h-2.2zM586.0 340.6h2.3v2.3h-2.3zM764.7 442.1h1.8v1.8h-1.8zM789.2 441.3h2.2v2.2h-2.2zM570.3 328.3h2.0v2.0h-2.0zM713.6 403.5h1.2v1.2h-1.2zM756.9 433.9h2.1v2.1h-2.1zM731.7 422.7h1.3v1.3h-1.3zM698.5 390.0h1.6v1.6h-1.6zM727.5 397.0h2.2v2.2h-2.2zM698.7 386.6h2.0v2.0h-2.0zM665.5 384.8h2.4v2.4h-2.4zM603.8 350.8h1.1v1.1h-1.1zM700.2 402.6h2.5v2.5h-2.5zM732.9 411.5h1.5v1.5h-1.5zM621.7 373.2h1.3v1.3h-1.3zM651.1 363.3h1.5v1.5h-1.5zM710.2 391.3h1.4v1.4h-1.4zM631.3 372.9h1.6v1.6h-1.6zM575.5 342.7h2.3v2.3h-2.3zM744.8 405.9h2.4v2.4h-2.4zM590.0 344.1h1.4v1.4h-1.4zM664.5 377.6h1.3v1.3h-1.3zM600.3 358.3h1.8v1.8h-1.8zM734.7 402.7h1.1v1.1h-1.1zM562.6 335.7h2.0v2.0h-2.0zM721.8 395.0h1.2v1.2h-1.2zM639.2 372.2h1.6v1.6h-1.6zM692.8 395.9h2.3v2.3h-2.3zM760.1 432.3h2.2v2.2h-2.2zM743.5 424.6h1.8v1.8h-1.8zM572.1 326.5h1.9v1.9h-1.9zM587.1 337.0h2.3v2.3h-2.3zM774.5 433.7h1.4v1.4h-1.4zM583.2 345.1h1.3v1.3h-1.3zM782.8 425.9h1.5v1.5h-1.5zM673.7 378.3h2.4v2.4h-2.4zM570.5 324.2h1.8v1.8h-1.8zM688.7 410.5h2.5v2.5h-2.5zM616.1 356.6h1.1v1.1h-1.1zM638.8 370.8h2.1v2.1h-2.1zM690.5 386.4h2.1v2.1h-2.1zM690.5 401.5h1.2v1.2h-1.2zM713.3 403.2h2.0v2.0h-2.0zM686.1 395.3h2.0v2.0h-2.0zM791.7 440.9h1.8v1.8h-1.8zM566.9 334.9h1.8v1.8h-1.8zM618.0 357.2h1.2v1.2h-1.2zM656.7 379.4h2.4v2.4h-2.4zM558.0 332.2h2.2v2.2h-2.2zM740.9 404.9h2.6v2.6h-2.6zM597.5 344.5h2.1v2.1h-2.1zM733.4 419.3h2.2v2.2h-2.2zM758.4 442.0h2.2v2.2h-2.2zM598.8 347.5h2.2v2.2h-2.2zM710.7 395.6h1.4v1.4h-1.4zM751.2 418.3h1.8v1.8h-1.8zM582.7 352.2h2.1v2.1h-2.1zM701.9 398.2h1.0v1.0h-1.0zM642.7 384.4h2.3v2.3h-2.3zM651.7 372.6h1.9v1.9h-1.9zM589.4 355.4h2.0v2.0h-2.0zM716.7 401.9h1.9v1.9h-1.9zM771.4 439.4h1.9v1.9h-1.9zM788.1 430.2h2.1v2.1h-2.1zM792.0 434.0h1.3v1.3h-1.3zM661.9 392.3h1.4v1.4h-1.4zM593.2 351.9h1.8v1.8h-1.8zM637.3 388.4h1.7v1.7h-1.7zM675.2 384.3h1.3v1.3h-1.3zM566.7 344.9h2.1v2.1h-2.1zM776.5 446.1h1.1v1.1h-1.1zM702.3 397.8h1.2v1.2h-1.2zM618.3 374.8h1.2v1.2h-1.2zM756.6 426.5h1.0v1.0h-1.0zM714.7 400.7h1.4v1.4h-1.4zM694.7 386.4h1.7v1.7h-1.7zM609.6 359.5h1.4v1.4h-1.4zM753.5 419.8h1.7v1.7h-1.7zM588.5 357.6h2.1v2.1h-2.1zM584.7 347.1h1.1v1.1h-1.1zM557.7 333.9h2.0v2.0h-2.0zM744.3 422.4h2.4v2.4h-2.4zM569.9 334.3h2.5v2.5h-2.5zM592.1 347.6h2.1v2.1h-2.1zM767.7 428.2h2.4v2.4h-2.4zM726.5 409.9h1.8v1.8h-1.8zM572.7 356.1h1.4v1.4h-1.4zM636.3 370.3h2.4v2.4h-2.4zM568.2 326.2h1.8v1.8h-1.8zM627.7 353.8h2.0v2.0h-2.0zM625.2 353.9h2.2v2.2h-2.2zM602.9 350.6h1.9v1.9h-1.9zM597.2 329.6h2.3v2.3h-2.3zM775.7 426.4h2.3v2.3h-2.3zM714.2 403.1h1.7v1.7h-1.7zM747.7 342.3h1.4v1.4h-1.4zM748.7 341.3h1.9v1.9h-1.9zM699.5 331.6h1.5v1.5h-1.5zM708.7 312.5h1.5v1.5h-1.5zM744.1 337.4h2.2v2.2h-2.2zM705.2 316.6h1.2v1.2h-1.2zM770.5 351.8h1.6v1.6h-1.6zM724.0 321.2h1.5v1.5h-1.5zM739.7 337.9h1.1v1.1h-1.1zM716.9 323.0h2.0v2.0h-2.0zM761.8 338.0h2.0v2.0h-2.0zM759.9 330.8h1.6v1.6h-1.6zM728.1 327.5h2.3v2.3h-2.3zM763.8 335.1h1.8v1.8h-1.8zM712.1 330.2h2.0v2.0h-2.0zM737.9 328.5h1.9v1.9h-1.9zM729.4 325.2h1.3v1.3h-1.3zM702.0 322.1h1.1v1.1h-1.1zM724.9 321.5h2.3v2.3h-2.3zM777.9 341.9h2.2v2.2h-2.2zM790.3 379.5h1.9v1.9h-1.9zM760.0 311.8h2.4v2.4h-2.4zM789.8 356.4h2.2v2.2h-2.2zM783.9 364.5h1.5v1.5h-1.5zM780.0 326.1h1.4v1.4h-1.4zM746.4 297.9h1.2v1.2h-1.2zM782.3 344.8h2.3v2.3h-2.3zM793.5 392.2h2.0v2.0h-2.0zM787.0 413.2h2.3v2.3h-2.3zM782.2 379.2h1.2v1.2h-1.2zM791.0 382.8h1.1v1.1h-1.1zM767.0 315.2h1.6v1.6h-1.6zM761.4 295.9h1.2v1.2h-1.2zM790.0 406.4h1.1v1.1h-1.1zM757.9 299.0h1.3v1.3h-1.3zM770.9 306.0h2.0v2.0h-2.0zM754.0 297.2h1.7v1.7h-1.7zM783.9 342.4h1.4v1.4h-1.4zM761.6 309.4h1.8v1.8h-1.8zM792.3 375.4h1.4v1.4h-1.4zM779.7 360.7h2.0v2.0h-2.0zM795.9 401.1h1.2v1.2h-1.2zM742.1 303.7h1.2v1.2h-1.2zM788.8 369.0h1.4v1.4h-1.4zM854.8 743.8h1.3v1.3h-1.3zM852.0 807.8h1.3v1.3h-1.3zM856.9 717.7h2.2v2.2h-2.2zM835.1 822.7h2.6v2.6h-2.6zM886.9 823.6h1.4v1.4h-1.4zM847.6 829.8h2.7v2.7h-2.7zM858.2 731.2h1.6v1.6h-1.6zM898.8 837.8h1.9v1.9h-1.9zM844.4 767.5h2.8v2.8h-2.8zM905.3 822.9h2.7v2.7h-2.7zM843.7 781.1h2.2v2.2h-2.2zM870.2 821.4h1.3v1.3h-1.3zM849.7 769.4h1.3v1.3h-1.3zM835.6 806.4h2.1v2.1h-2.1zM928.0 816.9h2.0v2.0h-2.0zM860.1 713.7h2.0v2.0h-2.0zM869.9 824.0h1.4v1.4h-1.4zM848.1 744.1h2.4v2.4h-2.4zM858.0 745.6h1.5v1.5h-1.5zM942.3 799.3h2.7v2.7h-2.7zM859.8 722.4h2.4v2.4h-2.4zM920.8 819.8h1.9v1.9h-1.9zM841.0 795.3h2.3v2.3h-2.3zM913.1 831.3h1.8v1.8h-1.8zM837.3 744.5h1.7v1.7h-1.7zM854.2 776.0h1.6v1.6h-1.6zM847.0 752.9h1.4v1.4h-1.4zM850.3 733.9h2.6v2.6h-2.6zM872.2 819.2h2.7v2.7h-2.7zM930.4 812.5h2.0v2.0h-2.0zM866.5 712.6h2.6v2.6h-2.6zM909.0 821.6h2.6v2.6h-2.6zM918.3 821.8h1.8v1.8h-1.8zM922.7 827.4h1.8v1.8h-1.8zM859.4 745.1h2.6v2.6h-2.6zM880.1 822.5h1.7v1.7h-1.7zM855.8 775.0h1.7v1.7h-1.7zM887.4 837.5h1.3v1.3h-1.3zM856.7 823.5h1.7v1.7h-1.7zM942.7 807.1h2.0v2.0h-2.0zM840.5 756.0h1.5v1.5h-1.5zM851.5 764.9h1.5v1.5h-1.5zM843.8 797.8h2.4v2.4h-2.4zM874.9 840.6h2.3v2.3h-2.3zM898.7 836.6h2.7v2.7h-2.7zM836.7 799.7h2.3v2.3h-2.3zM857.1 794.8h2.1v2.1h-2.1zM855.5 774.9h2.5v2.5h-2.5zM870.8 722.1h1.7v1.7h-1.7zM895.4 822.9h1.4v1.4h-1.4zM851.6 812.9h2.3v2.3h-2.3zM853.8 750.4h1.3v1.3h-1.3zM849.7 790.7h1.8v1.8h-1.8zM860.1 713.6h1.9v1.9h-1.9zM841.0 738.4h2.6v2.6h-2.6zM899.9 832.6h1.5v1.5h-1.5zM846.7 796.4h1.7v1.7h-1.7zM840.3 827.0h1.4v1.4h-1.4zM859.9 749.1h1.8v1.8h-1.8zM885.6 829.1h2.4v2.4h-2.4zM842.0 759.2h2.5v2.5h-2.5zM882.4 825.0h1.6v1.6h-1.6zM941.3 803.4h2.8v2.8h-2.8zM942.0 803.5h2.5v2.5h-2.5zM871.2 842.9h2.4v2.4h-2.4zM878.6 838.1h2.6v2.6h-2.6zM839.3 829.4h2.5v2.5h-2.5zM836.5 764.8h1.6v1.6h-1.6zM928.4 817.1h1.2v1.2h-1.2zM849.2 778.7h2.3v2.3h-2.3zM881.4 837.1h1.9v1.9h-1.9zM848.4 789.9h1.6v1.6h-1.6zM857.2 807.6h2.4v2.4h-2.4zM841.1 804.9h2.3v2.3h-2.3zM852.0 777.0h2.0v2.0h-2.0zM837.0 770.1h2.4v2.4h-2.4zM885.5 827.8h1.7v1.7h-1.7zM835.7 813.5h2.0v2.0h-2.0zM892.9 839.6h2.6v2.6h-2.6zM842.1 742.5h2.2v2.2h-2.2zM884.4 834.3h2.8v2.8h-2.8zM858.7 714.1h2.6v2.6h-2.6zM868.2 835.4h1.8v1.8h-1.8zM860.8 718.9h1.4v1.4h-1.4zM850.2 803.9h1.8v1.8h-1.8zM915.5 821.7h1.9v1.9h-1.9zM854.0 815.8h2.6v2.6h-2.6zM847.4 827.2h2.7v2.7h-2.7zM856.3 804.5h2.3v2.3h-2.3zM847.6 790.6h1.7v1.7h-1.7zM858.8 763.7h2.4v2.4h-2.4zM866.5 835.6h1.9v1.9h-1.9zM835.1 784.8h1.2v1.2h-1.2zM837.0 774.0h2.2v2.2h-2.2zM853.5 741.9h1.9v1.9h-1.9zM904.4 837.7h2.8v2.8h-2.8zM897.5 819.5h2.0v2.0h-2.0zM867.0 717.4h1.9v1.9h-1.9zM847.3 811.8h1.9v1.9h-1.9zM863.2 834.9h1.3v1.3h-1.3zM865.1 829.4h2.1v2.1h-2.1zM887.3 834.6h2.0v2.0h-2.0zM854.7 766.9h1.9v1.9h-1.9zM856.7 744.8h1.3v1.3h-1.3zM892.8 834.1h2.3v2.3h-2.3zM888.5 827.2h1.4v1.4h-1.4zM940.6 817.2h1.7v1.7h-1.7zM862.1 757.4h1.8v1.8h-1.8zM942.1 814.8h1.5v1.5h-1.5zM930.7 818.4h1.6v1.6h-1.6zM926.7 820.0h2.7v2.7h-2.7zM839.2 815.0h1.9v1.9h-1.9zM920.2 812.2h2.3v2.3h-2.3zM851.7 736.9h2.6v2.6h-2.6zM946.8 807.2h1.9v1.9h-1.9zM860.1 732.1h2.0v2.0h-2.0zM846.3 774.9h1.5v1.5h-1.5zM853.4 781.2h2.3v2.3h-2.3zM925.8 826.0h1.6v1.6h-1.6zM846.7 818.9h1.4v1.4h-1.4zM837.6 761.8h2.3v2.3h-2.3zM936.8 818.8h1.8v1.8h-1.8zM843.2 749.7h2.1v2.1h-2.1zM858.3 785.2h1.5v1.5h-1.5zM924.4 823.5h2.8v2.8h-2.8zM858.0 839.0h1.9v1.9h-1.9zM838.7 813.1h1.4v1.4h-1.4zM865.0 733.5h2.7v2.7h-2.7zM899.5 827.2h1.3v1.3h-1.3zM940.4 807.2h1.9v1.9h-1.9zM855.2 776.5h2.4v2.4h-2.4zM887.7 819.3h1.6v1.6h-1.6zM851.3 734.5h1.6v1.6h-1.6zM845.7 781.3h1.8v1.8h-1.8zM912.2 818.4h1.9v1.9h-1.9zM840.3 771.4h2.7v2.7h-2.7zM901.3 825.8h2.4v2.4h-2.4zM853.9 798.8h1.4v1.4h-1.4zM937.7 805.0h2.7v2.7h-2.7zM909.0 829.3h2.4v2.4h-2.4zM933.5 807.9h2.1v2.1h-2.1zM915.0 822.8h2.2v2.2h-2.2zM855.1 813.1h1.5v1.5h-1.5zM855.4 829.5h2.2v2.2h-2.2zM872.6 835.8h1.7v1.7h-1.7zM864.2 816.9h1.5v1.5h-1.5zM911.2 814.8h2.5v2.5h-2.5zM861.4 723.3h1.4v1.4h-1.4zM937.7 822.1h1.5v1.5h-1.5zM836.7 825.2h1.8v1.8h-1.8zM896.4 819.0h2.1v2.1h-2.1zM892.2 822.0h2.5v2.5h-2.5zM860.2 729.4h2.0v2.0h-2.0zM853.1 728.2h2.4v2.4h-2.4zM945.0 809.8h2.8v2.8h-2.8zM853.3 734.7h1.7v1.7h-1.7zM860.2 767.1h1.6v1.6h-1.6zM834.6 801.0h1.3v1.3h-1.3zM858.6 717.6h2.3v2.3h-2.3zM860.2 829.0h1.6v1.6h-1.6zM856.8 779.0h2.7v2.7h-2.7zM926.1 818.6h1.9v1.9h-1.9zM897.9 824.4h1.6v1.6h-1.6zM873.9 722.5h2.1v2.1h-2.1zM864.1 725.1h1.5v1.5h-1.5zM866.0 830.3h2.2v2.2h-2.2zM837.9 815.6h1.5v1.5h-1.5zM885.8 824.4h2.0v2.0h-2.0zM855.7 798.9h1.5v1.5h-1.5zM851.4 724.1h2.0v2.0h-2.0zM872.4 839.9h2.2v2.2h-2.2zM902.3 837.1h2.0v2.0h-2.0zM915.1 825.4h2.7v2.7h-2.7zM848.0 759.8h1.9v1.9h-1.9zM917.9 817.5h2.3v2.3h-2.3zM869.2 719.1h1.7v1.7h-1.7zM846.0 791.1h1.6v1.6h-1.6zM937.7 803.1h2.5v2.5h-2.5zM860.0 819.4h2.4v2.4h-2.4zM848.5 835.3h2.1v2.1h-2.1zM850.4 739.2h2.0v2.0h-2.0zM870.5 739.3h1.4v1.4h-1.4zM853.9 773.5h1.9v1.9h-1.9zM874.2 716.5h2.0v2.0h-2.0zM847.4 774.6h2.2v2.2h-2.2zM903.8 832.0h2.4v2.4h-2.4zM897.2 829.5h2.2v2.2h-2.2zM870.0 726.8h2.0v2.0h-2.0zM861.3 715.7h2.7v2.7h-2.7zM852.5 722.1h2.1v2.1h-2.1zM871.8 818.9h1.2v1.2h-1.2zM940.7 798.8h2.8v2.8h-2.8zM889.2 830.4h2.1v2.1h-2.1zM899.8 835.3h2.6v2.6h-2.6zM906.6 827.9h1.5v1.5h-1.5zM941.5 798.8h2.2v2.2h-2.2zM870.8 820.6h1.2v1.2h-1.2zM870.4 840.1h1.8v1.8h-1.8zM855.3 810.1h2.8v2.8h-2.8zM838.4 805.0h1.4v1.4h-1.4zM885.3 837.8h2.5v2.5h-2.5zM887.6 835.8h1.2v1.2h-1.2zM930.8 810.2h1.7v1.7h-1.7zM836.5 779.4h2.6v2.6h-2.6zM896.3 820.1h2.3v2.3h-2.3zM852.3 834.9h2.6v2.6h-2.6zM840.1 801.3h1.8v1.8h-1.8zM850.3 797.8h2.0v2.0h-2.0zM852.8 747.4h2.1v2.1h-2.1zM868.4 825.7h1.6v1.6h-1.6zM940.5 814.9h1.6v1.6h-1.6zM899.4 836.7h2.4v2.4h-2.4zM855.8 739.8h2.1v2.1h-2.1zM842.2 760.7h2.5v2.5h-2.5zM854.9 794.8h2.3v2.3h-2.3zM881.8 840.6h2.1v2.1h-2.1zM929.3 824.3h1.6v1.6h-1.6zM846.6 797.6h2.6v2.6h-2.6zM911.4 827.3h2.3v2.3h-2.3zM893.3 819.8h1.5v1.5h-1.5zM938.2 805.1h1.8v1.8h-1.8zM870.5 734.3h1.9v1.9h-1.9zM852.8 768.9h1.3v1.3h-1.3zM921.1 809.4h1.3v1.3h-1.3zM837.9 787.8h1.7v1.7h-1.7zM847.7 804.3h2.4v2.4h-2.4zM872.1 818.8h2.4v2.4h-2.4zM846.4 827.1h1.3v1.3h-1.3zM868.0 719.6h1.7v1.7h-1.7zM878.0 830.9h2.2v2.2h-2.2zM902.5 816.8h2.0v2.0h-2.0zM851.7 741.5h2.8v2.8h-2.8zM905.9 825.6h2.4v2.4h-2.4zM850.9 732.5h1.7v1.7h-1.7zM860.5 723.3h2.6v2.6h-2.6zM940.6 806.4h1.4v1.4h-1.4zM838.2 790.5h1.2v1.2h-1.2zM858.1 837.3h1.7v1.7h-1.7zM853.2 785.0h2.3v2.3h-2.3zM869.1 741.8h2.4v2.4h-2.4zM858.8 735.7h2.0v2.0h-2.0zM838.8 741.7h2.2v2.2h-2.2zM844.4 764.8h1.4v1.4h-1.4zM843.2 773.4h2.2v2.2h-2.2zM857.9 737.2h2.2v2.2h-2.2zM845.6 779.9h2.1v2.1h-2.1zM842.6 808.0h1.6v1.6h-1.6zM845.5 818.4h1.2v1.2h-1.2zM850.9 813.6h2.6v2.6h-2.6zM856.7 762.1h2.7v2.7h-2.7zM917.4 821.5h1.9v1.9h-1.9zM894.6 824.1h2.3v2.3h-2.3zM913.8 834.0h2.5v2.5h-2.5zM858.7 826.7h1.4v1.4h-1.4zM922.1 809.5h2.7v2.7h-2.7zM856.7 771.1h2.7v2.7h-2.7zM848.9 833.3h2.3v2.3h-2.3zM855.9 798.9h1.5v1.5h-1.5zM851.5 766.6h2.7v2.7h-2.7zM844.6 738.4h2.0v2.0h-2.0zM842.3 812.4h2.0v2.0h-2.0zM913.3 812.7h1.8v1.8h-1.8zM906.3 825.8h2.0v2.0h-2.0zM854.6 796.8h1.4v1.4h-1.4zM859.4 733.0h1.9v1.9h-1.9zM882.2 838.2h1.9v1.9h-1.9zM836.8 762.8h2.7v2.7h-2.7zM866.3 745.2h1.7v1.7h-1.7zM851.7 804.1h1.5v1.5h-1.5zM844.5 752.5h2.4v2.4h-2.4zM845.1 768.6h1.4v1.4h-1.4zM835.8 763.7h2.1v2.1h-2.1zM843.6 768.8h2.2v2.2h-2.2zM853.4 767.2h2.8v2.8h-2.8zM850.9 732.3h2.8v2.8h-2.8zM844.0 826.2h2.4v2.4h-2.4zM868.3 741.6h1.8v1.8h-1.8zM858.4 766.0h2.7v2.7h-2.7zM943.9 810.6h1.3v1.3h-1.3zM859.9 813.6h1.4v1.4h-1.4zM836.7 784.9h1.3v1.3h-1.3zM849.5 814.4h1.2v1.2h-1.2zM838.3 748.9h1.8v1.8h-1.8zM913.6 825.0h1.5v1.5h-1.5zM865.1 723.2h2.2v2.2h-2.2zM858.6 823.5h2.7v2.7h-2.7zM898.3 831.4h2.3v2.3h-2.3zM926.3 808.1h1.7v1.7h-1.7zM841.6 752.4h2.1v2.1h-2.1zM837.9 748.2h1.8v1.8h-1.8zM856.4 802.9h1.3v1.3h-1.3zM860.6 736.7h2.2v2.2h-2.2zM860.3 716.1h2.2v2.2h-2.2zM931.4 816.4h2.1v2.1h-2.1zM855.3 776.4h1.2v1.2h-1.2zM885.6 820.2h1.9v1.9h-1.9zM922.0 826.7h2.1v2.1h-2.1zM901.2 827.4h2.6v2.6h-2.6zM855.7 775.5h2.4v2.4h-2.4zM848.5 801.2h2.3v2.3h-2.3zM936.5 818.7h1.9v1.9h-1.9zM866.9 738.3h2.0v2.0h-2.0zM855.4 817.0h1.7v1.7h-1.7zM919.5 811.1h2.8v2.8h-2.8zM869.6 836.9h1.7v1.7h-1.7zM915.8 821.8h2.7v2.7h-2.7zM839.4 799.9h1.8v1.8h-1.8zM854.3 764.4h1.6v1.6h-1.6zM925.7 826.2h2.5v2.5h-2.5zM929.2 812.9h2.1v2.1h-2.1zM839.5 807.3h2.7v2.7h-2.7zM878.0 834.5h1.5v1.5h-1.5zM882.2 825.5h1.6v1.6h-1.6zM846.3 833.0h2.2v2.2h-2.2zM865.9 729.7h2.2v2.2h-2.2zM902.0 827.3h2.3v2.3h-2.3zM907.1 816.6h1.8v1.8h-1.8zM909.7 825.6h1.3v1.3h-1.3zM863.9 821.9h1.9v1.9h-1.9zM921.1 830.7h1.9v1.9h-1.9zM862.6 832.6h2.2v2.2h-2.2zM840.4 767.4h1.4v1.4h-1.4zM920.3 814.3h2.7v2.7h-2.7zM920.7 816.5h2.5v2.5h-2.5zM937.7 810.3h1.8v1.8h-1.8zM877.8 833.9h2.5v2.5h-2.5zM890.4 823.3h2.6v2.6h-2.6zM859.4 729.3h2.4v2.4h-2.4zM852.5 757.8h2.1v2.1h-2.1zM846.5 759.6h1.2v1.2h-1.2zM854.2 818.4h2.1v2.1h-2.1zM894.1 831.5h2.0v2.0h-2.0zM873.2 727.5h2.6v2.6h-2.6zM919.2 818.0h2.5v2.5h-2.5zM863.4 823.3h2.5v2.5h-2.5zM918.6 826.7h2.5v2.5h-2.5zM856.9 739.9h2.2v2.2h-2.2zM848.5 761.2h2.0v2.0h-2.0zM841.2 773.0h1.7v1.7h-1.7zM867.1 737.4h1.6v1.6h-1.6zM838.8 776.0h1.8v1.8h-1.8zM863.1 822.4h2.0v2.0h-2.0zM854.1 772.6h2.2v2.2h-2.2zM906.0 819.3h1.8v1.8h-1.8zM859.2 742.0h1.6v1.6h-1.6zM857.8 729.7h2.1v2.1h-2.1zM842.2 796.8h2.0v2.0h-2.0zM871.7 831.3h2.4v2.4h-2.4zM878.5 824.5h1.9v1.9h-1.9zM849.2 802.5h1.8v1.8h-1.8zM887.8 830.1h1.5v1.5h-1.5zM892.6 839.5h2.2v2.2h-2.2zM854.6 835.2h2.4v2.4h-2.4zM842.6 824.3h1.2v1.2h-1.2zM872.0 829.8h1.2v1.2h-1.2zM851.4 719.9h1.7v1.7h-1.7zM843.9 772.4h2.6v2.6h-2.6zM889.9 837.5h1.5v1.5h-1.5zM910.8 819.1h2.7v2.7h-2.7zM871.2 735.3h1.6v1.6h-1.6zM917.8 824.9h2.6v2.6h-2.6zM859.0 821.2h2.5v2.5h-2.5zM839.5 826.2h1.6v1.6h-1.6zM867.0 738.5h2.6v2.6h-2.6zM852.3 771.5h1.8v1.8h-1.8zM846.5 753.2h1.9v1.9h-1.9zM866.2 824.6h1.8v1.8h-1.8zM840.8 759.9h1.8v1.8h-1.8zM858.6 756.1h1.8v1.8h-1.8zM838.0 821.3h2.6v2.6h-2.6zM892.7 832.0h2.8v2.8h-2.8zM840.4 780.1h1.5v1.5h-1.5zM841.5 777.3h2.3v2.3h-2.3zM841.4 828.1h2.2v2.2h-2.2zM857.0 741.0h2.0v2.0h-2.0zM848.0 792.5h2.6v2.6h-2.6zM862.6 717.7h1.7v1.7h-1.7zM843.0 777.5h2.2v2.2h-2.2zM853.7 826.9h2.3v2.3h-2.3zM864.0 742.0h1.3v1.3h-1.3zM864.5 819.2h2.0v2.0h-2.0zM868.4 715.1h1.2v1.2h-1.2zM852.0 738.4h2.6v2.6h-2.6zM857.4 834.6h1.3v1.3h-1.3zM941.5 817.2h1.8v1.8h-1.8zM861.8 834.9h2.6v2.6h-2.6zM943.6 807.8h2.6v2.6h-2.6zM840.0 755.8h1.6v1.6h-1.6zM870.5 730.1h1.6v1.6h-1.6zM866.6 830.0h2.6v2.6h-2.6zM853.5 758.0h2.0v2.0h-2.0zM934.8 803.3h2.1v2.1h-2.1zM861.0 757.9h1.6v1.6h-1.6zM854.0 766.7h1.8v1.8h-1.8zM861.0 722.8h2.0v2.0h-2.0zM846.6 806.3h1.5v1.5h-1.5zM925.4 828.0h1.9v1.9h-1.9zM935.1 816.6h1.3v1.3h-1.3zM854.6 826.3h1.6v1.6h-1.6zM842.9 740.6h2.5v2.5h-2.5zM887.6 838.1h2.1v2.1h-2.1zM874.4 841.3h1.9v1.9h-1.9zM841.3 744.0h1.5v1.5h-1.5zM856.3 826.4h2.1v2.1h-2.1zM869.6 713.4h2.1v2.1h-2.1zM857.7 777.8h1.8v1.8h-1.8zM836.8 804.0h2.6v2.6h-2.6zM868.5 818.4h2.1v2.1h-2.1zM889.9 831.4h2.0v2.0h-2.0zM863.6 821.2h1.9v1.9h-1.9zM848.7 740.9h2.4v2.4h-2.4zM875.8 834.3h1.6v1.6h-1.6zM846.9 788.0h2.3v2.3h-2.3zM856.9 838.9h1.7v1.7h-1.7zM862.7 719.1h2.0v2.0h-2.0zM854.3 803.9h1.8v1.8h-1.8zM843.6 775.3h2.8v2.8h-2.8zM927.3 819.4h2.1v2.1h-2.1zM864.7 715.9h2.6v2.6h-2.6zM910.3 834.3h1.6v1.6h-1.6zM934.6 811.9h1.6v1.6h-1.6zM851.4 783.1h2.0v2.0h-2.0zM861.4 755.1h2.6v2.6h-2.6zM838.6 828.5h2.2v2.2h-2.2zM866.4 746.2h2.1v2.1h-2.1zM903.0 760.2h1.9v1.9h-1.9zM919.2 745.5h1.4v1.4h-1.4zM898.7 750.4h1.4v1.4h-1.4zM924.2 745.3h1.6v1.6h-1.6zM907.9 757.9h1.5v1.5h-1.5zM928.1 743.1h2.3v2.3h-2.3zM912.5 756.1h1.6v1.6h-1.6zM906.6 754.5h1.9v1.9h-1.9zM874.5 757.3h1.6v1.6h-1.6zM889.3 743.9h1.8v1.8h-1.8zM918.8 745.9h2.4v2.4h-2.4zM910.2 758.1h2.8v2.8h-2.8zM899.5 758.2h2.7v2.7h-2.7zM904.2 749.7h2.2v2.2h-2.2zM916.7 753.9h1.5v1.5h-1.5zM877.9 756.6h1.5v1.5h-1.5zM902.3 759.2h2.6v2.6h-2.6zM915.6 760.0h2.3v2.3h-2.3zM913.4 760.5h1.9v1.9h-1.9zM928.5 755.2h2.3v2.3h-2.3zM874.7 757.0h2.3v2.3h-2.3zM870.3 742.9h2.4v2.4h-2.4zM893.4 748.2h1.2v1.2h-1.2zM913.5 747.2h2.8v2.8h-2.8zM874.6 746.6h1.6v1.6h-1.6zM881.9 754.8h2.6v2.6h-2.6zM908.3 758.3h1.7v1.7h-1.7zM880.8 748.0h1.9v1.9h-1.9zM891.0 748.9h2.1v2.1h-2.1zM883.3 758.1h1.6v1.6h-1.6zM898.5 746.2h1.8v1.8h-1.8zM884.5 750.9h1.5v1.5h-1.5zM873.9 739.5h2.1v2.1h-2.1zM876.2 756.7h1.3v1.3h-1.3zM922.0 757.2h2.7v2.7h-2.7zM890.3 748.3h2.2v2.2h-2.2zM894.6 758.7h1.5v1.5h-1.5zM893.6 759.8h1.7v1.7h-1.7zM905.6 751.6h1.3v1.3h-1.3zM891.5 748.1h1.6v1.6h-1.6zM883.5 759.8h2.5v2.5h-2.5zM889.3 739.7h1.6v1.6h-1.6zM930.4 750.1h2.1v2.1h-2.1zM930.5 744.6h2.6v2.6h-2.6zM919.3 756.4h1.7v1.7h-1.7zM901.7 747.7h2.1v2.1h-2.1zM912.0 756.7h2.3v2.3h-2.3zM892.8 758.0h2.4v2.4h-2.4zM896.7 746.2h1.8v1.8h-1.8zM909.4 750.9h2.0v2.0h-2.0zM885.5 749.8h1.7v1.7h-1.7zM886.0 747.0h1.3v1.3h-1.3zM931.0 754.8h2.7v2.7h-2.7zM900.9 746.3h2.6v2.6h-2.6zM919.2 742.7h2.0v2.0h-2.0zM925.7 751.2h1.9v1.9h-1.9zM866.7 752.8h2.4v2.4h-2.4zM919.0 745.8h1.9v1.9h-1.9zM913.6 752.8h1.4v1.4h-1.4zM920.2 755.5h2.2v2.2h-2.2zM889.4 740.1h2.5v2.5h-2.5zM868.8 748.9h1.4v1.4h-1.4zM926.0 753.7h1.5v1.5h-1.5zM925.4 745.0h2.6v2.6h-2.6zM924.0 744.6h2.1v2.1h-2.1zM872.6 738.2h1.8v1.8h-1.8zM928.5 754.4h2.0v2.0h-2.0zM874.1 757.6h2.5v2.5h-2.5zM902.5 757.3h2.3v2.3h-2.3zM880.1 758.5h2.4v2.4h-2.4zM929.1 755.9h2.3v2.3h-2.3zM877.3 738.9h2.4v2.4h-2.4zM886.8 756.3h2.2v2.2h-2.2zM916.9 755.5h1.3v1.3h-1.3zM914.4 760.2h2.6v2.6h-2.6zM886.9 743.5h1.5v1.5h-1.5zM889.0 758.6h2.2v2.2h-2.2zM878.5 752.1h2.0v2.0h-2.0zM880.9 738.5h1.7v1.7h-1.7zM909.6 745.9h2.8v2.8h-2.8zM923.9 757.0h2.2v2.2h-2.2zM888.1 757.7h2.6v2.6h-2.6zM926.2 742.6h2.2v2.2h-2.2zM882.8 749.5h2.5v2.5h-2.5zM899.4 760.8h1.2v1.2h-1.2zM896.4 756.8h2.5v2.5h-2.5zM924.5 744.7h2.7v2.7h-2.7zM885.5 744.5h2.7v2.7h-2.7zM909.1 755.3h1.3v1.3h-1.3zM903.0 746.0h2.6v2.6h-2.6zM888.6 754.9h2.4v2.4h-2.4zM913.4 758.7h2.1v2.1h-2.1zM905.4 757.5h1.9v1.9h-1.9zM886.6 752.7h2.6v2.6h-2.6zM893.1 744.8h2.0v2.0h-2.0zM866.7 754.3h1.2v1.2h-1.2zM935.3 746.6h1.2v1.2h-1.2zM875.5 739.0h1.8v1.8h-1.8zM919.2 743.4h2.2v2.2h-2.2zM928.1 748.7h1.5v1.5h-1.5zM916.0 756.4h1.5v1.5h-1.5zM892.3 760.8h2.4v2.4h-2.4zM870.3 748.2h2.3v2.3h-2.3zM876.6 737.0h1.6v1.6h-1.6zM882.6 741.1h2.6v2.6h-2.6zM928.9 746.9h2.6v2.6h-2.6zM888.5 745.2h1.4v1.4h-1.4zM882.6 744.3h1.8v1.8h-1.8zM902.9 753.4h2.3v2.3h-2.3zM885.4 753.8h2.5v2.5h-2.5zM876.0 739.1h2.4v2.4h-2.4zM878.5 748.3h1.7v1.7h-1.7zM896.4 744.3h1.3v1.3h-1.3zM912.4 753.7h1.3v1.3h-1.3zM907.9 749.8h1.9v1.9h-1.9zM931.6 746.2h1.4v1.4h-1.4zM891.0 744.2h2.7v2.7h-2.7zM918.2 743.7h1.3v1.3h-1.3zM919.4 748.3h1.5v1.5h-1.5zM930.9 751.4h2.1v2.1h-2.1zM876.2 758.3h2.4v2.4h-2.4zM909.9 753.8h1.6v1.6h-1.6zM893.8 756.8h2.1v2.1h-2.1zM908.2 760.7h2.2v2.2h-2.2zM886.2 752.4h1.5v1.5h-1.5zM875.8 757.4h2.0v2.0h-2.0zM896.2 761.1h2.3v2.3h-2.3zM914.9 744.8h2.8v2.8h-2.8zM869.2 749.5h1.7v1.7h-1.7zM869.1 751.9h1.6v1.6h-1.6zM930.3 749.3h1.5v1.5h-1.5zM922.0 756.4h2.7v2.7h-2.7zM890.9 758.8h1.9v1.9h-1.9zM873.9 753.4h1.3v1.3h-1.3zM891.6 744.3h1.2v1.2h-1.2zM902.0 749.0h2.4v2.4h-2.4zM893.2 742.0h1.9v1.9h-1.9zM958.5 813.6h1.7v1.7h-1.7zM972.9 840.4h2.5v2.5h-2.5zM957.5 803.7h2.3v2.3h-2.3zM954.9 832.4h2.5v2.5h-2.5zM972.7 814.4h1.3v1.3h-1.3zM964.7 816.7h1.3v1.3h-1.3zM950.8 803.6h2.2v2.2h-2.2zM933.9 815.4h2.4v2.4h-2.4zM949.7 799.9h1.3v1.3h-1.3zM952.6 799.4h2.0v2.0h-2.0zM935.0 818.8h2.5v2.5h-2.5zM969.6 823.2h1.4v1.4h-1.4zM957.5 828.3h1.2v1.2h-1.2zM959.0 801.5h1.9v1.9h-1.9zM934.7 807.7h1.6v1.6h-1.6zM974.5 828.8h1.7v1.7h-1.7zM961.0 824.2h1.7v1.7h-1.7zM969.0 817.5h2.3v2.3h-2.3zM941.3 807.3h1.6v1.6h-1.6zM948.8 800.8h1.4v1.4h-1.4zM933.8 814.8h1.4v1.4h-1.4zM957.0 802.7h1.3v1.3h-1.3zM935.5 818.8h1.9v1.9h-1.9zM932.6 803.4h2.2v2.2h-2.2zM980.4 833.8h1.9v1.9h-1.9zM984.9 838.0h2.3v2.3h-2.3zM954.1 797.8h1.3v1.3h-1.3zM954.7 819.0h1.2v1.2h-1.2zM968.6 815.2h2.5v2.5h-2.5zM940.0 806.4h2.5v2.5h-2.5zM932.0 802.9h2.4v2.4h-2.4zM957.5 809.8h2.1v2.1h-2.1zM948.0 824.0h1.3v1.3h-1.3zM961.1 837.5h2.3v2.3h-2.3zM943.9 813.8h2.5v2.5h-2.5zM953.9 821.6h2.2v2.2h-2.2zM955.5 812.2h2.5v2.5h-2.5zM948.0 812.5h1.9v1.9h-1.9zM971.4 829.8h2.5v2.5h-2.5zM980.6 830.8h1.6v1.6h-1.6zM966.1 839.9h1.3v1.3h-1.3zM960.4 824.6h2.1v2.1h-2.1zM962.7 811.9h2.2v2.2h-2.2zM934.2 814.8h2.2v2.2h-2.2zM930.1 805.1h1.7v1.7h-1.7zM958.8 835.2h1.7v1.7h-1.7zM942.7 824.5h1.9v1.9h-1.9zM965.0 813.4h2.3v2.3h-2.3zM944.0 801.7h2.1v2.1h-2.1zM938.9 814.1h2.5v2.5h-2.5zM946.3 824.8h1.3v1.3h-1.3zM960.1 825.4h1.5v1.5h-1.5zM952.7 824.5h2.2v2.2h-2.2zM955.8 819.2h1.7v1.7h-1.7zM963.5 836.4h2.2v2.2h-2.2zM978.6 831.4h1.3v1.3h-1.3zM940.2 807.5h1.8v1.8h-1.8zM941.0 801.6h1.9v1.9h-1.9zM957.0 812.9h2.3v2.3h-2.3zM971.1 825.6h2.0v2.0h-2.0zM963.3 839.4h2.3v2.3h-2.3zM933.4 806.8h2.1v2.1h-2.1zM935.8 801.3h1.8v1.8h-1.8zM949.1 804.6h2.2v2.2h-2.2zM945.9 826.6h1.5v1.5h-1.5zM956.4 814.9h1.7v1.7h-1.7zM949.0 828.8h2.0v2.0h-2.0zM939.2 807.2h2.2v2.2h-2.2zM975.1 839.9h2.3v2.3h-2.3zM950.9 817.6h1.4v1.4h-1.4zM931.1 814.3h2.0v2.0h-2.0zM937.7 814.9h2.1v2.1h-2.1zM934.6 801.2h1.2v1.2h-1.2zM970.9 838.3h1.2v1.2h-1.2zM961.1 819.8h1.6v1.6h-1.6zM960.7 808.8h1.4v1.4h-1.4zM951.6 801.5h2.2v2.2h-2.2zM972.9 832.2h2.6v2.6h-2.6zM968.7 822.7h1.2v1.2h-1.2zM932.9 791.5h1.6v1.6h-1.6zM963.6 828.5h2.4v2.4h-2.4zM941.2 808.5h2.3v2.3h-2.3zM973.2 830.4h2.2v2.2h-2.2zM958.2 824.3h1.9v1.9h-1.9zM945.8 793.7h1.2v1.2h-1.2zM973.5 816.9h1.6v1.6h-1.6zM954.2 816.4h2.6v2.6h-2.6zM973.4 831.5h2.3v2.3h-2.3zM949.6 796.9h2.0v2.0h-2.0zM948.4 818.9h1.6v1.6h-1.6zM949.3 806.0h2.3v2.3h-2.3zM963.9 823.7h1.6v1.6h-1.6zM947.5 812.3h2.5v2.5h-2.5zM933.4 805.1h1.4v1.4h-1.4zM982.6 834.0h2.0v2.0h-2.0zM954.1 809.4h1.7v1.7h-1.7zM953.1 822.6h1.4v1.4h-1.4zM943.9 811.1h2.0v2.0h-2.0zM957.7 832.2h1.9v1.9h-1.9zM943.4 813.2h2.6v2.6h-2.6zM938.6 808.7h2.2v2.2h-2.2zM963.1 821.3h2.2v2.2h-2.2zM946.3 811.5h1.7v1.7h-1.7zM963.6 809.1h1.9v1.9h-1.9zM959.4 813.5h2.6v2.6h-2.6zM965.6 825.6h1.6v1.6h-1.6zM945.0 822.1h2.4v2.4h-2.4zM977.5 827.4h1.3v1.3h-1.3zM973.3 816.7h2.1v2.1h-2.1zM956.4 803.8h1.8v1.8h-1.8zM955.5 811.9h1.7v1.7h-1.7zM958.1 807.3h1.6v1.6h-1.6zM966.1 837.7h2.4v2.4h-2.4zM972.1 831.5h1.9v1.9h-1.9zM955.0 827.0h1.3v1.3h-1.3zM938.0 797.8h1.8v1.8h-1.8zM955.5 823.8h1.3v1.3h-1.3zM941.6 820.2h2.2v2.2h-2.2zM937.5 817.9h2.6v2.6h-2.6zM968.5 828.9h1.8v1.8h-1.8zM959.4 812.6h1.7v1.7h-1.7zM936.5 798.4h2.2v2.2h-2.2zM936.6 811.7h1.9v1.9h-1.9zM975.6 830.7h2.2v2.2h-2.2zM937.4 792.4h1.6v1.6h-1.6zM952.4 825.7h2.5v2.5h-2.5zM937.9 794.8h2.5v2.5h-2.5zM945.3 818.7h1.6v1.6h-1.6zM948.9 813.7h1.3v1.3h-1.3zM958.1 807.2h2.0v2.0h-2.0zM951.8 815.7h2.5v2.5h-2.5zM956.8 805.5h2.4v2.4h-2.4zM934.4 798.2h1.3v1.3h-1.3zM959.2 828.6h1.2v1.2h-1.2zM964.9 835.8h1.5v1.5h-1.5zM938.9 812.0h2.6v2.6h-2.6zM948.2 817.0h1.3v1.3h-1.3zM952.7 809.9h1.7v1.7h-1.7zM931.2 805.7h2.3v2.3h-2.3zM983.6 835.8h2.4v2.4h-2.4zM954.0 812.1h1.3v1.3h-1.3zM945.0 799.1h2.5v2.5h-2.5zM938.5 809.0h1.5v1.5h-1.5zM949.4 799.2h2.4v2.4h-2.4zM953.5 822.1h2.3v2.3h-2.3zM938.3 821.1h1.5v1.5h-1.5zM959.9 807.4h1.2v1.2h-1.2zM948.1 825.1h1.3v1.3h-1.3zM937.0 798.6h2.4v2.4h-2.4zM977.7 823.7h2.0v2.0h-2.0zM966.1 820.3h2.5v2.5h-2.5zM941.0 803.0h2.3v2.3h-2.3zM938.7 924.8h1.8v1.8h-1.8zM907.5 856.4h1.5v1.5h-1.5zM949.7 910.7h1.0v1.0h-1.0zM944.8 908.7h1.8v1.8h-1.8zM944.4 948.2h1.8v1.8h-1.8zM924.1 871.6h1.5v1.5h-1.5zM925.7 862.5h1.9v1.9h-1.9zM925.1 920.1h1.6v1.6h-1.6zM945.9 915.9h0.9v0.9h-0.9zM930.1 924.1h1.2v1.2h-1.2zM944.5 919.4h1.3v1.3h-1.3zM930.2 905.3h1.0v1.0h-1.0zM916.3 863.5h0.8v0.8h-0.8zM927.5 873.8h1.2v1.2h-1.2zM906.5 858.4h1.3v1.3h-1.3zM941.0 919.5h1.4v1.4h-1.4zM914.1 876.2h1.5v1.5h-1.5zM940.9 886.2h1.3v1.3h-1.3zM913.5 874.0h1.7v1.7h-1.7zM932.2 908.7h1.6v1.6h-1.6zM920.8 853.7h1.4v1.4h-1.4zM934.1 915.0h1.2v1.2h-1.2zM918.4 881.6h1.6v1.6h-1.6zM932.8 893.3h1.5v1.5h-1.5zM909.2 853.1h1.1v1.1h-1.1zM935.7 887.1h1.6v1.6h-1.6zM911.8 886.5h1.1v1.1h-1.1zM930.0 886.5h1.1v1.1h-1.1zM913.0 875.2h1.2v1.2h-1.2zM927.1 879.3h1.7v1.7h-1.7zM908.4 859.1h1.2v1.2h-1.2zM913.7 864.9h1.1v1.1h-1.1zM935.5 921.3h1.6v1.6h-1.6zM928.2 865.7h1.1v1.1h-1.1zM939.9 895.2h1.7v1.7h-1.7zM950.8 906.9h1.0v1.0h-1.0zM916.2 896.0h1.4v1.4h-1.4zM937.2 930.7h0.8v0.8h-0.8zM918.3 845.0h1.2v1.2h-1.2zM924.9 902.0h1.9v1.9h-1.9zM947.9 912.6h1.9v1.9h-1.9zM930.2 913.1h0.9v0.9h-0.9zM938.2 893.9h1.4v1.4h-1.4zM922.6 870.7h1.6v1.6h-1.6zM949.2 912.2h1.3v1.3h-1.3zM934.1 893.7h1.1v1.1h-1.1zM905.5 861.8h1.9v1.9h-1.9zM946.8 948.7h1.9v1.9h-1.9zM909.8 869.4h1.2v1.2h-1.2zM923.6 910.8h0.8v0.8h-0.8zM938.8 903.3h2.0v2.0h-2.0zM944.9 929.6h1.7v1.7h-1.7zM942.3 937.5h1.7v1.7h-1.7zM950.7 934.2h1.4v1.4h-1.4zM949.1 932.8h1.0v1.0h-1.0zM938.7 887.4h0.8v0.8h-0.8zM922.0 882.8h1.4v1.4h-1.4zM941.1 901.9h1.3v1.3h-1.3zM938.1 911.1h1.2v1.2h-1.2zM919.4 850.9h1.2v1.2h-1.2zM939.5 919.5h1.4v1.4h-1.4zM944.5 905.1h2.0v2.0h-2.0zM952.9 945.2h0.9v0.9h-0.9zM913.9 880.4h1.3v1.3h-1.3zM947.8 934.1h1.2v1.2h-1.2zM945.6 908.4h0.9v0.9h-0.9zM909.9 860.6h1.2v1.2h-1.2zM919.1 876.4h1.0v1.0h-1.0zM904.3 855.0h1.2v1.2h-1.2zM908.4 858.5h1.0v1.0h-1.0zM927.6 880.5h1.5v1.5h-1.5zM950.1 917.7h0.9v0.9h-0.9zM915.1 881.7h1.3v1.3h-1.3zM923.3 907.1h1.5v1.5h-1.5zM924.1 859.8h1.9v1.9h-1.9zM923.7 886.5h0.9v0.9h-0.9zM920.1 901.8h1.6v1.6h-1.6zM930.1 906.9h1.6v1.6h-1.6zM909.6 879.4h1.2v1.2h-1.2zM934.3 869.8h2.0v2.0h-2.0zM943.2 895.4h1.3v1.3h-1.3zM911.8 847.2h1.0v1.0h-1.0zM925.6 872.6h1.8v1.8h-1.8zM948.0 902.1h1.8v1.8h-1.8z" fill="#fe6e1f"/>
<path d="M679.4 302.7h0.8v0.8h-0.8zM576.8 267.4h1.3v1.3h-1.3zM715.4 318.0h1.1v1.1h-1.1zM658.8 286.3h1.4v1.4h-1.4zM606.8 354.5h1.2v1.2h-1.2zM583.8 333.3h0.8v0.8h-0.8zM755.2 446.3h1.2v1.2h-1.2zM750.7 282.6h1.1v1.1h-1.1zM578.2 273.4h1.1v1.1h-1.1zM566.1 323.4h1.2v1.2h-1.2zM637.9 352.5h1.6v1.6h-1.6zM770.0 405.4h1.5v1.5h-1.5zM643.7 310.9h0.9v0.9h-0.9zM571.3 302.2h0.8v0.8h-0.8zM636.7 242.5h1.5v1.5h-1.5zM628.1 267.3h1.4v1.4h-1.4zM758.3 411.9h1.5v1.5h-1.5zM553.0 281.3h1.0v1.0h-1.0zM755.3 330.9h1.3v1.3h-1.3zM771.3 412.0h0.9v0.9h-0.9zM790.1 375.0h1.1v1.1h-1.1zM787.8 373.1h1.2v1.2h-1.2zM634.1 325.6h1.3v1.3h-1.3zM655.6 257.4h0.8v0.8h-0.8zM588.9 329.4h1.4v1.4h-1.4zM627.2 340.6h1.2v1.2h-1.2zM738.3 337.9h1.2v1.2h-1.2zM773.2 321.9h1.3v1.3h-1.3zM673.5 383.8h1.2v1.2h-1.2zM564.1 271.7h0.9v0.9h-0.9zM741.2 434.5h0.9v0.9h-0.9zM710.4 247.5h1.5v1.5h-1.5zM645.2 332.8h1.6v1.6h-1.6zM701.4 339.0h0.9v0.9h-0.9zM572.1 277.9h0.8v0.8h-0.8zM613.3 244.1h1.1v1.1h-1.1zM749.9 276.1h0.9v0.9h-0.9zM717.4 317.5h0.9v0.9h-0.9zM704.0 410.8h0.9v0.9h-0.9zM659.0 296.1h1.2v1.2h-1.2zM608.4 215.8h1.4v1.4h-1.4zM749.9 319.2h1.2v1.2h-1.2zM643.9 337.7h1.4v1.4h-1.4zM559.5 244.2h0.9v0.9h-0.9zM609.6 252.5h0.9v0.9h-0.9zM664.2 336.7h1.0v1.0h-1.0zM621.8 269.7h1.3v1.3h-1.3zM732.9 375.1h1.4v1.4h-1.4zM726.3 371.5h0.8v0.8h-0.8zM768.1 367.6h1.4v1.4h-1.4zM580.7 341.9h1.2v1.2h-1.2zM746.4 416.9h1.3v1.3h-1.3zM579.1 301.5h0.9v0.9h-0.9zM685.1 367.7h1.3v1.3h-1.3zM667.8 212.8h1.4v1.4h-1.4zM727.6 262.9h1.4v1.4h-1.4zM669.0 306.9h1.2v1.2h-1.2zM550.4 325.8h1.5v1.5h-1.5zM657.9 278.6h1.0v1.0h-1.0zM598.5 356.2h0.9v0.9h-0.9zM750.2 338.2h1.5v1.5h-1.5zM754.9 241.8h1.5v1.5h-1.5zM638.7 309.4h1.6v1.6h-1.6zM766.2 413.4h1.3v1.3h-1.3zM728.4 323.8h1.4v1.4h-1.4zM663.6 297.2h1.0v1.0h-1.0zM587.7 252.1h1.0v1.0h-1.0zM669.8 266.6h1.5v1.5h-1.5zM732.7 314.4h1.1v1.1h-1.1zM573.2 250.3h1.2v1.2h-1.2zM780.4 391.0h1.3v1.3h-1.3zM659.9 348.8h0.8v0.8h-0.8zM604.5 273.3h1.6v1.6h-1.6zM622.5 217.4h1.2v1.2h-1.2zM650.6 275.8h1.3v1.3h-1.3zM716.0 261.1h1.4v1.4h-1.4zM750.2 269.2h1.0v1.0h-1.0zM582.4 309.6h1.0v1.0h-1.0zM769.6 431.1h1.4v1.4h-1.4zM784.5 365.0h1.0v1.0h-1.0zM624.8 280.4h0.8v0.8h-0.8zM604.2 329.8h1.6v1.6h-1.6zM745.8 395.1h1.5v1.5h-1.5zM740.8 231.6h1.0v1.0h-1.0zM607.6 228.1h0.8v0.8h-0.8zM700.5 379.2h1.4v1.4h-1.4zM607.6 272.8h0.9v0.9h-0.9zM690.0 292.9h1.1v1.1h-1.1zM672.3 269.4h1.4v1.4h-1.4zM575.7 259.0h1.6v1.6h-1.6zM761.7 323.4h1.0v1.0h-1.0zM581.2 262.6h1.0v1.0h-1.0zM648.0 282.3h1.0v1.0h-1.0zM727.3 262.5h0.8v0.8h-0.8zM660.8 252.3h0.8v0.8h-0.8zM573.1 333.6h1.4v1.4h-1.4zM595.1 243.4h1.6v1.6h-1.6zM741.7 267.1h1.1v1.1h-1.1zM726.5 434.5h0.8v0.8h-0.8zM650.6 356.5h1.1v1.1h-1.1zM657.3 320.7h0.8v0.8h-0.8zM667.9 270.3h1.4v1.4h-1.4zM759.4 459.0h1.4v1.4h-1.4zM749.1 247.6h1.2v1.2h-1.2zM555.2 257.2h0.9v0.9h-0.9zM763.4 349.7h1.3v1.3h-1.3zM750.1 274.9h1.3v1.3h-1.3zM701.4 329.8h0.9v0.9h-0.9zM606.7 249.0h0.9v0.9h-0.9zM779.4 393.9h1.0v1.0h-1.0zM595.7 362.8h1.2v1.2h-1.2zM741.0 389.4h0.8v0.8h-0.8zM683.9 320.1h1.4v1.4h-1.4zM703.0 383.8h1.3v1.3h-1.3zM719.7 424.7h1.1v1.1h-1.1zM688.0 288.3h1.0v1.0h-1.0zM582.0 218.7h0.9v0.9h-0.9zM718.5 369.2h1.4v1.4h-1.4zM562.4 358.4h1.1v1.1h-1.1zM750.1 433.0h0.9v0.9h-0.9zM573.9 220.5h1.5v1.5h-1.5zM551.2 275.7h1.0v1.0h-1.0zM637.6 291.6h1.6v1.6h-1.6zM542.6 281.9h1.1v1.1h-1.1zM551.5 334.3h1.4v1.4h-1.4zM550.8 293.7h1.3v1.3h-1.3zM551.8 288.1h1.6v1.6h-1.6zM546.1 250.7h2.1v2.1h-2.1zM552.7 305.1h2.1v2.1h-2.1zM544.8 271.1h1.3v1.3h-1.3zM551.8 300.5h1.6v1.6h-1.6zM550.5 256.8h1.9v1.9h-1.9zM545.5 261.7h1.0v1.0h-1.0zM548.0 301.2h2.3v2.3h-2.3zM550.6 325.5h1.0v1.0h-1.0zM549.5 321.4h2.3v2.3h-2.3zM550.7 247.9h2.1v2.1h-2.1zM552.9 326.5h1.3v1.3h-1.3zM551.8 304.3h1.6v1.6h-1.6zM538.1 262.3h1.9v1.9h-1.9zM546.2 238.0h1.3v1.3h-1.3zM545.9 297.8h1.8v1.8h-1.8zM553.0 253.9h2.3v2.3h-2.3zM551.4 233.9h1.2v1.2h-1.2zM547.8 240.6h1.0v1.0h-1.0zM547.2 257.1h1.1v1.1h-1.1zM542.4 314.1h1.4v1.4h-1.4zM550.9 313.1h1.9v1.9h-1.9zM544.4 246.3h1.2v1.2h-1.2zM546.8 304.9h2.1v2.1h-2.1zM548.0 319.5h1.1v1.1h-1.1zM551.7 308.7h1.8v1.8h-1.8zM548.6 324.2h1.6v1.6h-1.6zM546.4 270.2h2.3v2.3h-2.3zM551.7 323.5h2.2v2.2h-2.2zM548.7 328.8h2.2v2.2h-2.2zM551.5 313.1h1.1v1.1h-1.1zM551.1 323.8h2.3v2.3h-2.3zM547.3 270.9h1.0v1.0h-1.0zM546.7 330.3h1.4v1.4h-1.4zM554.2 278.2h2.1v2.1h-2.1zM539.7 235.3h1.6v1.6h-1.6zM551.6 344.9h1.9v1.9h-1.9zM547.0 310.1h1.2v1.2h-1.2zM556.9 330.2h1.1v1.1h-1.1zM550.1 288.6h1.2v1.2h-1.2zM545.6 231.2h1.1v1.1h-1.1zM548.5 264.3h2.4v2.4h-2.4zM547.7 323.4h1.0v1.0h-1.0zM552.4 257.1h1.6v1.6h-1.6zM547.5 235.3h2.2v2.2h-2.2zM556.6 288.5h1.7v1.7h-1.7zM553.1 294.1h2.1v2.1h-2.1zM548.6 289.5h2.2v2.2h-2.2zM545.2 246.9h1.8v1.8h-1.8zM541.7 246.1h1.2v1.2h-1.2zM538.9 273.8h2.1v2.1h-2.1zM571.1 286.7h1.7v1.7h-1.7zM568.8 247.9h1.8v1.8h-1.8zM569.4 276.4h1.6v1.6h-1.6zM569.5 251.8h1.8v1.8h-1.8zM566.7 271.9h1.3v1.3h-1.3zM567.8 270.8h1.4v1.4h-1.4zM570.1 278.6h1.7v1.7h-1.7zM567.7 270.6h2.1v2.1h-2.1zM567.3 258.4h1.8v1.8h-1.8zM569.6 297.7h1.9v1.9h-1.9zM573.0 296.4h1.2v1.2h-1.2zM567.8 241.6h1.5v1.5h-1.5zM566.0 242.3h1.9v1.9h-1.9zM573.3 235.6h1.5v1.5h-1.5zM570.1 256.8h1.1v1.1h-1.1zM572.0 291.5h1.8v1.8h-1.8zM570.5 264.8h1.5v1.5h-1.5zM568.1 250.1h1.7v1.7h-1.7zM570.4 249.5h1.3v1.3h-1.3zM570.1 248.7h1.6v1.6h-1.6zM579.1 228.6h1.3v1.3h-1.3zM576.6 228.9h1.7v1.7h-1.7zM585.4 217.9h1.9v1.9h-1.9zM574.2 227.6h1.3v1.3h-1.3zM608.7 256.4h1.9v1.9h-1.9zM606.4 256.8h1.5v1.5h-1.5zM639.2 238.9h1.9v1.9h-1.9zM614.7 249.5h1.4v1.4h-1.4zM613.4 251.4h1.9v1.9h-1.9zM608.0 257.2h1.9v1.9h-1.9zM607.9 258.8h1.5v1.5h-1.5zM632.8 235.4h1.8v1.8h-1.8zM635.8 239.7h1.8v1.8h-1.8zM653.9 238.8h1.8v1.8h-1.8zM628.6 239.4h1.6v1.6h-1.6zM607.0 258.0h2.0v2.0h-2.0zM606.7 257.3h1.4v1.4h-1.4zM638.3 236.7h1.3v1.3h-1.3zM634.6 239.4h1.6v1.6h-1.6zM645.1 237.4h1.1v1.1h-1.1zM650.5 239.6h1.2v1.2h-1.2zM648.9 237.8h1.1v1.1h-1.1zM647.5 239.6h1.4v1.4h-1.4zM643.0 240.8h1.8v1.8h-1.8zM631.3 239.8h1.0v1.0h-1.0zM685.6 311.8h1.1v1.1h-1.1zM698.1 242.0h1.2v1.2h-1.2zM704.5 227.0h1.3v1.3h-1.3zM685.2 303.0h1.6v1.6h-1.6zM684.7 311.6h1.4v1.4h-1.4zM708.6 219.1h1.0v1.0h-1.0zM701.9 228.5h1.2v1.2h-1.2zM700.8 226.6h1.9v1.9h-1.9zM682.1 318.1h2.0v2.0h-2.0zM691.6 266.2h1.2v1.2h-1.2zM691.6 264.6h1.3v1.3h-1.3zM687.5 266.0h2.0v2.0h-2.0zM700.5 240.1h2.0v2.0h-2.0zM685.8 311.2h1.4v1.4h-1.4zM687.4 276.2h1.0v1.0h-1.0zM687.4 266.9h1.4v1.4h-1.4zM690.1 273.4h1.3v1.3h-1.3zM693.3 262.1h2.2v2.2h-2.2zM700.6 238.5h1.8v1.8h-1.8zM690.5 274.0h2.2v2.2h-2.2zM694.0 251.2h1.1v1.1h-1.1zM692.3 253.1h2.1v2.1h-2.1zM683.3 335.3h1.8v1.8h-1.8zM629.4 341.8h1.8v1.8h-1.8zM585.9 318.8h1.1v1.1h-1.1zM615.1 344.0h1.0v1.0h-1.0zM576.9 325.9h2.4v2.4h-2.4zM678.3 350.3h1.7v1.7h-1.7zM583.6 308.1h2.3v2.3h-2.3zM626.0 356.0h1.4v1.4h-1.4zM577.6 359.1h1.1v1.1h-1.1zM581.9 311.9h1.4v1.4h-1.4zM650.8 382.2h1.6v1.6h-1.6zM602.4 374.1h1.8v1.8h-1.8zM634.8 342.3h2.2v2.2h-2.2zM631.8 320.1h1.8v1.8h-1.8zM677.1 358.0h2.5v2.5h-2.5zM615.3 318.2h1.6v1.6h-1.6zM664.7 337.6h2.1v2.1h-2.1zM586.3 358.1h1.1v1.1h-1.1zM600.3 375.6h2.0v2.0h-2.0zM580.2 353.0h1.7v1.7h-1.7zM619.1 383.0h1.1v1.1h-1.1zM613.9 311.6h2.5v2.5h-2.5zM678.7 357.5h1.6v1.6h-1.6zM597.5 377.2h1.7v1.7h-1.7zM671.6 323.4h1.6v1.6h-1.6zM681.6 348.2h1.6v1.6h-1.6zM671.8 357.6h1.7v1.7h-1.7zM585.0 326.1h2.0v2.0h-2.0zM578.9 335.1h1.8v1.8h-1.8zM607.0 371.8h2.3v2.3h-2.3zM670.3 369.8h2.0v2.0h-2.0zM607.1 305.7h2.0v2.0h-2.0zM644.9 368.6h1.1v1.1h-1.1zM639.1 350.0h1.4v1.4h-1.4zM576.0 314.9h1.6v1.6h-1.6zM590.8 366.1h1.8v1.8h-1.8zM600.9 333.3h2.3v2.3h-2.3zM584.3 366.9h2.4v2.4h-2.4zM617.6 308.0h2.2v2.2h-2.2zM661.9 372.2h1.7v1.7h-1.7zM572.8 319.6h2.4v2.4h-2.4zM614.4 365.5h2.2v2.2h-2.2zM677.3 345.2h1.2v1.2h-1.2zM641.7 355.2h1.9v1.9h-1.9zM625.0 377.7h2.1v2.1h-2.1zM582.1 318.1h1.5v1.5h-1.5zM571.8 322.1h2.1v2.1h-2.1zM681.9 319.2h2.4v2.4h-2.4zM651.7 355.3h1.2v1.2h-1.2zM595.9 363.7h1.9v1.9h-1.9zM624.3 357.7h1.0v1.0h-1.0zM601.5 340.5h1.8v1.8h-1.8zM573.1 331.8h1.3v1.3h-1.3zM588.6 320.4h1.2v1.2h-1.2zM625.2 375.5h2.1v2.1h-2.1zM697.2 334.7h1.1v1.1h-1.1zM609.1 324.6h2.5v2.5h-2.5zM626.7 345.0h2.4v2.4h-2.4zM658.8 349.8h2.3v2.3h-2.3zM619.9 381.8h2.2v2.2h-2.2zM656.7 353.9h2.1v2.1h-2.1zM680.9 351.1h2.4v2.4h-2.4zM666.8 319.5h2.3v2.3h-2.3zM674.1 370.3h2.1v2.1h-2.1zM639.4 312.9h2.5v2.5h-2.5zM581.6 333.5h1.2v1.2h-1.2zM605.0 363.0h2.4v2.4h-2.4zM616.1 315.9h1.7v1.7h-1.7zM621.1 309.4h1.4v1.4h-1.4zM603.0 378.2h2.3v2.3h-2.3zM661.4 355.5h1.1v1.1h-1.1zM628.5 332.4h2.1v2.1h-2.1zM692.9 346.9h2.2v2.2h-2.2zM637.8 376.4h2.4v2.4h-2.4zM639.8 314.9h2.0v2.0h-2.0zM666.1 360.4h1.4v1.4h-1.4zM629.4 382.7h1.8v1.8h-1.8zM592.8 306.2h2.1v2.1h-2.1zM663.2 333.3h1.2v1.2h-1.2zM644.8 356.3h2.2v2.2h-2.2zM649.7 357.6h1.5v1.5h-1.5zM572.9 316.4h1.1v1.1h-1.1zM669.0 361.2h2.5v2.5h-2.5zM644.4 378.4h1.1v1.1h-1.1zM628.6 316.4h2.2v2.2h-2.2zM594.4 351.8h2.1v2.1h-2.1zM604.2 319.8h2.6v2.6h-2.6zM621.7 358.7h1.0v1.0h-1.0zM625.2 381.6h2.5v2.5h-2.5zM590.1 364.7h1.9v1.9h-1.9zM658.3 323.6h1.6v1.6h-1.6zM631.6 373.4h1.6v1.6h-1.6zM656.0 332.0h1.4v1.4h-1.4zM574.5 340.6h1.1v1.1h-1.1zM632.5 369.9h2.5v2.5h-2.5zM683.0 356.9h2.1v2.1h-2.1zM626.1 376.7h1.9v1.9h-1.9zM571.8 317.2h1.3v1.3h-1.3zM619.2 356.3h2.5v2.5h-2.5zM668.0 346.9h1.6v1.6h-1.6zM627.2 326.2h1.8v1.8h-1.8zM579.5 346.2h2.6v2.6h-2.6zM662.6 359.3h1.9v1.9h-1.9zM675.4 344.0h1.4v1.4h-1.4zM699.9 344.6h2.1v2.1h-2.1zM606.4 341.4h2.1v2.1h-2.1zM629.3 335.8h1.5v1.5h-1.5zM594.8 313.4h1.4v1.4h-1.4zM685.1 328.2h2.4v2.4h-2.4zM652.5 325.0h1.3v1.3h-1.3zM619.0 376.7h1.2v1.2h-1.2zM600.8 353.1h2.2v2.2h-2.2zM605.1 364.0h1.7v1.7h-1.7zM638.9 342.0h1.6v1.6h-1.6zM641.8 327.8h1.5v1.5h-1.5zM647.1 318.9h1.7v1.7h-1.7zM681.8 344.3h1.0v1.0h-1.0zM591.6 324.9h1.4v1.4h-1.4zM677.4 323.9h2.5v2.5h-2.5zM668.8 319.4h1.1v1.1h-1.1zM642.6 337.4h1.8v1.8h-1.8zM644.3 362.3h1.2v1.2h-1.2zM676.7 326.0h1.9v1.9h-1.9zM585.6 362.1h1.1v1.1h-1.1zM640.1 336.2h2.5v2.5h-2.5zM644.0 373.1h1.3v1.3h-1.3zM556.5 334.1h1.0v1.0h-1.0zM611.8 376.9h1.6v1.6h-1.6zM694.2 382.7h2.0v2.0h-2.0zM731.2 408.1h1.9v1.9h-1.9zM663.9 377.4h2.1v2.1h-2.1zM752.8 420.5h1.6v1.6h-1.6zM646.9 383.9h2.4v2.4h-2.4zM771.7 452.8h1.0v1.0h-1.0zM730.4 402.3h1.4v1.4h-1.4zM785.6 433.8h1.9v1.9h-1.9zM753.6 419.4h2.6v2.6h-2.6zM784.6 435.1h1.1v1.1h-1.1zM604.7 360.5h1.9v1.9h-1.9zM649.4 387.7h2.4v2.4h-2.4zM576.6 337.5h1.4v1.4h-1.4zM652.6 361.2h1.7v1.7h-1.7zM742.6 417.0h1.4v1.4h-1.4zM762.0 431.2h1.6v1.6h-1.6zM631.2 367.8h2.3v2.3h-2.3zM572.3 354.3h2.4v2.4h-2.4zM755.6 437.4h1.6v1.6h-1.6zM729.4 409.9h1.4v1.4h-1.4zM743.4 420.6h1.3v1.3h-1.3zM651.5 376.4h1.8v1.8h-1.8zM640.5 372.4h1.3v1.3h-1.3zM556.7 330.7h1.2v1.2h-1.2zM725.4 406.1h1.7v1.7h-1.7zM593.9 353.4h2.4v2.4h-2.4zM606.7 334.4h1.6v1.6h-1.6zM641.6 374.4h1.7v1.7h-1.7zM757.3 416.2h1.4v1.4h-1.4zM686.0 395.0h1.2v1.2h-1.2zM570.7 345.0h1.8v1.8h-1.8zM616.7 360.5h1.6v1.6h-1.6zM662.5 389.8h2.2v2.2h-2.2zM649.3 376.4h1.9v1.9h-1.9zM725.3 417.2h1.5v1.5h-1.5zM578.7 347.9h1.9v1.9h-1.9zM770.1 424.3h2.0v2.0h-2.0zM643.3 377.0h2.2v2.2h-2.2zM719.4 418.2h1.4v1.4h-1.4zM607.8 347.0h2.6v2.6h-2.6zM591.6 332.8h1.8v1.8h-1.8zM705.4 395.9h1.0v1.0h-1.0zM671.5 390.1h2.3v2.3h-2.3zM763.3 429.8h2.1v2.1h-2.1zM797.5 434.0h1.3v1.3h-1.3zM612.3 363.4h1.1v1.1h-1.1zM607.7 350.3h2.5v2.5h-2.5zM624.8 361.5h2.4v2.4h-2.4zM582.7 334.7h1.8v1.8h-1.8zM765.9 341.4h1.5v1.5h-1.5zM711.0 325.6h1.3v1.3h-1.3zM709.0 317.9h1.4v1.4h-1.4zM741.6 337.3h1.2v1.2h-1.2zM753.7 330.3h2.2v2.2h-2.2zM770.2 344.2h2.4v2.4h-2.4zM768.7 351.6h1.4v1.4h-1.4zM746.9 335.4h1.2v1.2h-1.2zM766.9 349.1h1.1v1.1h-1.1zM784.9 344.1h1.5v1.5h-1.5zM771.4 348.1h2.1v2.1h-2.1zM713.1 326.1h2.2v2.2h-2.2zM714.8 315.9h1.7v1.7h-1.7zM705.0 319.4h1.8v1.8h-1.8zM719.9 326.9h1.2v1.2h-1.2zM776.7 343.9h1.2v1.2h-1.2zM778.8 332.1h1.5v1.5h-1.5zM791.3 345.8h1.2v1.2h-1.2zM769.3 316.4h1.5v1.5h-1.5zM790.4 372.5h1.6v1.6h-1.6zM789.8 362.8h1.3v1.3h-1.3zM753.9 294.5h1.4v1.4h-1.4zM788.3 387.0h2.3v2.3h-2.3zM795.0 417.8h2.0v2.0h-2.0zM788.7 357.5h1.6v1.6h-1.6zM765.1 309.5h1.4v1.4h-1.4zM788.0 382.2h1.1v1.1h-1.1zM792.5 353.6h1.5v1.5h-1.5zM794.5 365.1h1.3v1.3h-1.3zM754.3 303.9h2.1v2.1h-2.1zM772.0 310.4h2.2v2.2h-2.2zM781.7 342.0h1.7v1.7h-1.7zM792.1 375.1h1.9v1.9h-1.9zM786.8 393.6h1.6v1.6h-1.6zM756.5 300.4h1.3v1.3h-1.3zM780.9 326.9h2.1v2.1h-2.1zM770.9 327.3h1.2v1.2h-1.2zM946.7 810.6h2.5v2.5h-2.5zM843.4 736.9h1.5v1.5h-1.5zM866.4 739.9h2.6v2.6h-2.6zM859.7 753.2h2.4v2.4h-2.4zM847.1 787.3h1.8v1.8h-1.8zM856.0 724.0h2.3v2.3h-2.3zM908.3 832.1h1.3v1.3h-1.3zM854.9 721.9h2.1v2.1h-2.1zM928.2 809.2h1.8v1.8h-1.8zM856.9 816.2h2.0v2.0h-2.0zM860.5 740.7h2.2v2.2h-2.2zM872.9 843.2h1.7v1.7h-1.7zM849.1 749.7h1.3v1.3h-1.3zM846.0 833.6h1.3v1.3h-1.3zM924.3 828.7h1.7v1.7h-1.7zM859.0 713.0h2.3v2.3h-2.3zM922.2 823.4h1.4v1.4h-1.4zM896.5 823.0h2.2v2.2h-2.2zM913.1 832.8h1.4v1.4h-1.4zM871.1 833.5h2.5v2.5h-2.5zM840.7 783.2h2.1v2.1h-2.1zM843.7 798.7h2.0v2.0h-2.0zM849.3 792.6h2.6v2.6h-2.6zM946.6 811.7h2.3v2.3h-2.3zM877.8 830.7h2.7v2.7h-2.7zM897.6 831.7h1.2v1.2h-1.2zM900.6 821.6h1.4v1.4h-1.4zM839.6 800.3h1.3v1.3h-1.3zM844.2 758.4h2.6v2.6h-2.6zM840.0 803.2h2.0v2.0h-2.0zM845.5 802.5h2.0v2.0h-2.0zM886.2 820.0h2.3v2.3h-2.3zM919.9 809.7h2.2v2.2h-2.2zM917.6 831.7h2.6v2.6h-2.6zM846.2 760.2h1.7v1.7h-1.7zM841.8 783.8h1.4v1.4h-1.4zM855.2 768.3h2.2v2.2h-2.2zM927.2 819.2h2.2v2.2h-2.2zM853.5 796.7h1.7v1.7h-1.7zM892.4 836.1h1.7v1.7h-1.7zM878.9 820.6h2.5v2.5h-2.5zM847.6 799.0h1.5v1.5h-1.5zM849.6 800.8h1.4v1.4h-1.4zM847.7 756.3h1.8v1.8h-1.8zM872.2 714.8h1.5v1.5h-1.5zM935.1 821.5h2.7v2.7h-2.7zM914.2 831.7h1.9v1.9h-1.9zM868.5 736.7h1.6v1.6h-1.6zM860.3 810.8h1.9v1.9h-1.9zM837.5 818.6h1.6v1.6h-1.6zM850.2 837.6h2.4v2.4h-2.4zM866.9 821.5h1.6v1.6h-1.6zM870.7 736.4h2.1v2.1h-2.1zM882.9 821.7h2.1v2.1h-2.1zM848.6 806.6h1.3v1.3h-1.3zM941.0 800.3h1.5v1.5h-1.5zM836.2 792.8h1.9v1.9h-1.9zM850.3 766.3h2.6v2.6h-2.6zM850.2 814.4h1.5v1.5h-1.5zM860.6 732.7h2.1v2.1h-2.1zM865.5 744.6h2.4v2.4h-2.4zM906.5 828.9h2.2v2.2h-2.2zM836.9 807.4h1.5v1.5h-1.5zM917.7 832.6h1.8v1.8h-1.8zM865.8 827.5h1.6v1.6h-1.6zM869.0 712.2h1.4v1.4h-1.4zM859.1 822.7h2.8v2.8h-2.8zM864.1 729.4h2.2v2.2h-2.2zM837.7 787.4h2.7v2.7h-2.7zM861.0 831.4h2.5v2.5h-2.5zM863.7 737.6h1.4v1.4h-1.4zM862.0 743.4h2.6v2.6h-2.6zM874.1 723.2h2.4v2.4h-2.4zM855.5 817.9h2.2v2.2h-2.2zM873.8 831.8h1.2v1.2h-1.2zM846.7 794.4h1.2v1.2h-1.2zM940.1 820.1h1.7v1.7h-1.7zM938.2 803.0h1.3v1.3h-1.3zM865.7 841.2h1.4v1.4h-1.4zM849.9 823.0h2.5v2.5h-2.5zM856.4 766.8h1.4v1.4h-1.4zM938.2 811.7h1.9v1.9h-1.9zM862.1 823.9h2.3v2.3h-2.3zM856.3 780.4h2.8v2.8h-2.8zM838.9 752.1h1.6v1.6h-1.6zM940.1 810.2h1.3v1.3h-1.3zM861.7 718.4h1.5v1.5h-1.5zM865.0 842.2h1.6v1.6h-1.6zM927.9 812.8h1.5v1.5h-1.5zM858.6 813.3h2.3v2.3h-2.3zM909.7 820.6h2.3v2.3h-2.3zM872.2 731.8h1.4v1.4h-1.4zM847.2 815.1h2.4v2.4h-2.4zM877.7 841.5h1.8v1.8h-1.8zM863.8 830.1h2.2v2.2h-2.2zM868.6 828.6h2.5v2.5h-2.5zM889.9 831.5h2.2v2.2h-2.2zM916.4 831.1h1.3v1.3h-1.3zM858.1 736.1h2.3v2.3h-2.3zM867.7 723.0h1.5v1.5h-1.5zM883.3 838.4h2.6v2.6h-2.6zM889.9 820.7h2.5v2.5h-2.5zM893.5 835.3h2.2v2.2h-2.2zM846.6 730.7h2.1v2.1h-2.1zM860.6 748.9h2.3v2.3h-2.3zM935.3 802.7h2.7v2.7h-2.7zM869.8 834.3h2.8v2.8h-2.8zM841.3 756.2h1.6v1.6h-1.6zM873.4 718.3h1.9v1.9h-1.9zM841.6 739.2h1.3v1.3h-1.3zM854.6 833.0h2.2v2.2h-2.2zM878.9 839.0h1.4v1.4h-1.4zM857.3 777.5h1.8v1.8h-1.8zM858.4 815.8h2.6v2.6h-2.6zM858.6 785.7h2.0v2.0h-2.0zM921.5 818.0h2.8v2.8h-2.8zM847.6 791.9h2.3v2.3h-2.3zM844.6 830.8h1.2v1.2h-1.2zM846.2 757.9h2.7v2.7h-2.7zM855.6 724.0h1.3v1.3h-1.3zM859.9 746.1h2.4v2.4h-2.4zM863.2 729.8h2.8v2.8h-2.8zM875.7 726.4h2.8v2.8h-2.8zM835.0 788.1h1.6v1.6h-1.6zM860.0 828.5h1.7v1.7h-1.7zM922.7 808.9h2.7v2.7h-2.7zM871.3 728.8h2.1v2.1h-2.1zM872.9 727.8h1.6v1.6h-1.6zM854.7 764.3h1.3v1.3h-1.3zM845.8 740.9h2.4v2.4h-2.4zM848.5 794.6h2.6v2.6h-2.6zM846.9 738.4h2.5v2.5h-2.5zM935.2 809.3h1.4v1.4h-1.4zM860.5 766.3h2.2v2.2h-2.2zM891.9 832.7h1.9v1.9h-1.9zM855.9 762.7h1.5v1.5h-1.5zM869.5 730.1h2.7v2.7h-2.7zM924.7 814.6h2.4v2.4h-2.4zM860.1 746.0h2.3v2.3h-2.3zM846.7 834.8h1.2v1.2h-1.2zM928.1 814.0h1.3v1.3h-1.3zM849.6 745.5h1.7v1.7h-1.7zM871.0 718.6h1.7v1.7h-1.7zM856.9 797.0h2.0v2.0h-2.0zM836.3 770.4h2.5v2.5h-2.5zM862.2 743.8h1.5v1.5h-1.5zM842.3 818.4h2.8v2.8h-2.8zM859.4 771.4h1.7v1.7h-1.7zM878.7 827.4h2.7v2.7h-2.7zM852.1 817.0h1.7v1.7h-1.7zM857.7 773.2h2.0v2.0h-2.0zM849.0 751.4h2.2v2.2h-2.2zM859.8 760.6h1.3v1.3h-1.3zM859.3 821.1h2.3v2.3h-2.3zM851.7 741.2h2.7v2.7h-2.7zM931.4 823.3h1.9v1.9h-1.9zM852.1 723.0h1.3v1.3h-1.3zM839.9 773.3h1.8v1.8h-1.8zM946.8 808.0h2.8v2.8h-2.8zM864.3 828.1h1.9v1.9h-1.9zM839.2 819.3h2.3v2.3h-2.3zM842.4 828.9h1.3v1.3h-1.3zM848.0 804.0h1.6v1.6h-1.6zM917.3 831.0h1.8v1.8h-1.8zM849.0 788.7h1.5v1.5h-1.5zM850.1 834.5h2.6v2.6h-2.6zM848.4 823.2h2.2v2.2h-2.2zM890.6 820.2h1.5v1.5h-1.5zM844.2 758.2h1.9v1.9h-1.9zM855.0 744.3h1.6v1.6h-1.6zM852.1 743.3h2.7v2.7h-2.7zM918.7 826.8h2.1v2.1h-2.1zM844.2 746.3h2.5v2.5h-2.5zM868.3 729.8h1.3v1.3h-1.3zM853.9 724.0h1.8v1.8h-1.8zM867.1 740.1h2.2v2.2h-2.2zM839.4 777.6h2.5v2.5h-2.5zM871.2 719.9h2.6v2.6h-2.6zM867.4 715.8h2.0v2.0h-2.0zM848.5 777.0h2.7v2.7h-2.7zM840.5 783.3h1.4v1.4h-1.4zM836.1 818.5h1.7v1.7h-1.7zM914.8 820.1h2.3v2.3h-2.3zM852.5 824.5h2.1v2.1h-2.1zM871.7 833.8h2.0v2.0h-2.0zM857.3 829.9h1.8v1.8h-1.8zM934.3 815.7h1.8v1.8h-1.8zM922.8 824.2h1.5v1.5h-1.5zM913.2 819.1h1.5v1.5h-1.5zM892.5 822.5h1.4v1.4h-1.4zM909.0 832.6h2.1v2.1h-2.1zM849.8 823.3h1.6v1.6h-1.6zM844.5 773.2h2.1v2.1h-2.1zM845.1 760.0h2.7v2.7h-2.7zM835.9 813.7h2.0v2.0h-2.0zM901.2 826.2h2.2v2.2h-2.2zM860.3 826.0h1.4v1.4h-1.4zM841.7 831.4h2.4v2.4h-2.4zM857.2 834.2h2.0v2.0h-2.0zM859.1 759.7h2.8v2.8h-2.8zM856.7 802.8h2.4v2.4h-2.4zM847.4 829.2h1.7v1.7h-1.7zM855.7 740.8h2.5v2.5h-2.5zM854.5 752.5h1.8v1.8h-1.8zM848.9 738.3h1.8v1.8h-1.8zM845.7 761.7h1.5v1.5h-1.5zM882.5 840.6h2.6v2.6h-2.6zM843.7 763.8h2.5v2.5h-2.5zM929.6 810.1h1.5v1.5h-1.5zM872.5 820.7h2.6v2.6h-2.6zM938.1 809.6h2.4v2.4h-2.4zM894.6 823.9h1.5v1.5h-1.5zM889.1 836.6h2.3v2.3h-2.3zM861.4 841.6h1.3v1.3h-1.3zM858.9 765.7h2.6v2.6h-2.6zM936.2 819.6h2.0v2.0h-2.0zM858.1 783.5h2.4v2.4h-2.4zM925.5 812.3h1.6v1.6h-1.6zM892.3 833.8h1.8v1.8h-1.8zM843.9 828.3h2.6v2.6h-2.6zM861.9 834.1h1.5v1.5h-1.5zM857.5 764.2h1.4v1.4h-1.4zM840.4 801.4h1.6v1.6h-1.6zM859.3 745.1h1.6v1.6h-1.6zM858.8 768.7h2.7v2.7h-2.7zM867.4 727.4h2.5v2.5h-2.5zM876.6 733.5h2.2v2.2h-2.2zM852.9 753.5h1.4v1.4h-1.4zM851.6 747.9h2.4v2.4h-2.4zM889.1 835.1h2.6v2.6h-2.6zM855.9 762.7h2.3v2.3h-2.3zM843.5 778.0h2.0v2.0h-2.0zM860.9 751.8h1.7v1.7h-1.7zM849.3 768.5h1.9v1.9h-1.9zM873.8 719.6h1.3v1.3h-1.3zM869.6 721.3h2.4v2.4h-2.4zM853.9 805.0h1.2v1.2h-1.2zM865.1 836.4h2.6v2.6h-2.6zM881.9 833.1h2.7v2.7h-2.7zM850.8 739.5h2.4v2.4h-2.4zM858.1 767.1h2.1v2.1h-2.1zM869.2 824.2h1.5v1.5h-1.5zM859.6 832.8h2.5v2.5h-2.5zM907.8 824.0h2.4v2.4h-2.4zM849.5 725.7h2.6v2.6h-2.6zM928.2 814.4h1.8v1.8h-1.8zM871.3 726.8h2.6v2.6h-2.6zM851.9 774.4h1.6v1.6h-1.6zM945.8 805.9h1.6v1.6h-1.6zM838.7 753.7h2.2v2.2h-2.2zM931.7 812.4h1.5v1.5h-1.5zM925.1 821.6h2.7v2.7h-2.7zM847.9 747.3h1.3v1.3h-1.3zM913.4 814.0h1.7v1.7h-1.7zM867.3 838.5h1.7v1.7h-1.7zM868.8 742.3h1.9v1.9h-1.9zM869.2 740.8h2.0v2.0h-2.0zM857.7 781.4h2.7v2.7h-2.7zM849.1 753.1h1.8v1.8h-1.8zM934.3 803.1h1.3v1.3h-1.3zM858.7 715.1h2.7v2.7h-2.7zM837.4 761.1h1.5v1.5h-1.5zM892.7 825.8h1.7v1.7h-1.7zM926.4 816.2h1.6v1.6h-1.6zM842.0 809.7h1.9v1.9h-1.9zM849.8 752.7h2.7v2.7h-2.7zM853.6 798.1h2.7v2.7h-2.7zM911.7 820.4h1.2v1.2h-1.2zM935.2 825.6h1.9v1.9h-1.9zM851.5 818.5h2.5v2.5h-2.5zM837.9 751.4h2.3v2.3h-2.3zM859.1 814.2h1.7v1.7h-1.7zM859.3 836.1h2.4v2.4h-2.4zM869.8 721.8h1.5v1.5h-1.5zM853.9 754.2h1.6v1.6h-1.6zM862.1 838.2h1.7v1.7h-1.7zM932.8 819.8h2.7v2.7h-2.7zM879.6 821.6h2.1v2.1h-2.1zM865.5 724.0h1.3v1.3h-1.3zM857.0 741.1h2.7v2.7h-2.7zM858.4 740.6h1.6v1.6h-1.6zM839.1 783.8h1.9v1.9h-1.9zM919.7 813.6h1.5v1.5h-1.5zM886.3 829.1h1.5v1.5h-1.5zM853.7 757.8h1.8v1.8h-1.8zM858.7 777.8h1.7v1.7h-1.7zM868.8 735.5h2.5v2.5h-2.5zM838.0 805.8h2.4v2.4h-2.4zM858.7 818.3h1.6v1.6h-1.6zM899.6 830.2h2.2v2.2h-2.2zM875.8 730.2h1.5v1.5h-1.5zM889.5 834.8h1.6v1.6h-1.6zM842.3 784.4h2.2v2.2h-2.2zM856.9 738.6h2.6v2.6h-2.6zM867.2 744.5h2.2v2.2h-2.2zM856.4 736.3h1.9v1.9h-1.9zM860.0 814.8h2.5v2.5h-2.5zM836.7 789.0h2.3v2.3h-2.3zM851.7 780.1h2.3v2.3h-2.3zM861.2 748.4h1.5v1.5h-1.5zM873.9 834.8h1.6v1.6h-1.6zM869.8 830.7h2.7v2.7h-2.7zM855.4 828.4h2.7v2.7h-2.7zM871.6 843.5h1.4v1.4h-1.4zM846.0 752.1h2.0v2.0h-2.0zM846.9 792.0h1.7v1.7h-1.7zM863.4 817.5h2.7v2.7h-2.7zM854.7 775.9h2.7v2.7h-2.7zM859.7 751.9h1.6v1.6h-1.6zM890.0 744.7h1.8v1.8h-1.8zM930.0 754.6h2.1v2.1h-2.1zM887.9 743.3h2.5v2.5h-2.5zM906.3 756.9h1.8v1.8h-1.8zM922.8 744.5h1.3v1.3h-1.3zM865.4 739.8h1.5v1.5h-1.5zM888.9 750.9h2.2v2.2h-2.2zM889.5 752.6h2.3v2.3h-2.3zM888.0 741.8h2.7v2.7h-2.7zM886.0 749.4h1.3v1.3h-1.3zM913.7 751.5h2.7v2.7h-2.7zM885.9 754.2h1.4v1.4h-1.4zM889.4 759.0h1.6v1.6h-1.6zM925.8 744.5h2.1v2.1h-2.1zM931.8 750.9h2.6v2.6h-2.6zM873.5 743.5h1.4v1.4h-1.4zM907.6 754.6h2.4v2.4h-2.4zM879.0 738.9h2.2v2.2h-2.2zM928.6 743.5h1.8v1.8h-1.8zM893.3 751.0h2.1v2.1h-2.1zM919.5 746.8h1.6v1.6h-1.6zM919.5 759.2h2.3v2.3h-2.3zM866.0 752.6h1.3v1.3h-1.3zM873.5 747.2h1.3v1.3h-1.3zM893.0 758.1h2.4v2.4h-2.4zM885.8 750.9h2.0v2.0h-2.0zM892.0 743.6h2.4v2.4h-2.4zM888.3 754.3h2.3v2.3h-2.3zM885.2 755.9h2.1v2.1h-2.1zM900.0 759.5h2.3v2.3h-2.3zM887.2 742.3h1.9v1.9h-1.9zM887.8 753.7h2.1v2.1h-2.1zM876.5 750.5h1.9v1.9h-1.9zM912.6 759.2h1.8v1.8h-1.8zM908.6 757.3h1.3v1.3h-1.3zM898.3 759.6h1.3v1.3h-1.3zM880.5 742.5h2.5v2.5h-2.5zM865.7 745.6h1.6v1.6h-1.6zM887.8 758.0h1.6v1.6h-1.6zM930.9 750.1h1.3v1.3h-1.3zM922.6 753.8h1.5v1.5h-1.5zM882.4 738.5h2.1v2.1h-2.1zM880.7 748.8h2.3v2.3h-2.3zM883.6 741.0h1.3v1.3h-1.3zM873.6 741.1h2.5v2.5h-2.5zM914.4 756.1h1.5v1.5h-1.5zM922.0 742.5h1.2v1.2h-1.2zM883.7 748.8h1.7v1.7h-1.7zM890.1 748.4h1.9v1.9h-1.9zM878.9 744.7h2.5v2.5h-2.5zM875.3 744.0h1.3v1.3h-1.3zM888.8 755.8h2.5v2.5h-2.5zM921.7 742.2h2.7v2.7h-2.7zM918.2 744.8h1.3v1.3h-1.3zM892.4 755.2h1.6v1.6h-1.6zM913.2 759.5h2.3v2.3h-2.3zM912.9 754.9h2.0v2.0h-2.0zM889.4 750.1h2.0v2.0h-2.0zM924.8 746.7h1.9v1.9h-1.9zM870.8 738.9h1.7v1.7h-1.7zM926.1 744.4h2.2v2.2h-2.2zM871.2 744.3h2.6v2.6h-2.6zM917.4 743.5h1.4v1.4h-1.4zM915.8 744.4h1.5v1.5h-1.5zM913.0 749.1h1.6v1.6h-1.6zM880.0 743.5h2.0v2.0h-2.0zM872.8 742.8h1.2v1.2h-1.2zM900.1 757.2h1.5v1.5h-1.5zM919.9 744.5h2.5v2.5h-2.5zM897.5 744.9h2.2v2.2h-2.2zM902.6 756.8h1.6v1.6h-1.6zM866.7 746.9h1.7v1.7h-1.7zM906.3 760.3h2.3v2.3h-2.3zM886.6 748.1h2.1v2.1h-2.1zM908.0 757.8h2.4v2.4h-2.4zM881.1 749.8h1.5v1.5h-1.5zM869.2 743.3h1.2v1.2h-1.2zM919.0 749.9h2.8v2.8h-2.8zM953.4 806.8h2.1v2.1h-2.1zM946.3 800.1h2.4v2.4h-2.4zM975.4 822.9h2.4v2.4h-2.4zM965.0 840.9h1.8v1.8h-1.8zM956.2 828.1h1.3v1.3h-1.3zM964.5 820.8h1.3v1.3h-1.3zM941.3 795.7h2.4v2.4h-2.4zM973.9 833.5h1.6v1.6h-1.6zM960.9 813.3h2.0v2.0h-2.0zM942.7 809.4h1.7v1.7h-1.7zM958.0 807.1h1.6v1.6h-1.6zM962.3 808.7h1.5v1.5h-1.5zM948.0 808.2h1.6v1.6h-1.6zM943.1 816.1h1.9v1.9h-1.9zM947.9 812.8h1.9v1.9h-1.9zM960.9 826.0h2.1v2.1h-2.1zM943.9 820.3h2.5v2.5h-2.5zM962.3 830.4h1.5v1.5h-1.5zM946.9 821.6h2.2v2.2h-2.2zM943.6 795.6h1.9v1.9h-1.9zM970.1 821.3h1.8v1.8h-1.8zM941.5 819.4h1.3v1.3h-1.3zM931.8 790.5h2.3v2.3h-2.3zM937.2 791.7h2.4v2.4h-2.4zM946.3 816.9h2.1v2.1h-2.1zM955.6 815.6h1.8v1.8h-1.8zM956.9 831.2h1.9v1.9h-1.9zM964.5 838.9h1.7v1.7h-1.7zM978.3 836.9h1.9v1.9h-1.9zM966.4 809.5h1.9v1.9h-1.9zM939.7 797.5h1.9v1.9h-1.9zM942.7 809.5h1.3v1.3h-1.3zM950.2 816.1h2.4v2.4h-2.4zM976.5 827.6h1.2v1.2h-1.2zM966.3 809.8h1.7v1.7h-1.7zM967.0 833.5h1.2v1.2h-1.2zM932.0 796.6h1.4v1.4h-1.4zM957.7 827.4h2.6v2.6h-2.6zM941.5 809.4h1.3v1.3h-1.3zM970.5 835.4h1.8v1.8h-1.8zM963.3 825.6h2.4v2.4h-2.4zM972.2 822.8h1.3v1.3h-1.3zM932.6 808.0h1.4v1.4h-1.4zM955.6 825.2h1.3v1.3h-1.3zM932.9 811.1h1.3v1.3h-1.3zM945.0 826.4h1.3v1.3h-1.3zM967.2 815.6h2.1v2.1h-2.1zM948.3 800.7h1.6v1.6h-1.6zM942.2 815.1h2.4v2.4h-2.4zM958.2 824.2h1.2v1.2h-1.2zM973.0 830.7h1.9v1.9h-1.9zM958.9 830.2h2.0v2.0h-2.0zM953.5 811.2h1.8v1.8h-1.8zM953.0 828.4h1.7v1.7h-1.7zM978.6 840.4h1.8v1.8h-1.8zM962.7 806.7h1.5v1.5h-1.5zM953.5 828.0h2.5v2.5h-2.5zM950.6 794.9h1.6v1.6h-1.6zM941.8 814.9h2.3v2.3h-2.3zM933.6 810.5h1.5v1.5h-1.5zM966.6 818.2h2.2v2.2h-2.2zM952.8 798.8h2.3v2.3h-2.3zM964.5 840.2h1.3v1.3h-1.3zM973.5 843.1h1.3v1.3h-1.3zM947.1 823.0h2.5v2.5h-2.5zM951.7 817.6h1.6v1.6h-1.6zM981.4 829.5h1.5v1.5h-1.5zM960.9 832.2h1.5v1.5h-1.5zM953.0 821.2h1.3v1.3h-1.3zM942.7 820.4h2.2v2.2h-2.2zM967.3 835.6h2.6v2.6h-2.6zM942.8 799.4h2.5v2.5h-2.5zM961.5 823.3h1.9v1.9h-1.9zM970.7 822.9h2.0v2.0h-2.0zM952.0 812.6h1.6v1.6h-1.6zM963.1 812.7h2.5v2.5h-2.5zM937.9 808.1h2.2v2.2h-2.2zM935.6 809.5h1.9v1.9h-1.9zM979.1 834.5h1.4v1.4h-1.4zM938.1 807.0h2.0v2.0h-2.0zM963.5 827.3h1.6v1.6h-1.6zM940.5 813.1h1.5v1.5h-1.5zM947.6 798.1h2.1v2.1h-2.1zM959.5 823.7h2.5v2.5h-2.5zM947.6 824.2h2.3v2.3h-2.3zM943.5 820.2h1.2v1.2h-1.2zM958.3 837.1h1.5v1.5h-1.5zM960.8 813.6h2.3v2.3h-2.3zM931.1 809.1h2.1v2.1h-2.1zM974.7 817.4h2.2v2.2h-2.2zM966.6 837.2h1.3v1.3h-1.3zM967.7 831.0h2.2v2.2h-2.2zM965.7 808.7h1.7v1.7h-1.7zM951.4 813.4h2.5v2.5h-2.5zM949.4 813.8h1.2v1.2h-1.2zM974.6 822.1h2.4v2.4h-2.4zM948.1 811.7h1.3v1.3h-1.3zM938.5 806.7h2.3v2.3h-2.3zM963.6 835.3h1.3v1.3h-1.3zM945.0 809.5h1.2v1.2h-1.2zM966.0 821.8h1.3v1.3h-1.3zM974.9 832.8h1.6v1.6h-1.6zM965.0 807.3h1.9v1.9h-1.9zM959.5 827.1h1.6v1.6h-1.6zM945.3 806.8h1.4v1.4h-1.4zM956.2 820.3h2.2v2.2h-2.2zM978.2 839.5h2.4v2.4h-2.4zM956.1 817.9h1.3v1.3h-1.3zM956.5 831.8h1.7v1.7h-1.7zM939.5 818.8h2.4v2.4h-2.4zM963.5 809.1h2.2v2.2h-2.2zM970.2 812.6h2.3v2.3h-2.3zM930.5 813.2h1.3v1.3h-1.3zM948.5 823.1h1.5v1.5h-1.5zM951.2 824.3h2.2v2.2h-2.2zM940.6 816.2h1.4v1.4h-1.4zM945.7 819.0h1.9v1.9h-1.9zM944.6 826.3h2.6v2.6h-2.6zM939.0 803.1h1.5v1.5h-1.5zM960.1 804.2h1.4v1.4h-1.4zM939.6 804.7h2.5v2.5h-2.5zM978.9 826.2h1.4v1.4h-1.4zM934.8 812.4h2.6v2.6h-2.6zM952.0 816.2h2.0v2.0h-2.0zM970.7 822.7h2.3v2.3h-2.3zM946.8 795.9h2.5v2.5h-2.5zM967.8 809.3h1.9v1.9h-1.9zM961.6 821.4h2.3v2.3h-2.3zM959.5 837.3h2.0v2.0h-2.0zM948.2 810.8h2.2v2.2h-2.2zM968.1 816.1h1.7v1.7h-1.7zM943.8 823.7h2.1v2.1h-2.1zM967.5 839.4h2.4v2.4h-2.4zM961.9 839.5h2.3v2.3h-2.3zM960.8 811.0h2.0v2.0h-2.0zM961.9 810.8h2.4v2.4h-2.4zM932.5 801.5h2.0v2.0h-2.0zM949.9 818.8h1.9v1.9h-1.9zM961.6 815.9h1.7v1.7h-1.7zM969.0 822.9h1.8v1.8h-1.8zM966.1 841.1h2.3v2.3h-2.3zM944.3 811.3h2.0v2.0h-2.0zM947.9 818.2h1.4v1.4h-1.4zM955.6 802.6h2.4v2.4h-2.4zM978.1 828.7h2.2v2.2h-2.2zM962.2 804.1h2.4v2.4h-2.4zM943.7 816.7h1.4v1.4h-1.4zM960.0 815.2h1.6v1.6h-1.6zM962.0 826.2h1.7v1.7h-1.7zM943.7 938.5h1.0v1.0h-1.0zM940.4 890.4h1.3v1.3h-1.3zM916.0 843.9h1.0v1.0h-1.0zM941.1 936.9h1.8v1.8h-1.8zM950.0 904.5h1.8v1.8h-1.8zM917.1 844.9h2.0v2.0h-2.0zM922.6 866.7h1.5v1.5h-1.5zM935.7 881.8h1.9v1.9h-1.9zM943.2 920.4h1.1v1.1h-1.1zM917.3 883.9h1.8v1.8h-1.8zM917.6 898.2h1.9v1.9h-1.9zM937.3 925.8h1.9v1.9h-1.9zM924.0 886.4h1.7v1.7h-1.7zM936.5 878.1h2.0v2.0h-2.0zM935.0 913.8h1.5v1.5h-1.5zM935.4 901.9h1.9v1.9h-1.9zM919.4 861.5h1.6v1.6h-1.6zM939.4 916.8h1.2v1.2h-1.2zM946.6 906.5h1.3v1.3h-1.3zM926.3 884.3h1.4v1.4h-1.4zM925.9 882.9h1.7v1.7h-1.7zM935.6 920.1h1.2v1.2h-1.2zM949.1 915.0h1.1v1.1h-1.1zM941.9 932.8h1.6v1.6h-1.6zM932.3 868.5h1.5v1.5h-1.5zM952.3 910.7h1.0v1.0h-1.0zM912.9 865.7h1.8v1.8h-1.8zM926.2 898.6h0.8v0.8h-0.8zM922.6 868.1h1.9v1.9h-1.9zM918.0 898.3h1.3v1.3h-1.3zM937.0 875.1h1.4v1.4h-1.4zM914.5 873.6h1.6v1.6h-1.6zM920.9 880.3h1.9v1.9h-1.9zM919.6 900.6h1.2v1.2h-1.2zM922.4 866.2h1.0v1.0h-1.0zM918.3 891.2h1.8v1.8h-1.8zM917.3 852.3h1.8v1.8h-1.8zM936.0 881.2h1.4v1.4h-1.4zM927.7 902.4h1.4v1.4h-1.4zM920.1 876.2h2.0v2.0h-2.0zM942.1 910.8h1.8v1.8h-1.8zM915.8 882.2h1.7v1.7h-1.7zM939.5 913.9h0.9v0.9h-0.9zM945.8 916.5h0.9v0.9h-0.9zM934.0 870.3h1.0v1.0h-1.0zM900.2 842.2h1.2v1.2h-1.2zM935.1 918.0h1.8v1.8h-1.8zM941.0 901.0h0.8v0.8h-0.8zM912.7 854.2h1.3v1.3h-1.3zM936.4 902.4h1.1v1.1h-1.1zM940.8 900.0h1.7v1.7h-1.7zM931.4 906.0h1.7v1.7h-1.7zM949.5 922.8h1.9v1.9h-1.9zM939.6 927.6h0.8v0.8h-0.8zM918.9 864.2h1.6v1.6h-1.6zM902.8 848.0h1.7v1.7h-1.7zM929.5 886.9h1.1v1.1h-1.1zM948.9 912.6h1.8v1.8h-1.8zM922.8 873.1h1.4v1.4h-1.4zM947.6 929.4h1.1v1.1h-1.1zM919.6 883.4h1.0v1.0h-1.0zM914.8 895.5h1.3v1.3h-1.3zM911.9 860.3h1.8v1.8h-1.8zM914.7 890.3h0.9v0.9h-0.9zM944.3 934.5h1.1v1.1h-1.1zM916.0 898.8h1.9v1.9h-1.9zM912.1 855.7h1.3v1.3h-1.3zM915.3 884.2h1.4v1.4h-1.4zM948.7 910.6h1.9v1.9h-1.9zM937.2 885.0h0.9v0.9h-0.9zM917.6 863.9h0.9v0.9h-0.9zM940.7 881.9h1.1v1.1h-1.1zM931.4 879.2h2.0v2.0h-2.0zM946.4 910.6h0.8v0.8h-0.8zM935.2 908.6h1.1v1.1h-1.1zM947.8 926.6h1.6v1.6h-1.6zM914.4 860.9h1.0v1.0h-1.0zM923.4 907.0h1.8v1.8h-1.8zM920.2 866.7h1.1v1.1h-1.1zM932.9 922.9h1.5v1.5h-1.5zM910.1 862.7h1.1v1.1h-1.1zM926.4 917.2h1.6v1.6h-1.6zM912.2 885.8h1.7v1.7h-1.7zM919.6 878.8h1.6v1.6h-1.6zM924.6 879.5h1.7v1.7h-1.7zM931.7 891.7h1.8v1.8h-1.8zM933.7 869.3h1.5v1.5h-1.5zM933.2 903.6h1.6v1.6h-1.6zM934.1 919.1h1.4v1.4h-1.4zM952.1 914.7h1.3v1.3h-1.3zM933.8 931.0h1.1v1.1h-1.1zM950.0 927.9h1.4v1.4h-1.4zM913.0 878.8h1.2v1.2h-1.2zM919.2 873.1h1.1v1.1h-1.1zM938.5 930.2h1.8v1.8h-1.8zM905.7 853.1h1.3v1.3h-1.3zM930.3 878.4h1.5v1.5h-1.5zM925.5 858.7h1.7v1.7h-1.7zM918.4 857.6h1.9v1.9h-1.9zM903.6 852.9h1.0v1.0h-1.0zM922.7 892.8h1.6v1.6h-1.6zM950.9 932.9h1.7v1.7h-1.7zM949.1 921.6h1.3v1.3h-1.3zM929.2 915.9h0.9v0.9h-0.9zM932.2 892.9h1.1v1.1h-1.1zM928.0 924.1h1.7v1.7h-1.7zM928.6 890.0h1.4v1.4h-1.4zM939.2 906.8h1.4v1.4h-1.4zM923.0 903.6h1.7v1.7h-1.7zM930.8 876.8h1.2v1.2h-1.2zM932.7 919.0h1.9v1.9h-1.9zM932.0 881.7h1.4v1.4h-1.4zM949.7 943.9h1.1v1.1h-1.1zM937.2 911.3h1.0v1.0h-1.0zM933.4 893.9h1.2v1.2h-1.2zM908.5 871.7h0.9v0.9h-0.9zM937.3 923.7h1.8v1.8h-1.8zM931.8 889.5h1.7v1.7h-1.7zM926.7 906.0h1.6v1.6h-1.6zM935.6 891.4h1.3v1.3h-1.3zM948.6 902.0h1.5v1.5h-1.5zM916.1 862.9h1.8v1.8h-1.8zM915.4 857.2h1.0v1.0h-1.0zM950.4 903.8h1.3v1.3h-1.3zM922.9 884.7h1.4v1.4h-1.4zM947.4 942.8h1.6v1.6h-1.6z" fill="#febb4f"/>
<path d="M887.1 841.4h2.2v2.2h-2.2zM881.8 823.9h1.3v1.3h-1.3zM866.9 822.1h1.9v1.9h-1.9zM846.1 762.9h1.9v1.9h-1.9zM943.9 816.4h2.5v2.5h-2.5zM858.0 729.9h2.0v2.0h-2.0zM894.3 818.9h2.6v2.6h-2.6zM856.2 788.2h1.7v1.7h-1.7zM845.0 826.7h2.1v2.1h-2.1zM856.3 738.8h2.5v2.5h-2.5zM841.1 768.3h2.1v2.1h-2.1zM841.5 798.7h1.3v1.3h-1.3zM903.2 834.1h1.6v1.6h-1.6zM900.1 818.8h1.6v1.6h-1.6zM859.2 828.0h2.1v2.1h-2.1zM856.1 741.7h2.3v2.3h-2.3zM835.5 803.7h1.9v1.9h-1.9zM935.2 820.6h2.3v2.3h-2.3zM844.1 731.3h2.3v2.3h-2.3zM934.3 812.4h1.3v1.3h-1.3zM876.2 825.6h2.5v2.5h-2.5zM871.9 822.6h2.1v2.1h-2.1zM867.9 722.9h1.8v1.8h-1.8zM882.3 835.4h2.8v2.8h-2.8zM925.2 807.8h1.5v1.5h-1.5zM860.2 748.3h2.3v2.3h-2.3zM838.4 789.9h2.0v2.0h-2.0zM848.1 834.4h2.1v2.1h-2.1zM844.7 807.9h2.5v2.5h-2.5zM931.7 746.3h2.2v2.2h-2.2zM919.9 749.9h1.3v1.3h-1.3zM884.6 749.4h2.5v2.5h-2.5zM902.2 745.3h2.5v2.5h-2.5zM908.5 753.7h1.3v1.3h-1.3zM915.6 756.5h1.4v1.4h-1.4zM896.3 759.0h1.6v1.6h-1.6zM877.4 741.5h1.8v1.8h-1.8zM918.6 757.3h2.2v2.2h-2.2zM905.6 750.1h2.3v2.3h-2.3zM931.0 748.8h1.2v1.2h-1.2zM890.1 760.4h2.1v2.1h-2.1zM891.7 760.2h1.6v1.6h-1.6zM865.1 748.5h2.5v2.5h-2.5zM906.2 758.8h1.7v1.7h-1.7zM951.9 798.3h1.9v1.9h-1.9zM937.2 819.7h1.3v1.3h-1.3zM934.1 793.5h2.3v2.3h-2.3zM954.6 831.5h2.1v2.1h-2.1zM961.3 805.3h2.0v2.0h-2.0zM938.3 808.7h2.0v2.0h-2.0zM972.7 816.7h1.7v1.7h-1.7zM949.9 827.7h1.6v1.6h-1.6zM955.5 813.3h2.0v2.0h-2.0zM962.8 830.0h1.3v1.3h-1.3zM935.1 797.8h1.5v1.5h-1.5zM970.6 813.0h2.1v2.1h-2.1zM971.1 833.6h2.3v2.3h-2.3z" fill="#3052c9"/>
<path d="M716 451.4 C717.2 450.1 720.5 451.6 723.0 452.4 C725.5 453.2 728.6 454.3 731.0 456.0 C733.4 457.7 736.3 459.2 737.4 462.5 C738.5 465.8 737.8 471.8 737.8 476.0 C737.8 480.2 738.3 484.4 737.4 487.7 C736.5 491.0 733.8 494.8 732.3 495.8 C730.8 496.8 729.7 496.1 728.3 493.8 C726.9 491.5 725.5 485.9 724.0 482.0 C722.5 478.1 720.5 474.3 719.2 470.6 C717.9 466.9 716.5 463.2 716.0 460.0 C715.5 456.8 714.8 452.7 716.0 451.4 Z" fill="#f28a22" opacity="0.9"/>
<path d="M886.7 858 C887.2 856.2 888.6 852.5 890.0 851.0 C891.4 849.5 893.5 850.3 895.0 849.0 C896.5 847.7 897.5 844.6 899.0 843.0 C900.5 841.4 902.8 839.2 904.0 839.5 C905.2 839.8 906.3 842.9 906.0 845.0 C905.7 847.1 903.5 850.2 902.0 852.0 C900.5 853.8 898.7 854.3 897.0 856.0 C895.3 857.7 893.7 861.0 892.0 862.0 C890.3 863.0 887.9 862.7 887.0 862.0 C886.1 861.3 886.2 859.8 886.7 858.0 Z" fill="#3052c9"/>
<path d="M926 807 C926.7 805.8 929.7 804.2 932.0 804.0 C934.3 803.8 939.5 804.8 940.0 806.0 C940.5 807.2 937.0 810.2 935.0 811.0 C933.0 811.8 929.5 811.7 928.0 811.0 C926.5 810.3 925.3 808.2 926.0 807.0 Z" fill="#3052c9"/>
<path d="M872 742 C872.7 741.2 876.7 740.5 878.0 741.0 C879.3 741.5 880.7 744.2 880.0 745.0 C879.3 745.8 875.3 746.5 874.0 746.0 C872.7 745.5 871.3 742.8 872.0 742.0 Z" fill="#3052c9"/>
<path d="M896 840 C896.3 839.0 899.0 837.7 900.0 838.0 C901.0 838.3 902.3 841.0 902.0 842.0 C901.7 843.0 899.0 844.3 898.0 844.0 C897.0 843.7 895.7 841.0 896.0 840.0 Z" fill="#3052c9"/>
<path d="M920 830 C920.8 829.0 924.8 827.5 926.0 828.0 C927.2 828.5 927.8 832.0 927.0 833.0 C926.2 834.0 922.2 834.5 921.0 834.0 C919.8 833.5 919.2 831.0 920.0 830.0 Z" fill="#3052c9"/>
<rect x="624.3" y="339" width="13" height="4.5" fill="#52b546"/>
<rect x="642.7" y="337" width="8.5" height="5" fill="#52b546"/>
<rect x="650" y="333" width="10" height="3" fill="#52b546"/>
<rect x="607.8" y="332.5" width="3.5" height="2" fill="#52b546"/>
<g><circle cx="549.5" cy="294" r="25" fill="rgba(241,211,87,0.6)" opacity="1"/><circle cx="549.5" cy="294" r="18.75" fill="rgba(240,194,12,0.6)" opacity="1"/><text x="549.5" y="299.4" font-family="Liberation Sans" font-size="15" text-anchor="middle" fill="#222" opacity="0.25">10</text></g>
<g><circle cx="546.8" cy="301.7" r="25" fill="rgba(241,211,87,0.6)" opacity="1"/><circle cx="546.8" cy="301.7" r="18.75" fill="rgba(240,194,12,0.6)" opacity="1"/><text x="546.8" y="307.1" font-family="Liberation Sans" font-size="15" text-anchor="middle" fill="#222" opacity="1">18</text></g>
<g><circle cx="648.5" cy="359.5" r="25" fill="rgba(241,211,87,0.6)" opacity="1"/><circle cx="648.5" cy="359.5" r="18.75" fill="rgba(240,194,12,0.6)" opacity="1"/><text x="648.5" y="364.9" font-family="Liberation Sans" font-size="15" text-anchor="middle" fill="#222" opacity="0.25">77</text></g>
<g><circle cx="655.8" cy="366.8" r="25" fill="rgba(241,211,87,0.6)" opacity="1"/><circle cx="655.8" cy="366.8" r="18.75" fill="rgba(240,194,12,0.6)" opacity="1"/><text x="655.8" y="372.2" font-family="Liberation Sans" font-size="15" text-anchor="middle" fill="#222" opacity="1">41</text></g>
<g><circle cx="718.5" cy="424.9" r="25" fill="rgba(241,211,87,0.6)" opacity="1"/><circle cx="718.5" cy="424.9" r="18.75" fill="rgba(240,194,12,0.6)" opacity="1"/><text x="718.5" y="430.3" font-family="Liberation Sans" font-size="15" text-anchor="middle" fill="#222" opacity="0.25">56</text></g>
<g><circle cx="724.7" cy="437.3" r="25" fill="rgba(241,211,87,0.6)" opacity="1"/><circle cx="724.7" cy="437.3" r="18.75" fill="rgba(240,194,12,0.6)" opacity="1"/><text x="724.7" y="442.7" font-family="Liberation Sans" font-size="15" text-anchor="middle" fill="#222" opacity="1">42</text></g>
<g><circle cx="738" cy="476.3" r="25" fill="rgba(241,211,87,0.6)" opacity="1"/><circle cx="738" cy="476.3" r="18.75" fill="rgba(240,194,12,0.6)" opacity="1"/><text x="738" y="481.7" font-family="Liberation Sans" font-size="15" text-anchor="middle" fill="#222" opacity="1">46</text></g>
<g><circle cx="910.3" cy="720.8" r="25" fill="rgba(241,211,87,0.6)" opacity="1"/><circle cx="910.3" cy="720.8" r="18.75" fill="rgba(240,194,12,0.6)" opacity="1"/><text x="910.3" y="726.2" font-family="Liberation Sans" font-size="15" text-anchor="middle" fill="#222" opacity="1">13</text></g>
<g><circle cx="924" cy="764.8" r="25" fill="rgba(241,211,87,0.6)" opacity="1"/><circle cx="924" cy="764.8" r="18.75" fill="rgba(240,194,12,0.6)" opacity="1"/><text x="924" y="770.2" font-family="Liberation Sans" font-size="15" text-anchor="middle" fill="#222" opacity="0.75">79</text></g>
<g><circle cx="916" cy="786" r="25" fill="rgba(241,211,87,0.6)" opacity="1"/><circle cx="916" cy="786" r="18.75" fill="rgba(240,194,12,0.6)" opacity="1"/><text x="916" y="791.4" font-family="Liberation Sans" font-size="15" text-anchor="middle" fill="#222" opacity="1">65</text></g>
<g><circle cx="944.5" cy="845.5" r="25" fill="rgba(241,211,87,0.6)" opacity="1"/><circle cx="944.5" cy="845.5" r="18.75" fill="rgba(240,194,12,0.6)" opacity="1"/><text x="944.5" y="850.9" font-family="Liberation Sans" font-size="15" text-anchor="middle" fill="#222" opacity="0.75">89</text></g>
<g><circle cx="957" cy="862" r="25" fill="rgba(241,211,87,0.6)" opacity="1"/><circle cx="957" cy="862" r="18.75" fill="rgba(240,194,12,0.6)" opacity="1"/><text x="957" y="867.4" font-family="Liberation Sans" font-size="15" text-anchor="middle" fill="#222" opacity="0.6">83</text></g>
<g><circle cx="968" cy="879" r="25" fill="rgba(241,211,87,0.6)" opacity="1"/><circle cx="968" cy="879" r="18.75" fill="rgba(240,194,12,0.6)" opacity="1"/><text x="968" y="884.4" font-family="Liberation Sans" font-size="15" text-anchor="middle" fill="#222" opacity="1">71</text></g>
</svg><!--/MAP-->
<div id="hdr">
 <div id="title">CaPFish</div>
 <div id="sub">Consulting Services For Aquaculture GIS And Aquaculture Database</div>
 <div id="navsel"></div>
 <div class="nav" style="left:598px;color:#1f5a96">Interactive map</div>
 <div class="nav" style="left:760px">Analysis</div>
 <div class="nav" style="left:865px">About</div>
</div>
<div id="map">
</div>
<div id="ctrls">
 <div id="zoomc"><div class="zb">+</div><div class="zb zm"></div></div>
 <div id="layc"><svg width="34" height="33" viewBox="0 0 34 33" style="position:absolute;left:11.8px;top:13.3px">
  <path d="M0 21.5 L17 11 L34 21.5 L17 32 Z" fill="#b9b9b9"/>
  <path d="M0 21.5 L17 32 L34 21.5 L34 22.5 L17 33 L0 22.5 Z" fill="#9a9a9a"/>
  <path d="M0 16 L17 5.5 L34 16 L17 26.5 Z" fill="#d2d2d2"/>
  <path d="M0 16 L17 26.5 L34 16 L34 17.3 L17 27.8 L0 17.3 Z" fill="#8f8f8f"/>
  <path d="M0 11 L17 0.5 L34 11 L17 21.5 Z" fill="#e6e6e6"/>
  <path d="M0 11 L17 21.5 L34 11 L34 12.3 L17 22.8 L0 12.3 Z" fill="#888"/>
  <path d="M6 11 L17 4.2 L28 11 L17 17.8 Z" fill="#dadada"/>
 </svg></div>
 <div id="measc"><svg width="20" height="20" viewBox="0 0 20 20" style="position:absolute;left:19px;top:18px">
  <path d="M0 0 H5 V15 H20 V20 H0 Z" fill="#000"/><path d="M6 0 H20 V14 H18.5 V1.5 H6 Z" fill="#000"/>
  <path d="M3.5 3 H5 M3.5 6 H5 M3.5 9 H5 M3.5 12 H5 M8 15 V16.5 M11 15 V16.5 M14 15 V16.5 M17 15 V16.5" stroke="#fff" stroke-width="1.2"/>
 </svg></div>
 <div id="brushc"><svg width="22" height="20" viewBox="0 0 22 20" style="position:absolute;left:17px;top:7px">
  <path d="M19.5 0.8 L12 8.3" stroke="#666" stroke-width="1.8" stroke-linecap="round"/>
  <path d="M10.5 6.8 L13.5 9.8" stroke="#666" stroke-width="2"/>
  <path d="M9 8.8 C6 8.5 4 10.5 4.5 13 L0 17.5 L6 17.5 C9.5 17.5 11.5 15.5 11.5 12 Z" fill="#666"/>
 </svg></div>
 <div id="scale"><div class="sl1">50 km</div><div class="sl2">30 mi</div></div>
 <div id="toggle"><svg width="22" height="20" viewBox="0 0 22 20" style="position:absolute;left:18px;top:14px"><path d="M2 2 L10 10 L2 18 M12 2 L20 10 L12 18" fill="none" stroke="#0b5a96" stroke-width="3.2" stroke-linecap="round" stroke-linejoin="round"/></svg></div>
 <div id="logos"><svg width="430" height="61" viewBox="0 0 430 61" style="position:absolute;left:0;top:0">
 <defs>
  <linearGradient id="afdg" x1="0" y1="0" x2="1" y2="0.3"><stop offset="0" stop-color="#2a1f80"/><stop offset="0.45" stop-color="#3a2a88"/><stop offset="0.75" stop-color="#c23b4a"/><stop offset="1" stop-color="#ee3325"/></linearGradient>
  <linearGradient id="afdi" x1="0" y1="1" x2="1" y2="0"><stop offset="0" stop-color="#f6b08a"/><stop offset="1" stop-color="#b9b8e6"/></linearGradient>
 </defs>
 <circle cx="30.8" cy="30" r="29" fill="#ef9a36"/>
 <circle cx="30.8" cy="30" r="26" fill="none" stroke="#f3b848" stroke-width="4" stroke-dasharray="2 1.5"/>
 <path d="M5.3 43 A29 29 0 0 0 56.3 43 L49.5 40 A22 22 0 0 1 12.1 40 Z" fill="#e8262a"/>
 <path d="M14 49 A22 22 0 0 0 47.6 49" fill="none" stroke="#fff" stroke-width="1.6" stroke-dasharray="1.5 1"/>
 <circle cx="30.8" cy="29" r="22.8" fill="#5aa9e0"/>
 <path d="M9 38 L52.6 38 L50 45 Q30.8 58 11.6 45 Z" fill="#223f8c"/>
 <path d="M10 41 a5 5 0 0 1 10 0 a5 5 0 0 1 10 0 a5 5 0 0 1 10 0 a5 5 0 0 1 10 0" fill="none" stroke="#eaf4fb" stroke-width="1.4"/>
 <path d="M15 47 a5 5 0 0 1 10 0 a5 5 0 0 1 10 0 a5 5 0 0 1 10 0" fill="none" stroke="#8cc8ee" stroke-width="2"/>
 <path d="M13 38 Q19 29 24 33 Q27 35 30 38 Z" fill="#3b9a3c"/><path d="M31.5 38 Q36 31 40 32 Q45 33 49 38 Z" fill="#3b9a3c"/>
 <path d="M12 37 C14 26 19 17 27 13 L29 15 C24 21 19 29 16 39 Z" fill="#f4f1e8"/>
 <path d="M49.6 37 C47.6 26 42.6 17 34.6 13 L32.6 15 C37.6 21 42.6 29 45.6 39 Z" fill="#f4f1e8"/>
 <path d="M29.5 11 L32.1 11 L33.2 24 L32 27 L33 39 L30.8 44 L28.6 39 L29.6 27 L28.4 24 Z" fill="#2a5aa8"/>
 <path d="M29.2 26 L32.4 26 L32.8 38 L30.8 43 L28.8 38 Z" fill="#e6b52c"/>
 <rect x="64.7" y="1" width="86.3" height="57.8" fill="#003399"/>
 <polygon points="107.70,7.60 108.43,9.59 110.55,9.67 108.89,10.99 109.46,13.03 107.70,11.85 105.94,13.03 106.51,10.99 104.85,9.67 106.97,9.59" fill="#ffcc00"/><polygon points="117.30,10.17 118.03,12.16 120.15,12.25 118.49,13.56 119.06,15.60 117.30,14.42 115.54,15.60 116.11,13.56 114.45,12.25 116.57,12.16" fill="#ffcc00"/><polygon points="124.33,17.20 125.06,19.19 127.18,19.27 125.52,20.59 126.09,22.63 124.33,21.45 122.56,22.63 123.14,20.59 121.47,19.27 123.59,19.19" fill="#ffcc00"/><polygon points="126.90,26.80 127.63,28.79 129.75,28.87 128.09,30.19 128.66,32.23 126.90,31.05 125.14,32.23 125.71,30.19 124.05,28.87 126.17,28.79" fill="#ffcc00"/><polygon points="124.33,36.40 125.06,38.39 127.18,38.47 125.52,39.79 126.09,41.83 124.33,40.65 122.56,41.83 123.14,39.79 121.47,38.47 123.59,38.39" fill="#ffcc00"/><polygon points="117.30,43.43 118.03,45.42 120.15,45.50 118.49,46.81 119.06,48.85 117.30,47.68 115.54,48.85 116.11,46.81 114.45,45.50 116.57,45.42" fill="#ffcc00"/><polygon points="107.70,46.00 108.43,47.99 110.55,48.07 108.89,49.39 109.46,51.43 107.70,50.25 105.94,51.43 106.51,49.39 104.85,48.07 106.97,47.99" fill="#ffcc00"/><polygon points="98.10,43.43 98.83,45.42 100.95,45.50 99.29,46.81 99.86,48.85 98.10,47.68 96.34,48.85 96.91,46.81 95.25,45.50 97.37,45.42" fill="#ffcc00"/><polygon points="91.07,36.40 91.81,38.39 93.93,38.47 92.26,39.79 92.84,41.83 91.07,40.65 89.31,41.83 89.88,39.79 88.22,38.47 90.34,38.39" fill="#ffcc00"/><polygon points="88.50,26.80 89.23,28.79 91.35,28.87 89.69,30.19 90.26,32.23 88.50,31.05 86.74,32.23 87.31,30.19 85.65,28.87 87.77,28.79" fill="#ffcc00"/><polygon points="91.07,17.20 91.81,19.19 93.93,19.27 92.26,20.59 92.84,22.63 91.07,21.45 89.31,22.63 89.88,20.59 88.22,19.27 90.34,19.19" fill="#ffcc00"/><polygon points="98.10,10.17 98.83,12.16 100.95,12.25 99.29,13.56 99.86,15.60 98.10,14.42 96.34,15.60 96.91,13.56 95.25,12.25 97.37,12.16" fill="#ffcc00"/>
 <circle cx="187" cy="30.5" r="21.8" fill="none" stroke="url(#afdg)" stroke-width="6.6"/>
 <path d="M170 38 A18.5 18.5 0 0 0 200 46" fill="none" stroke="#f7c4a6" stroke-width="1.6" opacity="0.8"/>
 <path d="M196 14 A18.5 18.5 0 0 1 204 34" fill="none" stroke="#c9c6ee" stroke-width="2" opacity="0.9"/>
 <text x="223" y="42" font-family="Liberation Sans" font-size="33" textLength="63.5" lengthAdjust="spacingAndGlyphs" fill="#2a1d7e">AFD</text>
 <path d="M294 30 C305 20 318 22 331 30 C318 38 305 40 294 30 Z" fill="#6dbb95" opacity="0.9"/>
 <path d="M328.5 4.5 C333 15 331 25 320 32 C316 22 320 10 328.5 4.5 Z" fill="#8aa694" opacity="0.95"/>
 <path d="M331 54 C333 43 330 35 320 29 C316 40 322 49 331 54 Z" fill="#8ec3c8" opacity="0.95"/>
 <path d="M320 31 C322 27 324 26 327 28 C325 31 322 33 319.5 34 Z" fill="#1f8a5a"/>
 <text x="346" y="43.5" font-family="Liberation Sans" font-weight="bold" font-size="39" textLength="79" lengthAdjust="spacingAndGlyphs" fill="#0a0a0a">icem</text>
</svg></div>
 <div id="attr"><span class="ln">Leaflet</span> <span style="color:#c9a36b">|</span> © <span class="ln">OpenStreetMap</span> contributors © <span class="ln">CARTO</span></div>
</div>
<div id="panel">
 <div class="t h2" style="left:14px;top:38px">Layer</div>
 <div class="t gi" style="left:13px;top:76px">Aquafarm locations (from field survey)</div>
 <div class="t sel" style="left:13px;top:112px">Select aqua statistic year</div>
 <div id="selbox"><span>2022</span><i></i></div>
 <div class="cb on" style="left:39px;top:211px"></div><div class="t lbl" style="left:64px;top:208px">Aquafarm</div>
 <div class="cb on" style="left:39px;top:243px"></div><div class="t lbl" style="left:64px;top:240px">Earth pond</div>
 <div class="cb on" style="left:39px;top:275px"></div><div class="t lbl" style="left:64px;top:272px">River cage</div>
 <div class="t gi" style="left:13px;top:308px;line-height:20px">Aquaculture ponds map (from remote<br>sensing analysis)</div>
 <div class="cb on" style="left:39px;top:368px"></div><div class="t lbl" style="left:64px;top:365px">Earth ponds</div>
 <div class="t gi" style="left:13px;top:401px;line-height:20px">Aquaculture suitability maps (from multi-<br>criteria analysis)</div>
 <div class="cb" style="left:39px;top:460px"></div><div class="t lbl" style="left:64px;top:457px">Estimated suitability for river cages</div>
 <div class="cb" style="left:39px;top:493px"></div><div class="t lbl" style="left:64px;top:489px">Estimated suitability for earth ponds</div>
 <div class="t h2" style="left:14px;top:538px">Legend</div>
 <div class="t lg0" style="left:13px;top:579px">Aquafarm locations (from field survey)</div>
 <div class="dot" style="left:13px;top:615px;width:25px;height:25px;background:#f97474"></div><div class="t lbl" style="left:43px;top:625px">Aquafarm</div>
 <div class="dot" style="left:15px;top:650px;width:21px;height:21px;background:#7b7bc1"></div><div class="t lbl" style="left:44px;top:658px">Earth pond</div>
 <div class="dot" style="left:18px;top:686px;width:15px;height:15px;background:#6db56f"></div><div class="t lbl" style="left:44px;top:691px">River cage</div>
 <div class="t lbl" style="left:13px;top:730px">Aquaculture ponds (potential)</div>
 <div class="sq" style="top:753px;background:#f73a3a"></div><div class="t lbl" style="left:39px;top:758px">High probability of aquaculture (farms)</div>
 <div class="sq" style="top:781px;background:#fe6e1f"></div><div class="t lbl" style="left:39px;top:786px">Medium probability of aquaculture (ponds)</div>
 <div class="sq" style="top:809px;background:#febb4f"></div><div class="t lbl" style="left:39px;top:814px">Low probability of aquaculture(ponds)</div>
 <div class="sq" style="top:837px;background:#3052c9"></div><div class="t lbl" style="left:39px;top:842px">Lake or Reservoir</div>
 <div class="sq" style="top:865px;background:#52b546"></div><div class="t lbl" style="left:39px;top:870px">Non-aquaculture water bodies</div>
 <div id="sbar"></div><div id="sarrow"></div>
</div>
<div id="bot"></div>
</body></html>
